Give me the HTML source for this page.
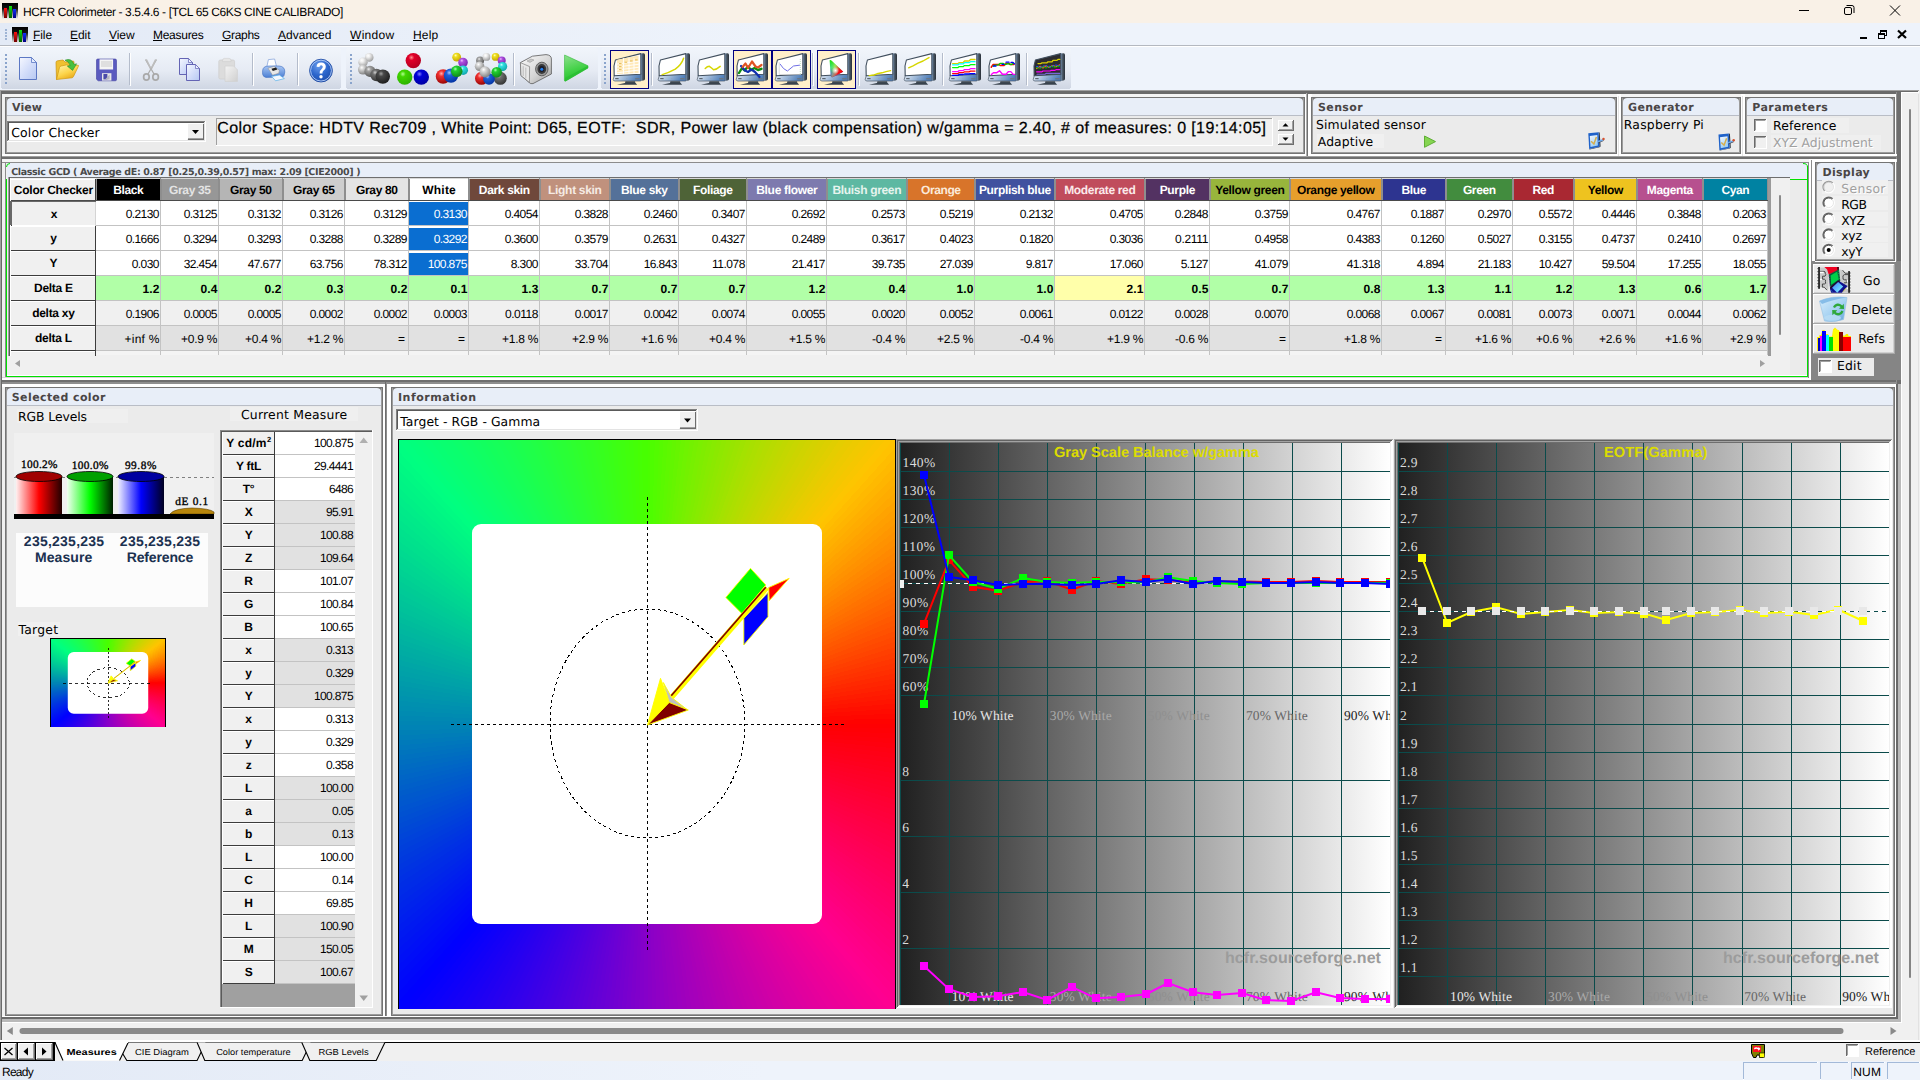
<!DOCTYPE html>
<html lang="en"><head><meta charset="utf-8"><title>HCFR Colorimeter - 3.5.4.6 - [TCL 65 C6KS CINE CALIBRADO]</title>
<style>
html,body{margin:0;padding:0;background:#f0f0f0;overflow:hidden;}
svg{display:block;}
text{white-space:pre;}
</style></head><body>
<svg width="1920" height="1080" viewBox="0 0 1920 1080" shape-rendering="crispEdges" text-rendering="geometricPrecision">
<defs>
<linearGradient id="icobg" x1="0" y1="0" x2="0" y2="1"><stop offset="0" stop-color="#000"/><stop offset="0.35" stop-color="#111"/><stop offset="1" stop-color="#f4f4f4"/></linearGradient>
<linearGradient id="icor" x1="0" y1="0" x2="0" y2="1"><stop offset="0" stop-color="#ff1010"/><stop offset="1" stop-color="#700000"/></linearGradient>
<linearGradient id="icog" x1="0" y1="0" x2="0" y2="1"><stop offset="0" stop-color="#10e010"/><stop offset="1" stop-color="#006000"/></linearGradient>
<linearGradient id="icob" x1="0" y1="0" x2="0" y2="1"><stop offset="0" stop-color="#1030ff"/><stop offset="1" stop-color="#000080"/></linearGradient>
<linearGradient id="tbgrad" x1="0" y1="0" x2="0" y2="1"><stop offset="0" stop-color="#f1f5fb"/><stop offset="0.55" stop-color="#e6ebf4"/><stop offset="1" stop-color="#cfd6e3"/></linearGradient>
<linearGradient id="menugrad" gradientUnits="userSpaceOnUse" x1="0" y1="0" x2="1920" y2="0"><stop offset="0" stop-color="#e3eaf6"/><stop offset="0.4" stop-color="#eef3fb"/><stop offset="1" stop-color="#eef3fb"/></linearGradient>
</defs>
<rect x="0" y="0" width="1920" height="1080" fill="#f0f0f0" />
<rect x="0" y="0" width="1920" height="23" fill="#f9f1e7" />
<g transform="translate(2,3) scale(1.0)">
<rect x="0" y="0" width="16" height="16" fill="url(#icobg)"/>
<rect x="2" y="5" width="3" height="10" fill="url(#icor)"/>
<rect x="6.5" y="3" width="3" height="12" fill="url(#icog)"/>
<rect x="11" y="6" width="3" height="9" fill="url(#icob)"/>
</g>
<text x="23.00" y="16.00" font-family="'Liberation Sans', sans-serif" font-size="12" fill="#000" letter-spacing="-0.380" >HCFR Colorimeter - 3.5.4.6 - [TCL 65 C6KS CINE CALIBRADO]</text>
<g stroke="#000" stroke-width="1" fill="none" shape-rendering="geometricPrecision">
<path d="M1799 10.5H1809"/>
<rect x="1844.5" y="7.5" width="7" height="7" rx="1.5"/>
<path d="M1846.5 5.5H1852 a2 2 0 0 1 2 2 V13"/>
<path d="M1890 5.5L1900 15.5M1900 5.5L1890 15.5"/>
</g>
<rect x="0" y="23" width="1920" height="22" fill="url(#menugrad)" />
<rect x="0" y="45" width="1920" height="1" fill="#b4b8c0" />
<rect x="0" y="46" width="1920" height="1" fill="#ffffff" />
<rect x="5" y="29" width="2" height="2" fill="#9fb4d4" />
<rect x="5" y="32" width="2" height="2" fill="#9fb4d4" />
<rect x="5" y="35" width="2" height="2" fill="#9fb4d4" />
<rect x="5" y="38" width="2" height="2" fill="#9fb4d4" />
<g transform="translate(12,27) scale(1.0)">
<rect x="0" y="0" width="16" height="16" fill="url(#icobg)"/>
<rect x="2" y="5" width="3" height="10" fill="url(#icor)"/>
<rect x="6.5" y="3" width="3" height="12" fill="url(#icog)"/>
<rect x="11" y="6" width="3" height="9" fill="url(#icob)"/>
</g>
<text x="33.00" y="39.00" font-family="'Liberation Sans', sans-serif" font-size="12" fill="#000" letter-spacing="-0.084" >File</text>
<rect x="33" y="40" width="7" height="1" fill="#000" />
<text x="70.00" y="39.00" font-family="'Liberation Sans', sans-serif" font-size="12" fill="#000" letter-spacing="-0.045" >Edit</text>
<rect x="70" y="40" width="8" height="1" fill="#000" />
<text x="109.00" y="39.00" font-family="'Liberation Sans', sans-serif" font-size="12" fill="#000" letter-spacing="-0.074" >View</text>
<rect x="109" y="40" width="8" height="1" fill="#000" />
<text x="153.00" y="39.00" font-family="'Liberation Sans', sans-serif" font-size="12" fill="#000" letter-spacing="-0.274" >Measures</text>
<rect x="153" y="40" width="9" height="1" fill="#000" />
<text x="222.00" y="39.00" font-family="'Liberation Sans', sans-serif" font-size="12" fill="#000" letter-spacing="-0.309" >Graphs</text>
<rect x="222" y="40" width="9" height="1" fill="#000" />
<text x="278.00" y="39.00" font-family="'Liberation Sans', sans-serif" font-size="12" fill="#000" letter-spacing="0.016" >Advanced</text>
<rect x="278" y="40" width="8" height="1" fill="#000" />
<text x="350.00" y="39.00" font-family="'Liberation Sans', sans-serif" font-size="12" fill="#000" letter-spacing="0.303" >Window</text>
<rect x="350" y="40" width="12" height="1" fill="#000" />
<text x="413.00" y="39.00" font-family="'Liberation Sans', sans-serif" font-size="12" fill="#000" letter-spacing="0.205" >Help</text>
<rect x="413" y="40" width="9" height="1" fill="#000" />
<rect x="1860" y="37" width="7" height="2" fill="#000" />
<g fill="none" stroke="#000" stroke-width="1">
<rect x="1880.5" y="30.5" width="6" height="5"/><rect x="1878.5" y="33.5" width="6" height="5" fill="#eef3fb"/>
</g>
<rect x="1880" y="31" width="7" height="1" fill="#000" />
<rect x="1878" y="34" width="7" height="1" fill="#000" />
<path d="M1898 30.5L1906 38M1906 30.5L1898 38" stroke="#000" stroke-width="2.2" fill="none" shape-rendering="geometricPrecision"/>
<rect x="0" y="47" width="1920" height="43" fill="#eef3fb" />
<rect x="1" y="48" width="340" height="41" rx="3" fill="url(#tbgrad)"/>
<rect x="346" y="48" width="252" height="41" rx="3" fill="url(#tbgrad)"/>
<rect x="601" y="48" width="470" height="41" rx="3" fill="url(#tbgrad)"/>
<rect x="5" y="54" width="2" height="2" fill="#8aa4cc" />
<rect x="5" y="58" width="2" height="2" fill="#8aa4cc" />
<rect x="5" y="62" width="2" height="2" fill="#8aa4cc" />
<rect x="5" y="66" width="2" height="2" fill="#8aa4cc" />
<rect x="5" y="70" width="2" height="2" fill="#8aa4cc" />
<rect x="5" y="74" width="2" height="2" fill="#8aa4cc" />
<rect x="5" y="78" width="2" height="2" fill="#8aa4cc" />
<rect x="5" y="82" width="2" height="2" fill="#8aa4cc" />
<rect x="350" y="54" width="2" height="2" fill="#8aa4cc" />
<rect x="350" y="58" width="2" height="2" fill="#8aa4cc" />
<rect x="350" y="62" width="2" height="2" fill="#8aa4cc" />
<rect x="350" y="66" width="2" height="2" fill="#8aa4cc" />
<rect x="350" y="70" width="2" height="2" fill="#8aa4cc" />
<rect x="350" y="74" width="2" height="2" fill="#8aa4cc" />
<rect x="350" y="78" width="2" height="2" fill="#8aa4cc" />
<rect x="350" y="82" width="2" height="2" fill="#8aa4cc" />
<rect x="604" y="54" width="2" height="2" fill="#8aa4cc" />
<rect x="604" y="58" width="2" height="2" fill="#8aa4cc" />
<rect x="604" y="62" width="2" height="2" fill="#8aa4cc" />
<rect x="604" y="66" width="2" height="2" fill="#8aa4cc" />
<rect x="604" y="70" width="2" height="2" fill="#8aa4cc" />
<rect x="604" y="74" width="2" height="2" fill="#8aa4cc" />
<rect x="604" y="78" width="2" height="2" fill="#8aa4cc" />
<rect x="604" y="82" width="2" height="2" fill="#8aa4cc" />
<rect x="0" y="90" width="1919" height="1" fill="#a0a0a0" />
<rect x="0" y="91" width="1918" height="1" fill="#6a6a6a" />
<rect x="1" y="92" width="1900" height="2" fill="#6a6a6a" />
<rect x="0" y="90" width="1" height="950" fill="#a0a0a0" />
<rect x="1" y="92" width="1" height="948" fill="#6a6a6a" />
<rect x="0" y="1042" width="1920" height="1" fill="#000" />
<rect x="0" y="1043" width="1920" height="18" fill="#f0f0f0" />
<rect x="0" y="1061" width="1920" height="19" fill="url(#menugrad)" />
<text x="2.00" y="1076.00" font-family="'Liberation Sans', sans-serif" font-size="12" fill="#000" letter-spacing="-0.738" >Ready</text>
<rect x="1743" y="1062" width="75" height="18" fill="#ffffff" />
<rect x="1743" y="1062" width="74" height="17" fill="#a3b9d8" />
<rect x="1744" y="1063" width="74" height="17" fill="#eef3fb" />
<rect x="1820" y="1062" width="29" height="18" fill="#ffffff" />
<rect x="1820" y="1062" width="28" height="17" fill="#a3b9d8" />
<rect x="1821" y="1063" width="28" height="17" fill="#eef3fb" />
<rect x="1851" y="1062" width="34" height="18" fill="#ffffff" />
<rect x="1851" y="1062" width="33" height="17" fill="#a3b9d8" />
<rect x="1852" y="1063" width="33" height="17" fill="#eef3fb" />
<rect x="1887" y="1062" width="33" height="18" fill="#ffffff" />
<rect x="1887" y="1062" width="32" height="17" fill="#a3b9d8" />
<rect x="1888" y="1063" width="32" height="17" fill="#eef3fb" />
<text x="1853.30" y="1075.50" font-family="'Liberation Sans', sans-serif" font-size="12" fill="#000" letter-spacing="0.157" >NUM</text>
<defs><linearGradient id="edg" x1="0" y1="0" x2="0.4" y2="1"><stop offset="0" stop-color="#f6f9fe"/><stop offset="1" stop-color="#9ccff6"/></linearGradient></defs>
<rect x="2" y="94" width="1896" height="3" fill="#f4f4f4" />
<rect x="1895" y="94" width="1" height="928" fill="#ffffff" />
<rect x="1896" y="92" width="1" height="292" fill="#909090" />
<rect x="1897" y="92" width="4" height="292" fill="#6e6e6e" />
<rect x="1896" y="384" width="2" height="635" fill="#6a6a6a" />
<rect x="1898" y="384" width="3" height="638" fill="#b9b9b9" />
<rect x="1901" y="92" width="1" height="931" fill="#ffffff" />
<rect x="1902" y="92" width="18" height="948" fill="#f0f0f0" />
<rect x="1901" y="92" width="18" height="1" fill="#ffffff" />
<rect x="1918" y="94" width="1" height="946" fill="#e2e2e2" />
<rect x="2" y="154" width="1895" height="2" fill="#ffffff" />
<rect x="2" y="156" width="1894" height="1" fill="#a0a0a0" />
<rect x="2" y="157" width="1894" height="2" fill="#6e6e6e" />
<rect x="2" y="159" width="1895" height="3" fill="#f4f4f4" />
<rect x="1304" y="94" width="8" height="62" fill="#ffffff" />
<rect x="1306" y="93" width="1" height="63" fill="#b0b0b0" />
<rect x="1307" y="93" width="1" height="63" fill="#707070" />
<rect x="1617" y="94" width="4" height="62" fill="#ffffff" />
<rect x="1618" y="96" width="1" height="60" fill="#e4e4e4" />
<rect x="1741" y="94" width="4" height="62" fill="#ffffff" />
<rect x="1742" y="96" width="1" height="60" fill="#e4e4e4" />
<rect x="5" y="97" width="1301" height="58" fill="#ffffff" />
<rect x="5" y="97" width="1300" height="57" fill="#747474" />
<rect x="6" y="98" width="1298" height="55" fill="#9c9c9c" />
<rect x="7" y="99" width="1296" height="53" fill="#ebebeb" />
<path d="M7 115 V102 Q7 98 11 98 H1299 Q1303 98 1303 102 V115 Z" fill="#e8eef8" shape-rendering="geometricPrecision"/>
<path d="M7 102 Q7 98 11 98 H7 Z" fill="#7c7c7c" shape-rendering="geometricPrecision"/>
<path d="M1303 102 Q1303 98 1299 98 H1303 Z" fill="#7c7c7c" shape-rendering="geometricPrecision"/>
<rect x="7" y="115" width="1296" height="1" fill="#b9bdc6" />
<text x="12.00" y="110.60" font-family="'DejaVu Sans', sans-serif" font-size="11" font-weight="bold" fill="#4a4646" letter-spacing="0.072" >View</text>
<rect x="7" y="121" width="199" height="21" fill="#ffffff" />
<rect x="7" y="121" width="198" height="20" fill="#808080" />
<rect x="8" y="122" width="197" height="19" fill="#e3e3e3" />
<rect x="8" y="122" width="196" height="18" fill="#5a5a5a" />
<rect x="9" y="123" width="195" height="17" fill="#ffffff" />
<rect x="187" y="123" width="17" height="17" fill="#f0f0f0" />
<rect x="187" y="123" width="16" height="16" fill="#ffffff" />
<rect x="188" y="124" width="16" height="16" fill="#6d6d6d" />
<rect x="188" y="124" width="15" height="15" fill="#f0f0f0" />
<rect x="188" y="124" width="15" height="14" fill="#f0f0f0" />
<rect x="188" y="138" width="15" height="1" fill="#a0a0a0" />
<path d="M192.0 130.0 H199.0 L195.5 134.0 Z" fill="#000" shape-rendering="geometricPrecision"/>
<text x="11.30" y="137.00" font-family="'DejaVu Sans', sans-serif" font-size="12.4" fill="#000" letter-spacing="0.135" >Color Checker</text>
<rect x="216" y="118" width="1057" height="28" fill="#ffffff" />
<rect x="216" y="118" width="1056" height="27" fill="#a0a0a0" />
<rect x="217" y="119" width="1055" height="26" fill="#f0f0f0" />
<text x="217.30" y="133.20" font-family="'Liberation Sans', sans-serif" font-size="16" fill="#000" letter-spacing="0.388" stroke="#000" stroke-width="0.25">Color Space: HDTV Rec709 , White Point: D65, EOTF:  SDR, Power law (black compensation) w/gamma = 2.40, # of measures: 0 [19:14:05]</text>
<rect x="1278" y="120" width="16" height="11" fill="#6d6d6d" />
<rect x="1278" y="120" width="15" height="10" fill="#ffffff" />
<rect x="1279" y="121" width="14" height="9" fill="#a0a0a0" />
<rect x="1279" y="121" width="13" height="8" fill="#f0f0f0" />
<path d="M1282.5 126.5 H1288.5 L1285.5 123.2 Z" fill="#000" shape-rendering="geometricPrecision"/>
<rect x="1278" y="134" width="16" height="11" fill="#6d6d6d" />
<rect x="1278" y="134" width="15" height="10" fill="#ffffff" />
<rect x="1279" y="135" width="14" height="9" fill="#a0a0a0" />
<rect x="1279" y="135" width="13" height="8" fill="#f0f0f0" />
<path d="M1282.5 137.5 H1288.5 L1285.5 140.8 Z" fill="#000" shape-rendering="geometricPrecision"/>
<rect x="1311" y="97" width="307" height="58" fill="#ffffff" />
<rect x="1311" y="97" width="306" height="57" fill="#747474" />
<rect x="1312" y="98" width="304" height="55" fill="#9c9c9c" />
<rect x="1313" y="99" width="302" height="53" fill="#ebebeb" />
<path d="M1313 115 V102 Q1313 98 1317 98 H1611 Q1615 98 1615 102 V115 Z" fill="#e8eef8" shape-rendering="geometricPrecision"/>
<path d="M1313 102 Q1313 98 1317 98 H1313 Z" fill="#7c7c7c" shape-rendering="geometricPrecision"/>
<path d="M1615 102 Q1615 98 1611 98 H1615 Z" fill="#7c7c7c" shape-rendering="geometricPrecision"/>
<rect x="1313" y="115" width="302" height="1" fill="#b9bdc6" />
<text x="1318.00" y="110.60" font-family="'DejaVu Sans', sans-serif" font-size="11" font-weight="bold" fill="#4a4646" letter-spacing="0.376" >Sensor</text>
<text x="1316.00" y="128.80" font-family="'DejaVu Sans', sans-serif" font-size="12.4" fill="#000" letter-spacing="0.144" >Simulated sensor</text>
<rect x="1317" y="134" width="67" height="14" fill="#f0f0f0" />
<text x="1317.80" y="145.70" font-family="'DejaVu Sans', sans-serif" font-size="12.4" fill="#000" letter-spacing="0.078" >Adaptive</text>
<path d="M1424.5 136 L1435.5 141.6 L1424.5 147.3 Z" fill="#86d552" stroke="#5fae35" stroke-width="1" shape-rendering="geometricPrecision"/>
<g transform="translate(1588,133)" shape-rendering="geometricPrecision">
<path d="M1.6 16.4 L11.6 14.2 L12.6 13.6 L11.7 -0.4 L10.6 -0.7 L11.4 13.8 L1.2 16 Z" fill="#2c3642"/>
<path d="M0.3 0.3 L10.6 -0.7 L11.4 13.8 L1.2 16 Z" fill="#1f62c9"/>
<path d="M1.8 3 L9.3 2 L9.9 12.6 L2.5 14 Z" fill="url(#edg)"/>
<path d="M3.1 8.3 L5.9 11 L8.4 4.1" stroke="#d6ae4c" stroke-width="1.5" fill="none"/>
<path d="M10.2 9.6 L15.6 7.5" stroke="#3a4048" stroke-width="0.9"/>
<path d="M9.8 8.7 L15 6.7" stroke="#6aa8ec" stroke-width="1.5"/>
<circle cx="15.5" cy="6.1" r="1.25" fill="#d4512f"/>
</g>
<rect x="1621" y="97" width="121" height="58" fill="#ffffff" />
<rect x="1621" y="97" width="120" height="57" fill="#747474" />
<rect x="1622" y="98" width="118" height="55" fill="#9c9c9c" />
<rect x="1623" y="99" width="116" height="53" fill="#ebebeb" />
<path d="M1623 115 V102 Q1623 98 1627 98 H1735 Q1739 98 1739 102 V115 Z" fill="#e8eef8" shape-rendering="geometricPrecision"/>
<path d="M1623 102 Q1623 98 1627 98 H1623 Z" fill="#7c7c7c" shape-rendering="geometricPrecision"/>
<path d="M1739 102 Q1739 98 1735 98 H1739 Z" fill="#7c7c7c" shape-rendering="geometricPrecision"/>
<rect x="1623" y="115" width="116" height="1" fill="#b9bdc6" />
<text x="1628.00" y="110.60" font-family="'DejaVu Sans', sans-serif" font-size="11" font-weight="bold" fill="#4a4646" letter-spacing="0.348" >Generator</text>
<text x="1623.80" y="128.80" font-family="'DejaVu Sans', sans-serif" font-size="12.4" fill="#000" letter-spacing="0.218" >Raspberry Pi</text>
<g transform="translate(1718.2,134.2)" shape-rendering="geometricPrecision">
<path d="M1.6 16.4 L11.6 14.2 L12.6 13.6 L11.7 -0.4 L10.6 -0.7 L11.4 13.8 L1.2 16 Z" fill="#2c3642"/>
<path d="M0.3 0.3 L10.6 -0.7 L11.4 13.8 L1.2 16 Z" fill="#1f62c9"/>
<path d="M1.8 3 L9.3 2 L9.9 12.6 L2.5 14 Z" fill="url(#edg)"/>
<path d="M3.1 8.3 L5.9 11 L8.4 4.1" stroke="#d6ae4c" stroke-width="1.5" fill="none"/>
<path d="M10.2 9.6 L15.6 7.5" stroke="#3a4048" stroke-width="0.9"/>
<path d="M9.8 8.7 L15 6.7" stroke="#6aa8ec" stroke-width="1.5"/>
<circle cx="15.5" cy="6.1" r="1.25" fill="#d4512f"/>
</g>
<rect x="1745" y="97" width="151" height="58" fill="#ffffff" />
<rect x="1745" y="97" width="150" height="57" fill="#747474" />
<rect x="1746" y="98" width="148" height="55" fill="#9c9c9c" />
<rect x="1747" y="99" width="146" height="53" fill="#ebebeb" />
<path d="M1747 115 V102 Q1747 98 1751 98 H1889 Q1893 98 1893 102 V115 Z" fill="#e8eef8" shape-rendering="geometricPrecision"/>
<path d="M1747 102 Q1747 98 1751 98 H1747 Z" fill="#7c7c7c" shape-rendering="geometricPrecision"/>
<path d="M1893 102 Q1893 98 1889 98 H1893 Z" fill="#7c7c7c" shape-rendering="geometricPrecision"/>
<rect x="1747" y="115" width="146" height="1" fill="#b9bdc6" />
<text x="1752.30" y="110.60" font-family="'DejaVu Sans', sans-serif" font-size="11" font-weight="bold" fill="#4a4646" letter-spacing="0.435" >Parameters</text>
<rect x="1771" y="118" width="78" height="15" fill="#efefef" />
<rect x="1754" y="119" width="13" height="13" fill="#ffffff" />
<rect x="1754" y="119" width="12" height="12" fill="#6a6a6a" />
<rect x="1755" y="120" width="11" height="11" fill="#e3e3e3" />
<rect x="1755" y="120" width="10" height="10" fill="#a0a0a0" />
<rect x="1756" y="121" width="10" height="10" fill="#fff" />
<text x="1773.00" y="129.90" font-family="'DejaVu Sans', sans-serif" font-size="12.4" fill="#000" letter-spacing="0.117" >Reference</text>
<rect x="1771" y="135" width="110" height="15" fill="#efefef" />
<rect x="1754" y="136" width="13" height="13" fill="#ffffff" />
<rect x="1754" y="136" width="12" height="12" fill="#6a6a6a" />
<rect x="1755" y="137" width="11" height="11" fill="#e3e3e3" />
<rect x="1755" y="137" width="10" height="10" fill="#a0a0a0" />
<rect x="1756" y="138" width="10" height="10" fill="#f0f0f0" />
<text x="1774.00" y="148.00" font-family="'DejaVu Sans', sans-serif" font-size="12.4" fill="#ffffff" letter-spacing="0.007" >XYZ Adjustment</text>
<text x="1773.00" y="147.00" font-family="'DejaVu Sans', sans-serif" font-size="12.4" fill="#a0a0a0" letter-spacing="0.007" >XYZ Adjustment</text>
<rect x="2" y="162" width="1808" height="1" fill="#8c8c8c" />
<rect x="5" y="163" width="1804" height="214" fill="#f0f0f0" />
<rect x="7" y="163" width="1800" height="15" fill="#e8eef8" />
<text x="11.20" y="175.00" font-family="'DejaVu Sans', sans-serif" font-size="9.5" font-weight="bold" fill="#4a4a4a" letter-spacing="-0.359" >Classic GCD ( Average dE: 0.87 [0.25,0.39,0.57] max: 2.09 [CIE2000] )</text>
<rect x="5" y="162" width="1" height="216" fill="#8c8c8c" />
<rect x="6" y="179" width="1" height="198" fill="#00e000" />
<rect x="1807" y="166" width="1" height="211" fill="#00e000" />
<rect x="6" y="376" width="1802" height="1" fill="#00e000" />
<rect x="1790" y="179" width="18" height="1" fill="#00e000" />
<path d="M6.5 167 Q6.5 163.5 10 163.5" stroke="#00e000" fill="none" stroke-width="1" shape-rendering="geometricPrecision"/>
<path d="M1807.5 167 Q1807.5 163.5 1803 163.5" stroke="#00e000" fill="none" stroke-width="1" shape-rendering="geometricPrecision"/>
<rect x="7" y="375" width="1800" height="1" fill="#ffffff" />
<rect x="1790" y="180" width="17" height="195" fill="#ebebeb" />
<rect x="8" y="177" width="1782" height="198" fill="#f0f0f0" />
<rect x="8" y="177" width="1782" height="1" fill="#6e6e6e" />
<rect x="8" y="177" width="1" height="179" fill="#a0a0a0" />
<rect x="9" y="177" width="1" height="179" fill="#5a5a5a" />
<rect x="10" y="178" width="1" height="178" fill="#ffffff" />
<rect x="11" y="179" width="84" height="176" fill="#f0f0f0" />
<rect x="11" y="179" width="84" height="1" fill="#ffffff" />
<rect x="95" y="179" width="1" height="177" fill="#3c3c3c" />
<text x="53.39" y="193.70" font-family="'Liberation Sans', sans-serif" font-size="12" font-weight="bold" fill="#000" text-anchor="middle" letter-spacing="-0.217" >Color Checker</text>
<rect x="96" y="201" width="1672" height="25" fill="#ffffff" />
<rect x="96" y="226" width="1672" height="25" fill="#ffffff" />
<rect x="96" y="251" width="1672" height="25" fill="#ffffff" />
<rect x="96" y="276" width="1672" height="25" fill="#b1ffa7" />
<rect x="96" y="301" width="1672" height="25" fill="#f0f0f0" />
<rect x="96" y="326" width="1672" height="25" fill="#e1e1e1" />
<rect x="96" y="351" width="1672" height="4" fill="#f4f4f4" />
<rect x="1055" y="276" width="89" height="24" fill="#ffffaa" />
<rect x="409" y="202" width="59" height="23" fill="#0a6ed1" />
<rect x="409" y="228" width="59" height="22" fill="#0a6ed1" />
<rect x="409" y="253" width="59" height="22" fill="#0a6ed1" />
<rect x="96" y="225" width="1672" height="1" fill="#c3c3c3" />
<rect x="11" y="225" width="84" height="1" fill="#3c3c3c" />
<rect x="11" y="226" width="84" height="1" fill="#ffffff" />
<rect x="96" y="250" width="1672" height="1" fill="#c3c3c3" />
<rect x="11" y="250" width="84" height="1" fill="#3c3c3c" />
<rect x="11" y="251" width="84" height="1" fill="#ffffff" />
<rect x="96" y="275" width="1672" height="1" fill="#c3c3c3" />
<rect x="11" y="275" width="84" height="1" fill="#3c3c3c" />
<rect x="11" y="276" width="84" height="1" fill="#ffffff" />
<rect x="96" y="300" width="1672" height="1" fill="#c3c3c3" />
<rect x="11" y="300" width="84" height="1" fill="#3c3c3c" />
<rect x="11" y="301" width="84" height="1" fill="#ffffff" />
<rect x="96" y="325" width="1672" height="1" fill="#c3c3c3" />
<rect x="11" y="325" width="84" height="1" fill="#3c3c3c" />
<rect x="11" y="326" width="84" height="1" fill="#ffffff" />
<rect x="96" y="350" width="1672" height="1" fill="#c3c3c3" />
<rect x="11" y="350" width="84" height="1" fill="#3c3c3c" />
<rect x="11" y="351" width="84" height="1" fill="#ffffff" />
<rect x="160" y="201" width="1" height="154" fill="#c3c3c3" />
<rect x="218" y="201" width="1" height="154" fill="#c3c3c3" />
<rect x="282" y="201" width="1" height="154" fill="#c3c3c3" />
<rect x="344" y="201" width="1" height="154" fill="#c3c3c3" />
<rect x="408" y="201" width="1" height="154" fill="#c3c3c3" />
<rect x="468" y="201" width="1" height="154" fill="#c3c3c3" />
<rect x="539" y="201" width="1" height="154" fill="#c3c3c3" />
<rect x="609" y="201" width="1" height="154" fill="#c3c3c3" />
<rect x="678" y="201" width="1" height="154" fill="#c3c3c3" />
<rect x="746" y="201" width="1" height="154" fill="#c3c3c3" />
<rect x="826" y="201" width="1" height="154" fill="#c3c3c3" />
<rect x="906" y="201" width="1" height="154" fill="#c3c3c3" />
<rect x="974" y="201" width="1" height="154" fill="#c3c3c3" />
<rect x="1054" y="201" width="1" height="154" fill="#c3c3c3" />
<rect x="1144" y="201" width="1" height="154" fill="#c3c3c3" />
<rect x="1209" y="201" width="1" height="154" fill="#c3c3c3" />
<rect x="1289" y="201" width="1" height="154" fill="#c3c3c3" />
<rect x="1381" y="201" width="1" height="154" fill="#c3c3c3" />
<rect x="1445" y="201" width="1" height="154" fill="#c3c3c3" />
<rect x="1512" y="201" width="1" height="154" fill="#c3c3c3" />
<rect x="1573" y="201" width="1" height="154" fill="#c3c3c3" />
<rect x="1636" y="201" width="1" height="154" fill="#c3c3c3" />
<rect x="1702" y="201" width="1" height="154" fill="#c3c3c3" />
<rect x="1767" y="201" width="1" height="154" fill="#c3c3c3" />
<rect x="11" y="200" width="1757" height="1" fill="#4a4a4a" />
<rect x="96" y="178" width="65" height="22" fill="#8e8e8e" />
<rect x="96" y="178" width="64" height="1" fill="#d8d8d8" />
<rect x="97" y="179" width="63" height="21" fill="#000000" />
<text x="128.32" y="193.70" font-family="'Liberation Sans', sans-serif" font-size="12" font-weight="bold" fill="#ffffff" text-anchor="middle" letter-spacing="-0.352" >Black</text>
<rect x="161" y="178" width="58" height="22" fill="#8e8e8e" />
<rect x="161" y="178" width="57" height="1" fill="#d8d8d8" />
<rect x="162" y="179" width="56" height="21" fill="#979797" />
<text x="189.83" y="193.70" font-family="'Liberation Sans', sans-serif" font-size="12" font-weight="bold" fill="#e4e4e4" text-anchor="middle" letter-spacing="-0.346" >Gray 35</text>
<rect x="219" y="178" width="64" height="22" fill="#8e8e8e" />
<rect x="219" y="178" width="63" height="1" fill="#d8d8d8" />
<rect x="220" y="179" width="62" height="21" fill="#b5b5b5" />
<text x="250.83" y="193.70" font-family="'Liberation Sans', sans-serif" font-size="12" font-weight="bold" fill="#000000" text-anchor="middle" letter-spacing="-0.346" >Gray 50</text>
<rect x="283" y="178" width="62" height="22" fill="#8e8e8e" />
<rect x="283" y="178" width="61" height="1" fill="#d8d8d8" />
<rect x="284" y="179" width="60" height="21" fill="#cecece" />
<text x="313.83" y="193.70" font-family="'Liberation Sans', sans-serif" font-size="12" font-weight="bold" fill="#000000" text-anchor="middle" letter-spacing="-0.346" >Gray 65</text>
<rect x="345" y="178" width="64" height="22" fill="#8e8e8e" />
<rect x="345" y="178" width="63" height="1" fill="#d8d8d8" />
<rect x="346" y="179" width="62" height="21" fill="#e4e4e4" />
<text x="376.83" y="193.70" font-family="'Liberation Sans', sans-serif" font-size="12" font-weight="bold" fill="#000000" text-anchor="middle" letter-spacing="-0.346" >Gray 80</text>
<rect x="409" y="178" width="60" height="22" fill="#8e8e8e" />
<rect x="409" y="178" width="59" height="1" fill="#d8d8d8" />
<rect x="410" y="179" width="58" height="21" fill="#ffffff" />
<text x="439.11" y="193.70" font-family="'Liberation Sans', sans-serif" font-size="12" font-weight="bold" fill="#000000" text-anchor="middle" letter-spacing="0.229" >White</text>
<rect x="469" y="178" width="71" height="22" fill="#8e8e8e" />
<rect x="469" y="178" width="70" height="1" fill="#d8d8d8" />
<rect x="470" y="179" width="69" height="21" fill="#6f483b" />
<text x="504.33" y="193.70" font-family="'Liberation Sans', sans-serif" font-size="12" font-weight="bold" fill="#ffffff" text-anchor="middle" letter-spacing="-0.330" >Dark skin</text>
<rect x="540" y="178" width="70" height="22" fill="#8e8e8e" />
<rect x="540" y="178" width="69" height="1" fill="#d8d8d8" />
<rect x="541" y="179" width="68" height="21" fill="#c0917d" />
<text x="574.84" y="193.70" font-family="'Liberation Sans', sans-serif" font-size="12" font-weight="bold" fill="#f6ebe4" text-anchor="middle" letter-spacing="-0.312" >Light skin</text>
<rect x="610" y="178" width="69" height="22" fill="#8e8e8e" />
<rect x="610" y="178" width="68" height="1" fill="#d8d8d8" />
<rect x="611" y="179" width="67" height="21" fill="#547199" />
<text x="644.33" y="193.70" font-family="'Liberation Sans', sans-serif" font-size="12" font-weight="bold" fill="#ffffff" text-anchor="middle" letter-spacing="-0.339" >Blue sky</text>
<rect x="679" y="178" width="68" height="22" fill="#8e8e8e" />
<rect x="679" y="178" width="67" height="1" fill="#d8d8d8" />
<rect x="680" y="179" width="66" height="21" fill="#4e6337" />
<text x="712.83" y="193.70" font-family="'Liberation Sans', sans-serif" font-size="12" font-weight="bold" fill="#ffffff" text-anchor="middle" letter-spacing="-0.330" >Foliage</text>
<rect x="747" y="178" width="80" height="22" fill="#8e8e8e" />
<rect x="747" y="178" width="79" height="1" fill="#d8d8d8" />
<rect x="748" y="179" width="78" height="21" fill="#7d7aae" />
<text x="786.84" y="193.70" font-family="'Liberation Sans', sans-serif" font-size="12" font-weight="bold" fill="#ffffff" text-anchor="middle" letter-spacing="-0.323" >Blue flower</text>
<rect x="827" y="178" width="80" height="22" fill="#8e8e8e" />
<rect x="827" y="178" width="79" height="1" fill="#d8d8d8" />
<rect x="828" y="179" width="78" height="21" fill="#5db8a2" />
<text x="866.83" y="193.70" font-family="'Liberation Sans', sans-serif" font-size="12" font-weight="bold" fill="#e6f4ee" text-anchor="middle" letter-spacing="-0.333" >Bluish green</text>
<rect x="907" y="178" width="68" height="22" fill="#8e8e8e" />
<rect x="907" y="178" width="67" height="1" fill="#d8d8d8" />
<rect x="908" y="179" width="66" height="21" fill="#d8742a" />
<text x="940.81" y="193.70" font-family="'Liberation Sans', sans-serif" font-size="12" font-weight="bold" fill="#fbeadb" text-anchor="middle" letter-spacing="-0.385" >Orange</text>
<rect x="975" y="178" width="80" height="22" fill="#8e8e8e" />
<rect x="975" y="178" width="79" height="1" fill="#d8d8d8" />
<rect x="976" y="179" width="78" height="21" fill="#40529f" />
<text x="1014.84" y="193.70" font-family="'Liberation Sans', sans-serif" font-size="12" font-weight="bold" fill="#ffffff" text-anchor="middle" letter-spacing="-0.322" >Purplish blue</text>
<rect x="1055" y="178" width="90" height="22" fill="#8e8e8e" />
<rect x="1055" y="178" width="89" height="1" fill="#d8d8d8" />
<rect x="1056" y="179" width="88" height="21" fill="#c04c5c" />
<text x="1099.83" y="193.70" font-family="'Liberation Sans', sans-serif" font-size="12" font-weight="bold" fill="#fbe9ea" text-anchor="middle" letter-spacing="-0.345" >Moderate red</text>
<rect x="1145" y="178" width="65" height="22" fill="#8e8e8e" />
<rect x="1145" y="178" width="64" height="1" fill="#d8d8d8" />
<rect x="1146" y="179" width="63" height="21" fill="#533262" />
<text x="1177.33" y="193.70" font-family="'Liberation Sans', sans-serif" font-size="12" font-weight="bold" fill="#ffffff" text-anchor="middle" letter-spacing="-0.342" >Purple</text>
<rect x="1210" y="178" width="80" height="22" fill="#8e8e8e" />
<rect x="1210" y="178" width="79" height="1" fill="#d8d8d8" />
<rect x="1211" y="179" width="78" height="21" fill="#98b53c" />
<text x="1249.83" y="193.70" font-family="'Liberation Sans', sans-serif" font-size="12" font-weight="bold" fill="#000000" text-anchor="middle" letter-spacing="-0.336" >Yellow green</text>
<rect x="1290" y="178" width="92" height="22" fill="#8e8e8e" />
<rect x="1290" y="178" width="91" height="1" fill="#d8d8d8" />
<rect x="1291" y="179" width="90" height="21" fill="#e69f2c" />
<text x="1335.83" y="193.70" font-family="'Liberation Sans', sans-serif" font-size="12" font-weight="bold" fill="#000000" text-anchor="middle" letter-spacing="-0.347" >Orange yellow</text>
<rect x="1382" y="178" width="64" height="22" fill="#8e8e8e" />
<rect x="1382" y="178" width="63" height="1" fill="#d8d8d8" />
<rect x="1383" y="179" width="62" height="21" fill="#2d3490" />
<text x="1413.82" y="193.70" font-family="'Liberation Sans', sans-serif" font-size="12" font-weight="bold" fill="#ffffff" text-anchor="middle" letter-spacing="-0.358" >Blue</text>
<rect x="1446" y="178" width="67" height="22" fill="#8e8e8e" />
<rect x="1446" y="178" width="66" height="1" fill="#d8d8d8" />
<rect x="1447" y="179" width="65" height="21" fill="#428c3e" />
<text x="1479.31" y="193.70" font-family="'Liberation Sans', sans-serif" font-size="12" font-weight="bold" fill="#ffffff" text-anchor="middle" letter-spacing="-0.382" >Green</text>
<rect x="1513" y="178" width="61" height="22" fill="#8e8e8e" />
<rect x="1513" y="178" width="60" height="1" fill="#d8d8d8" />
<rect x="1514" y="179" width="59" height="21" fill="#a92832" />
<text x="1543.29" y="193.70" font-family="'Liberation Sans', sans-serif" font-size="12" font-weight="bold" fill="#ffffff" text-anchor="middle" letter-spacing="-0.416" >Red</text>
<rect x="1574" y="178" width="63" height="22" fill="#8e8e8e" />
<rect x="1574" y="178" width="62" height="1" fill="#d8d8d8" />
<rect x="1575" y="179" width="61" height="21" fill="#eec31f" />
<text x="1605.33" y="193.70" font-family="'Liberation Sans', sans-serif" font-size="12" font-weight="bold" fill="#000000" text-anchor="middle" letter-spacing="-0.342" >Yellow</text>
<rect x="1637" y="178" width="66" height="22" fill="#8e8e8e" />
<rect x="1637" y="178" width="65" height="1" fill="#d8d8d8" />
<rect x="1638" y="179" width="64" height="21" fill="#b7508f" />
<text x="1669.81" y="193.70" font-family="'Liberation Sans', sans-serif" font-size="12" font-weight="bold" fill="#ffffff" text-anchor="middle" letter-spacing="-0.382" >Magenta</text>
<rect x="1703" y="178" width="65" height="22" fill="#8e8e8e" />
<rect x="1703" y="178" width="64" height="1" fill="#d8d8d8" />
<rect x="1704" y="179" width="63" height="21" fill="#0082a2" />
<text x="1735.30" y="193.70" font-family="'Liberation Sans', sans-serif" font-size="12" font-weight="bold" fill="#ffffff" text-anchor="middle" letter-spacing="-0.403" >Cyan</text>
<text x="53.33" y="217.20" font-family="'Liberation Sans', sans-serif" font-size="12" font-weight="bold" fill="#000" text-anchor="middle" letter-spacing="-0.334" >x</text>
<text x="158.78" y="217.60" font-family="'Liberation Sans', sans-serif" font-size="12" fill="#000" text-anchor="end" letter-spacing="-0.617" >0.2130</text>
<text x="216.78" y="217.60" font-family="'Liberation Sans', sans-serif" font-size="12" fill="#000" text-anchor="end" letter-spacing="-0.617" >0.3125</text>
<text x="280.78" y="217.60" font-family="'Liberation Sans', sans-serif" font-size="12" fill="#000" text-anchor="end" letter-spacing="-0.617" >0.3132</text>
<text x="342.78" y="217.60" font-family="'Liberation Sans', sans-serif" font-size="12" fill="#000" text-anchor="end" letter-spacing="-0.617" >0.3126</text>
<text x="406.78" y="217.60" font-family="'Liberation Sans', sans-serif" font-size="12" fill="#000" text-anchor="end" letter-spacing="-0.617" >0.3129</text>
<text x="466.78" y="217.60" font-family="'Liberation Sans', sans-serif" font-size="12" fill="#ffffff" text-anchor="end" letter-spacing="-0.617" >0.3130</text>
<text x="537.78" y="217.60" font-family="'Liberation Sans', sans-serif" font-size="12" fill="#000" text-anchor="end" letter-spacing="-0.617" >0.4054</text>
<text x="607.78" y="217.60" font-family="'Liberation Sans', sans-serif" font-size="12" fill="#000" text-anchor="end" letter-spacing="-0.617" >0.3828</text>
<text x="676.78" y="217.60" font-family="'Liberation Sans', sans-serif" font-size="12" fill="#000" text-anchor="end" letter-spacing="-0.617" >0.2460</text>
<text x="744.78" y="217.60" font-family="'Liberation Sans', sans-serif" font-size="12" fill="#000" text-anchor="end" letter-spacing="-0.617" >0.3407</text>
<text x="824.78" y="217.60" font-family="'Liberation Sans', sans-serif" font-size="12" fill="#000" text-anchor="end" letter-spacing="-0.617" >0.2692</text>
<text x="904.78" y="217.60" font-family="'Liberation Sans', sans-serif" font-size="12" fill="#000" text-anchor="end" letter-spacing="-0.617" >0.2573</text>
<text x="972.78" y="217.60" font-family="'Liberation Sans', sans-serif" font-size="12" fill="#000" text-anchor="end" letter-spacing="-0.617" >0.5219</text>
<text x="1052.78" y="217.60" font-family="'Liberation Sans', sans-serif" font-size="12" fill="#000" text-anchor="end" letter-spacing="-0.617" >0.2132</text>
<text x="1142.78" y="217.60" font-family="'Liberation Sans', sans-serif" font-size="12" fill="#000" text-anchor="end" letter-spacing="-0.617" >0.4705</text>
<text x="1207.78" y="217.60" font-family="'Liberation Sans', sans-serif" font-size="12" fill="#000" text-anchor="end" letter-spacing="-0.617" >0.2848</text>
<text x="1287.78" y="217.60" font-family="'Liberation Sans', sans-serif" font-size="12" fill="#000" text-anchor="end" letter-spacing="-0.617" >0.3759</text>
<text x="1379.78" y="217.60" font-family="'Liberation Sans', sans-serif" font-size="12" fill="#000" text-anchor="end" letter-spacing="-0.617" >0.4767</text>
<text x="1443.78" y="217.60" font-family="'Liberation Sans', sans-serif" font-size="12" fill="#000" text-anchor="end" letter-spacing="-0.617" >0.1887</text>
<text x="1510.78" y="217.60" font-family="'Liberation Sans', sans-serif" font-size="12" fill="#000" text-anchor="end" letter-spacing="-0.617" >0.2970</text>
<text x="1571.78" y="217.60" font-family="'Liberation Sans', sans-serif" font-size="12" fill="#000" text-anchor="end" letter-spacing="-0.617" >0.5572</text>
<text x="1634.78" y="217.60" font-family="'Liberation Sans', sans-serif" font-size="12" fill="#000" text-anchor="end" letter-spacing="-0.617" >0.4446</text>
<text x="1700.78" y="217.60" font-family="'Liberation Sans', sans-serif" font-size="12" fill="#000" text-anchor="end" letter-spacing="-0.617" >0.3848</text>
<text x="1765.78" y="217.60" font-family="'Liberation Sans', sans-serif" font-size="12" fill="#000" text-anchor="end" letter-spacing="-0.617" >0.2063</text>
<text x="53.33" y="242.20" font-family="'Liberation Sans', sans-serif" font-size="12" font-weight="bold" fill="#000" text-anchor="middle" letter-spacing="-0.334" >y</text>
<text x="158.78" y="242.60" font-family="'Liberation Sans', sans-serif" font-size="12" fill="#000" text-anchor="end" letter-spacing="-0.617" >0.1666</text>
<text x="216.78" y="242.60" font-family="'Liberation Sans', sans-serif" font-size="12" fill="#000" text-anchor="end" letter-spacing="-0.617" >0.3294</text>
<text x="280.78" y="242.60" font-family="'Liberation Sans', sans-serif" font-size="12" fill="#000" text-anchor="end" letter-spacing="-0.617" >0.3293</text>
<text x="342.78" y="242.60" font-family="'Liberation Sans', sans-serif" font-size="12" fill="#000" text-anchor="end" letter-spacing="-0.617" >0.3288</text>
<text x="406.78" y="242.60" font-family="'Liberation Sans', sans-serif" font-size="12" fill="#000" text-anchor="end" letter-spacing="-0.617" >0.3289</text>
<text x="466.78" y="242.60" font-family="'Liberation Sans', sans-serif" font-size="12" fill="#ffffff" text-anchor="end" letter-spacing="-0.617" >0.3292</text>
<text x="537.78" y="242.60" font-family="'Liberation Sans', sans-serif" font-size="12" fill="#000" text-anchor="end" letter-spacing="-0.617" >0.3600</text>
<text x="607.78" y="242.60" font-family="'Liberation Sans', sans-serif" font-size="12" fill="#000" text-anchor="end" letter-spacing="-0.617" >0.3579</text>
<text x="676.78" y="242.60" font-family="'Liberation Sans', sans-serif" font-size="12" fill="#000" text-anchor="end" letter-spacing="-0.617" >0.2631</text>
<text x="744.78" y="242.60" font-family="'Liberation Sans', sans-serif" font-size="12" fill="#000" text-anchor="end" letter-spacing="-0.617" >0.4327</text>
<text x="824.78" y="242.60" font-family="'Liberation Sans', sans-serif" font-size="12" fill="#000" text-anchor="end" letter-spacing="-0.617" >0.2489</text>
<text x="904.78" y="242.60" font-family="'Liberation Sans', sans-serif" font-size="12" fill="#000" text-anchor="end" letter-spacing="-0.617" >0.3617</text>
<text x="972.78" y="242.60" font-family="'Liberation Sans', sans-serif" font-size="12" fill="#000" text-anchor="end" letter-spacing="-0.617" >0.4023</text>
<text x="1052.78" y="242.60" font-family="'Liberation Sans', sans-serif" font-size="12" fill="#000" text-anchor="end" letter-spacing="-0.617" >0.1820</text>
<text x="1142.78" y="242.60" font-family="'Liberation Sans', sans-serif" font-size="12" fill="#000" text-anchor="end" letter-spacing="-0.617" >0.3036</text>
<text x="1208.08" y="242.60" font-family="'Liberation Sans', sans-serif" font-size="12" fill="#000" text-anchor="end" letter-spacing="-0.320" >0.2111</text>
<text x="1287.78" y="242.60" font-family="'Liberation Sans', sans-serif" font-size="12" fill="#000" text-anchor="end" letter-spacing="-0.617" >0.4958</text>
<text x="1379.78" y="242.60" font-family="'Liberation Sans', sans-serif" font-size="12" fill="#000" text-anchor="end" letter-spacing="-0.617" >0.4383</text>
<text x="1443.78" y="242.60" font-family="'Liberation Sans', sans-serif" font-size="12" fill="#000" text-anchor="end" letter-spacing="-0.617" >0.1260</text>
<text x="1510.78" y="242.60" font-family="'Liberation Sans', sans-serif" font-size="12" fill="#000" text-anchor="end" letter-spacing="-0.617" >0.5027</text>
<text x="1571.78" y="242.60" font-family="'Liberation Sans', sans-serif" font-size="12" fill="#000" text-anchor="end" letter-spacing="-0.617" >0.3155</text>
<text x="1634.78" y="242.60" font-family="'Liberation Sans', sans-serif" font-size="12" fill="#000" text-anchor="end" letter-spacing="-0.617" >0.4737</text>
<text x="1700.78" y="242.60" font-family="'Liberation Sans', sans-serif" font-size="12" fill="#000" text-anchor="end" letter-spacing="-0.617" >0.2410</text>
<text x="1765.78" y="242.60" font-family="'Liberation Sans', sans-serif" font-size="12" fill="#000" text-anchor="end" letter-spacing="-0.617" >0.2697</text>
<text x="53.30" y="267.20" font-family="'Liberation Sans', sans-serif" font-size="12" font-weight="bold" fill="#000" text-anchor="middle" letter-spacing="-0.400" >Y</text>
<text x="158.79" y="267.60" font-family="'Liberation Sans', sans-serif" font-size="12" fill="#000" text-anchor="end" letter-spacing="-0.606" >0.030</text>
<text x="216.78" y="267.60" font-family="'Liberation Sans', sans-serif" font-size="12" fill="#000" text-anchor="end" letter-spacing="-0.617" >32.454</text>
<text x="280.78" y="267.60" font-family="'Liberation Sans', sans-serif" font-size="12" fill="#000" text-anchor="end" letter-spacing="-0.617" >47.677</text>
<text x="342.78" y="267.60" font-family="'Liberation Sans', sans-serif" font-size="12" fill="#000" text-anchor="end" letter-spacing="-0.617" >63.756</text>
<text x="406.78" y="267.60" font-family="'Liberation Sans', sans-serif" font-size="12" fill="#000" text-anchor="end" letter-spacing="-0.617" >78.312</text>
<text x="466.77" y="267.60" font-family="'Liberation Sans', sans-serif" font-size="12" fill="#ffffff" text-anchor="end" letter-spacing="-0.625" >100.875</text>
<text x="537.79" y="267.60" font-family="'Liberation Sans', sans-serif" font-size="12" fill="#000" text-anchor="end" letter-spacing="-0.606" >8.300</text>
<text x="607.78" y="267.60" font-family="'Liberation Sans', sans-serif" font-size="12" fill="#000" text-anchor="end" letter-spacing="-0.617" >33.704</text>
<text x="676.78" y="267.60" font-family="'Liberation Sans', sans-serif" font-size="12" fill="#000" text-anchor="end" letter-spacing="-0.617" >16.843</text>
<text x="744.93" y="267.60" font-family="'Liberation Sans', sans-serif" font-size="12" fill="#000" text-anchor="end" letter-spacing="-0.469" >11.078</text>
<text x="824.78" y="267.60" font-family="'Liberation Sans', sans-serif" font-size="12" fill="#000" text-anchor="end" letter-spacing="-0.617" >21.417</text>
<text x="904.78" y="267.60" font-family="'Liberation Sans', sans-serif" font-size="12" fill="#000" text-anchor="end" letter-spacing="-0.617" >39.735</text>
<text x="972.78" y="267.60" font-family="'Liberation Sans', sans-serif" font-size="12" fill="#000" text-anchor="end" letter-spacing="-0.617" >27.039</text>
<text x="1052.79" y="267.60" font-family="'Liberation Sans', sans-serif" font-size="12" fill="#000" text-anchor="end" letter-spacing="-0.606" >9.817</text>
<text x="1142.78" y="267.60" font-family="'Liberation Sans', sans-serif" font-size="12" fill="#000" text-anchor="end" letter-spacing="-0.617" >17.060</text>
<text x="1207.79" y="267.60" font-family="'Liberation Sans', sans-serif" font-size="12" fill="#000" text-anchor="end" letter-spacing="-0.606" >5.127</text>
<text x="1287.78" y="267.60" font-family="'Liberation Sans', sans-serif" font-size="12" fill="#000" text-anchor="end" letter-spacing="-0.617" >41.079</text>
<text x="1379.78" y="267.60" font-family="'Liberation Sans', sans-serif" font-size="12" fill="#000" text-anchor="end" letter-spacing="-0.617" >41.318</text>
<text x="1443.79" y="267.60" font-family="'Liberation Sans', sans-serif" font-size="12" fill="#000" text-anchor="end" letter-spacing="-0.606" >4.894</text>
<text x="1510.78" y="267.60" font-family="'Liberation Sans', sans-serif" font-size="12" fill="#000" text-anchor="end" letter-spacing="-0.617" >21.183</text>
<text x="1571.78" y="267.60" font-family="'Liberation Sans', sans-serif" font-size="12" fill="#000" text-anchor="end" letter-spacing="-0.617" >10.427</text>
<text x="1634.78" y="267.60" font-family="'Liberation Sans', sans-serif" font-size="12" fill="#000" text-anchor="end" letter-spacing="-0.617" >59.504</text>
<text x="1700.78" y="267.60" font-family="'Liberation Sans', sans-serif" font-size="12" fill="#000" text-anchor="end" letter-spacing="-0.617" >17.255</text>
<text x="1765.78" y="267.60" font-family="'Liberation Sans', sans-serif" font-size="12" fill="#000" text-anchor="end" letter-spacing="-0.617" >18.055</text>
<text x="53.35" y="292.20" font-family="'Liberation Sans', sans-serif" font-size="12" font-weight="bold" fill="#000" text-anchor="middle" letter-spacing="-0.291" >Delta E</text>
<text x="159.51" y="292.60" font-family="'Liberation Sans', sans-serif" font-size="12" font-weight="bold" fill="#000" text-anchor="end" letter-spacing="0.106" >1.2</text>
<text x="217.51" y="292.60" font-family="'Liberation Sans', sans-serif" font-size="12" font-weight="bold" fill="#000" text-anchor="end" letter-spacing="0.106" >0.4</text>
<text x="281.51" y="292.60" font-family="'Liberation Sans', sans-serif" font-size="12" font-weight="bold" fill="#000" text-anchor="end" letter-spacing="0.106" >0.2</text>
<text x="343.51" y="292.60" font-family="'Liberation Sans', sans-serif" font-size="12" font-weight="bold" fill="#000" text-anchor="end" letter-spacing="0.106" >0.3</text>
<text x="407.51" y="292.60" font-family="'Liberation Sans', sans-serif" font-size="12" font-weight="bold" fill="#000" text-anchor="end" letter-spacing="0.106" >0.2</text>
<text x="467.51" y="292.60" font-family="'Liberation Sans', sans-serif" font-size="12" font-weight="bold" fill="#000" text-anchor="end" letter-spacing="0.106" >0.1</text>
<text x="538.51" y="292.60" font-family="'Liberation Sans', sans-serif" font-size="12" font-weight="bold" fill="#000" text-anchor="end" letter-spacing="0.106" >1.3</text>
<text x="608.51" y="292.60" font-family="'Liberation Sans', sans-serif" font-size="12" font-weight="bold" fill="#000" text-anchor="end" letter-spacing="0.106" >0.7</text>
<text x="677.51" y="292.60" font-family="'Liberation Sans', sans-serif" font-size="12" font-weight="bold" fill="#000" text-anchor="end" letter-spacing="0.106" >0.7</text>
<text x="745.51" y="292.60" font-family="'Liberation Sans', sans-serif" font-size="12" font-weight="bold" fill="#000" text-anchor="end" letter-spacing="0.106" >0.7</text>
<text x="825.51" y="292.60" font-family="'Liberation Sans', sans-serif" font-size="12" font-weight="bold" fill="#000" text-anchor="end" letter-spacing="0.106" >1.2</text>
<text x="905.51" y="292.60" font-family="'Liberation Sans', sans-serif" font-size="12" font-weight="bold" fill="#000" text-anchor="end" letter-spacing="0.106" >0.4</text>
<text x="973.51" y="292.60" font-family="'Liberation Sans', sans-serif" font-size="12" font-weight="bold" fill="#000" text-anchor="end" letter-spacing="0.106" >1.0</text>
<text x="1053.51" y="292.60" font-family="'Liberation Sans', sans-serif" font-size="12" font-weight="bold" fill="#000" text-anchor="end" letter-spacing="0.106" >1.0</text>
<text x="1143.51" y="292.60" font-family="'Liberation Sans', sans-serif" font-size="12" font-weight="bold" fill="#000" text-anchor="end" letter-spacing="0.106" >2.1</text>
<text x="1208.51" y="292.60" font-family="'Liberation Sans', sans-serif" font-size="12" font-weight="bold" fill="#000" text-anchor="end" letter-spacing="0.106" >0.5</text>
<text x="1288.51" y="292.60" font-family="'Liberation Sans', sans-serif" font-size="12" font-weight="bold" fill="#000" text-anchor="end" letter-spacing="0.106" >0.7</text>
<text x="1380.51" y="292.60" font-family="'Liberation Sans', sans-serif" font-size="12" font-weight="bold" fill="#000" text-anchor="end" letter-spacing="0.106" >0.8</text>
<text x="1444.51" y="292.60" font-family="'Liberation Sans', sans-serif" font-size="12" font-weight="bold" fill="#000" text-anchor="end" letter-spacing="0.106" >1.3</text>
<text x="1511.51" y="292.60" font-family="'Liberation Sans', sans-serif" font-size="12" font-weight="bold" fill="#000" text-anchor="end" letter-spacing="0.106" >1.1</text>
<text x="1572.51" y="292.60" font-family="'Liberation Sans', sans-serif" font-size="12" font-weight="bold" fill="#000" text-anchor="end" letter-spacing="0.106" >1.2</text>
<text x="1635.51" y="292.60" font-family="'Liberation Sans', sans-serif" font-size="12" font-weight="bold" fill="#000" text-anchor="end" letter-spacing="0.106" >1.3</text>
<text x="1701.51" y="292.60" font-family="'Liberation Sans', sans-serif" font-size="12" font-weight="bold" fill="#000" text-anchor="end" letter-spacing="0.106" >0.6</text>
<text x="1766.51" y="292.60" font-family="'Liberation Sans', sans-serif" font-size="12" font-weight="bold" fill="#000" text-anchor="end" letter-spacing="0.106" >1.7</text>
<text x="53.36" y="317.20" font-family="'Liberation Sans', sans-serif" font-size="12" font-weight="bold" fill="#000" text-anchor="middle" letter-spacing="-0.279" >delta xy</text>
<text x="158.78" y="317.60" font-family="'Liberation Sans', sans-serif" font-size="12" fill="#000" text-anchor="end" letter-spacing="-0.617" >0.1906</text>
<text x="216.78" y="317.60" font-family="'Liberation Sans', sans-serif" font-size="12" fill="#000" text-anchor="end" letter-spacing="-0.617" >0.0005</text>
<text x="280.78" y="317.60" font-family="'Liberation Sans', sans-serif" font-size="12" fill="#000" text-anchor="end" letter-spacing="-0.617" >0.0005</text>
<text x="342.78" y="317.60" font-family="'Liberation Sans', sans-serif" font-size="12" fill="#000" text-anchor="end" letter-spacing="-0.617" >0.0002</text>
<text x="406.78" y="317.60" font-family="'Liberation Sans', sans-serif" font-size="12" fill="#000" text-anchor="end" letter-spacing="-0.617" >0.0002</text>
<text x="466.78" y="317.60" font-family="'Liberation Sans', sans-serif" font-size="12" fill="#000" text-anchor="end" letter-spacing="-0.617" >0.0003</text>
<text x="537.93" y="317.60" font-family="'Liberation Sans', sans-serif" font-size="12" fill="#000" text-anchor="end" letter-spacing="-0.469" >0.0118</text>
<text x="607.78" y="317.60" font-family="'Liberation Sans', sans-serif" font-size="12" fill="#000" text-anchor="end" letter-spacing="-0.617" >0.0017</text>
<text x="676.78" y="317.60" font-family="'Liberation Sans', sans-serif" font-size="12" fill="#000" text-anchor="end" letter-spacing="-0.617" >0.0042</text>
<text x="744.78" y="317.60" font-family="'Liberation Sans', sans-serif" font-size="12" fill="#000" text-anchor="end" letter-spacing="-0.617" >0.0074</text>
<text x="824.78" y="317.60" font-family="'Liberation Sans', sans-serif" font-size="12" fill="#000" text-anchor="end" letter-spacing="-0.617" >0.0055</text>
<text x="904.78" y="317.60" font-family="'Liberation Sans', sans-serif" font-size="12" fill="#000" text-anchor="end" letter-spacing="-0.617" >0.0020</text>
<text x="972.78" y="317.60" font-family="'Liberation Sans', sans-serif" font-size="12" fill="#000" text-anchor="end" letter-spacing="-0.617" >0.0052</text>
<text x="1052.78" y="317.60" font-family="'Liberation Sans', sans-serif" font-size="12" fill="#000" text-anchor="end" letter-spacing="-0.617" >0.0061</text>
<text x="1142.78" y="317.60" font-family="'Liberation Sans', sans-serif" font-size="12" fill="#000" text-anchor="end" letter-spacing="-0.617" >0.0122</text>
<text x="1207.78" y="317.60" font-family="'Liberation Sans', sans-serif" font-size="12" fill="#000" text-anchor="end" letter-spacing="-0.617" >0.0028</text>
<text x="1287.78" y="317.60" font-family="'Liberation Sans', sans-serif" font-size="12" fill="#000" text-anchor="end" letter-spacing="-0.617" >0.0070</text>
<text x="1379.78" y="317.60" font-family="'Liberation Sans', sans-serif" font-size="12" fill="#000" text-anchor="end" letter-spacing="-0.617" >0.0068</text>
<text x="1443.78" y="317.60" font-family="'Liberation Sans', sans-serif" font-size="12" fill="#000" text-anchor="end" letter-spacing="-0.617" >0.0067</text>
<text x="1510.78" y="317.60" font-family="'Liberation Sans', sans-serif" font-size="12" fill="#000" text-anchor="end" letter-spacing="-0.617" >0.0081</text>
<text x="1571.78" y="317.60" font-family="'Liberation Sans', sans-serif" font-size="12" fill="#000" text-anchor="end" letter-spacing="-0.617" >0.0073</text>
<text x="1634.78" y="317.60" font-family="'Liberation Sans', sans-serif" font-size="12" fill="#000" text-anchor="end" letter-spacing="-0.617" >0.0071</text>
<text x="1700.78" y="317.60" font-family="'Liberation Sans', sans-serif" font-size="12" fill="#000" text-anchor="end" letter-spacing="-0.617" >0.0044</text>
<text x="1765.78" y="317.60" font-family="'Liberation Sans', sans-serif" font-size="12" fill="#000" text-anchor="end" letter-spacing="-0.617" >0.0062</text>
<text x="53.36" y="342.20" font-family="'Liberation Sans', sans-serif" font-size="12" font-weight="bold" fill="#000" text-anchor="middle" letter-spacing="-0.276" >delta L</text>
<text x="159.62" y="342.60" font-family="'Liberation Sans', sans-serif" font-size="12" fill="#000" text-anchor="end" letter-spacing="0.219" >+inf %</text>
<text x="217.12" y="342.60" font-family="'Liberation Sans', sans-serif" font-size="12" fill="#000" text-anchor="end" letter-spacing="-0.282" >+0.9 %</text>
<text x="281.12" y="342.60" font-family="'Liberation Sans', sans-serif" font-size="12" fill="#000" text-anchor="end" letter-spacing="-0.282" >+0.4 %</text>
<text x="343.12" y="342.60" font-family="'Liberation Sans', sans-serif" font-size="12" fill="#000" text-anchor="end" letter-spacing="-0.282" >+1.2 %</text>
<text x="405.00" y="342.60" font-family="'Liberation Sans', sans-serif" font-size="12" fill="#000" text-anchor="end" >=</text>
<text x="465.00" y="342.60" font-family="'Liberation Sans', sans-serif" font-size="12" fill="#000" text-anchor="end" >=</text>
<text x="538.12" y="342.60" font-family="'Liberation Sans', sans-serif" font-size="12" fill="#000" text-anchor="end" letter-spacing="-0.282" >+1.8 %</text>
<text x="608.12" y="342.60" font-family="'Liberation Sans', sans-serif" font-size="12" fill="#000" text-anchor="end" letter-spacing="-0.282" >+2.9 %</text>
<text x="677.12" y="342.60" font-family="'Liberation Sans', sans-serif" font-size="12" fill="#000" text-anchor="end" letter-spacing="-0.282" >+1.6 %</text>
<text x="745.12" y="342.60" font-family="'Liberation Sans', sans-serif" font-size="12" fill="#000" text-anchor="end" letter-spacing="-0.282" >+0.4 %</text>
<text x="825.12" y="342.60" font-family="'Liberation Sans', sans-serif" font-size="12" fill="#000" text-anchor="end" letter-spacing="-0.282" >+1.5 %</text>
<text x="905.12" y="342.60" font-family="'Liberation Sans', sans-serif" font-size="12" fill="#000" text-anchor="end" letter-spacing="-0.280" >-0.4 %</text>
<text x="973.12" y="342.60" font-family="'Liberation Sans', sans-serif" font-size="12" fill="#000" text-anchor="end" letter-spacing="-0.282" >+2.5 %</text>
<text x="1053.12" y="342.60" font-family="'Liberation Sans', sans-serif" font-size="12" fill="#000" text-anchor="end" letter-spacing="-0.280" >-0.4 %</text>
<text x="1143.12" y="342.60" font-family="'Liberation Sans', sans-serif" font-size="12" fill="#000" text-anchor="end" letter-spacing="-0.282" >+1.9 %</text>
<text x="1208.12" y="342.60" font-family="'Liberation Sans', sans-serif" font-size="12" fill="#000" text-anchor="end" letter-spacing="-0.280" >-0.6 %</text>
<text x="1286.00" y="342.60" font-family="'Liberation Sans', sans-serif" font-size="12" fill="#000" text-anchor="end" >=</text>
<text x="1380.12" y="342.60" font-family="'Liberation Sans', sans-serif" font-size="12" fill="#000" text-anchor="end" letter-spacing="-0.282" >+1.8 %</text>
<text x="1442.00" y="342.60" font-family="'Liberation Sans', sans-serif" font-size="12" fill="#000" text-anchor="end" >=</text>
<text x="1511.12" y="342.60" font-family="'Liberation Sans', sans-serif" font-size="12" fill="#000" text-anchor="end" letter-spacing="-0.282" >+1.6 %</text>
<text x="1572.12" y="342.60" font-family="'Liberation Sans', sans-serif" font-size="12" fill="#000" text-anchor="end" letter-spacing="-0.282" >+0.6 %</text>
<text x="1635.12" y="342.60" font-family="'Liberation Sans', sans-serif" font-size="12" fill="#000" text-anchor="end" letter-spacing="-0.282" >+2.6 %</text>
<text x="1701.12" y="342.60" font-family="'Liberation Sans', sans-serif" font-size="12" fill="#000" text-anchor="end" letter-spacing="-0.282" >+1.6 %</text>
<text x="1766.12" y="342.60" font-family="'Liberation Sans', sans-serif" font-size="12" fill="#000" text-anchor="end" letter-spacing="-0.282" >+2.9 %</text>
<rect x="11" y="201" width="84" height="24" fill="#f0f0f0" />
<rect x="10" y="201" width="86" height="1" fill="#686868" />
<rect x="10" y="201" width="2" height="24" fill="#686868" />
<rect x="12" y="225" width="84" height="1" fill="#ffffff" />
<rect x="95" y="202" width="1" height="24" fill="#d4d4d4" />
<text x="54.00" y="217.60" font-family="'Liberation Sans', sans-serif" font-size="12" font-weight="bold" fill="#000" text-anchor="middle" >x</text>
<rect x="1768" y="178" width="3" height="178" fill="#9a9a9a" />
<rect x="1771" y="178" width="19" height="178" fill="#f0f0f0" />
<rect x="1779" y="195" width="2" height="140" rx="1" fill="#8b8b8b" shape-rendering="geometricPrecision"/>
<rect x="9" y="356" width="1781" height="19" fill="#f0f0f0" />
<path d="M15 363.5 L20 360 V367 Z" fill="#a0a0a0" shape-rendering="geometricPrecision"/>
<path d="M1765 363.5 L1760 360 V367 Z" fill="#a0a0a0" shape-rendering="geometricPrecision"/>
<rect x="2" y="377" width="1894" height="1" fill="#d9d3d9" />
<rect x="2" y="378" width="1894" height="2" fill="#ffffff" />
<rect x="2" y="380" width="1894" height="2" fill="#6e6e6e" />
<rect x="2" y="382" width="1894" height="2" fill="#8e8e8e" />
<rect x="2" y="384" width="1894" height="3" fill="#ffffff" />
<defs><linearGradient id="gob" x1="0" y1="0" x2="1" y2="1"><stop offset="0" stop-color="#3a78ff"/><stop offset="1" stop-color="#84ffff"/></linearGradient><linearGradient id="bing" x1="0" y1="0" x2="1" y2="1"><stop offset="0" stop-color="#d8eefc"/><stop offset="0.55" stop-color="#a6d2f2"/><stop offset="1" stop-color="#5f9fd8"/></linearGradient></defs>
<rect x="1808" y="162" width="1" height="216" fill="#8c8c8c" />
<rect x="1809" y="159" width="2" height="219" fill="#ffffff" />
<rect x="1811" y="159" width="85" height="3" fill="#ffffff" />
<rect x="1811" y="160" width="1" height="102" fill="#8c8c8c" />
<rect x="1812" y="162" width="3" height="100" fill="#ffffff" />
<rect x="1811" y="261" width="90" height="119" fill="#858585" />
<rect x="1815" y="162" width="81" height="100" fill="#ffffff" />
<rect x="1815" y="162" width="80" height="99" fill="#747474" />
<rect x="1816" y="163" width="78" height="97" fill="#9c9c9c" />
<rect x="1817" y="164" width="76" height="95" fill="#ebebeb" />
<path d="M1817 180 V167 Q1817 163 1821 163 H1889 Q1893 163 1893 167 V180 Z" fill="#e8eef8" shape-rendering="geometricPrecision"/>
<path d="M1817 167 Q1817 163 1821 163 H1817 Z" fill="#7c7c7c" shape-rendering="geometricPrecision"/>
<path d="M1893 167 Q1893 163 1889 163 H1893 Z" fill="#7c7c7c" shape-rendering="geometricPrecision"/>
<rect x="1817" y="180" width="76" height="1" fill="#b9bdc6" />
<text x="1822.50" y="175.60" font-family="'DejaVu Sans', sans-serif" font-size="11" font-weight="bold" fill="#4a4646" letter-spacing="0.307" >Display</text>
<rect x="1822" y="180" width="66" height="14" fill="#f0f0f0" />
<g shape-rendering="geometricPrecision">
<circle cx="1828.7" cy="187" r="5.6" fill="#f0f0f0"/>
<path d="M1824.6000000000001 191.1 A5.8 5.8 0 0 1 1832.8 182.9" stroke="#9a9a9a" stroke-width="1.3" fill="none"/>
<path d="M1825.3 190.4 A4.8 4.8 0 0 1 1832.1000000000001 183.6" stroke="#c8c8c8" stroke-width="0.9" fill="none"/>
<path d="M1832.8 182.9 A5.8 5.8 0 0 1 1824.6000000000001 191.1" stroke="#ffffff" stroke-width="1.3" fill="none"/>
<path d="M1832.1000000000001 183.6 A4.8 4.8 0 0 1 1825.3 190.4" stroke="#e3e3e3" stroke-width="0.9" fill="none"/>
</g>
<text x="1842.30" y="193.80" font-family="'DejaVu Sans', sans-serif" font-size="12.4" fill="#ffffff" letter-spacing="0.333" >Sensor</text>
<text x="1841.30" y="192.80" font-family="'DejaVu Sans', sans-serif" font-size="12.4" fill="#a0a0a0" letter-spacing="0.333" >Sensor</text>
<rect x="1822" y="196" width="66" height="14" fill="#f0f0f0" />
<g shape-rendering="geometricPrecision">
<circle cx="1828.7" cy="202.8" r="5.6" fill="#ffffff"/>
<path d="M1824.6000000000001 206.9 A5.8 5.8 0 0 1 1832.8 198.70000000000002" stroke="#6a6a6a" stroke-width="1.3" fill="none"/>
<path d="M1825.3 206.20000000000002 A4.8 4.8 0 0 1 1832.1000000000001 199.4" stroke="#404040" stroke-width="0.9" fill="none"/>
<path d="M1832.8 198.70000000000002 A5.8 5.8 0 0 1 1824.6000000000001 206.9" stroke="#ffffff" stroke-width="1.3" fill="none"/>
<path d="M1832.1000000000001 199.4 A4.8 4.8 0 0 1 1825.3 206.20000000000002" stroke="#e3e3e3" stroke-width="0.9" fill="none"/>
</g>
<text x="1841.20" y="208.50" font-family="'DejaVu Sans', sans-serif" font-size="12.4" fill="#000" letter-spacing="-0.511" >RGB</text>
<rect x="1822" y="212" width="66" height="14" fill="#f0f0f0" />
<g shape-rendering="geometricPrecision">
<circle cx="1828.7" cy="218.8" r="5.6" fill="#ffffff"/>
<path d="M1824.6000000000001 222.9 A5.8 5.8 0 0 1 1832.8 214.70000000000002" stroke="#6a6a6a" stroke-width="1.3" fill="none"/>
<path d="M1825.3 222.20000000000002 A4.8 4.8 0 0 1 1832.1000000000001 215.4" stroke="#404040" stroke-width="0.9" fill="none"/>
<path d="M1832.8 214.70000000000002 A5.8 5.8 0 0 1 1824.6000000000001 222.9" stroke="#ffffff" stroke-width="1.3" fill="none"/>
<path d="M1832.1000000000001 215.4 A4.8 4.8 0 0 1 1825.3 222.20000000000002" stroke="#e3e3e3" stroke-width="0.9" fill="none"/>
</g>
<text x="1841.20" y="224.60" font-family="'DejaVu Sans', sans-serif" font-size="12.4" fill="#000" letter-spacing="-0.355" >XYZ</text>
<rect x="1822" y="228" width="66" height="14" fill="#f0f0f0" />
<g shape-rendering="geometricPrecision">
<circle cx="1828.7" cy="234.7" r="5.6" fill="#ffffff"/>
<path d="M1824.6000000000001 238.79999999999998 A5.8 5.8 0 0 1 1832.8 230.6" stroke="#6a6a6a" stroke-width="1.3" fill="none"/>
<path d="M1825.3 238.1 A4.8 4.8 0 0 1 1832.1000000000001 231.29999999999998" stroke="#404040" stroke-width="0.9" fill="none"/>
<path d="M1832.8 230.6 A5.8 5.8 0 0 1 1824.6000000000001 238.79999999999998" stroke="#ffffff" stroke-width="1.3" fill="none"/>
<path d="M1832.1000000000001 231.29999999999998 A4.8 4.8 0 0 1 1825.3 238.1" stroke="#e3e3e3" stroke-width="0.9" fill="none"/>
</g>
<text x="1841.20" y="240.40" font-family="'DejaVu Sans', sans-serif" font-size="12.4" fill="#000" letter-spacing="-0.229" >xyz</text>
<rect x="1822" y="243" width="66" height="14" fill="#f0f0f0" />
<g shape-rendering="geometricPrecision">
<circle cx="1828.7" cy="250" r="5.6" fill="#ffffff"/>
<path d="M1824.6000000000001 254.1 A5.8 5.8 0 0 1 1832.8 245.9" stroke="#6a6a6a" stroke-width="1.3" fill="none"/>
<path d="M1825.3 253.4 A4.8 4.8 0 0 1 1832.1000000000001 246.6" stroke="#404040" stroke-width="0.9" fill="none"/>
<path d="M1832.8 245.9 A5.8 5.8 0 0 1 1824.6000000000001 254.1" stroke="#ffffff" stroke-width="1.3" fill="none"/>
<path d="M1832.1000000000001 246.6 A4.8 4.8 0 0 1 1825.3 253.4" stroke="#e3e3e3" stroke-width="0.9" fill="none"/>
<circle cx="1828.7" cy="250" r="2" fill="#000"/>
</g>
<text x="1841.20" y="255.80" font-family="'DejaVu Sans', sans-serif" font-size="12.4" fill="#000" letter-spacing="-0.250" >xyY</text>
<rect x="1813" y="264" width="82" height="30" fill="#a8a8a8" />
<rect x="1813" y="264" width="81" height="29" fill="#ffffff" />
<rect x="1814" y="265" width="80" height="28" fill="#d0d0d0" />
<rect x="1814" y="265" width="79" height="27" fill="#ebebeb" />
<g transform="translate(1818,266.8)" shape-rendering="geometricPrecision">
<path d="M1.9 0.6 H7.5 L10.4 2.6 V22.2 L9 23.4 L6.2 20.4 H1.9 Z" fill="#c9c9c9"/>
<path d="M1.9 4.6 H6 Q7.6 4.8 7.2 6.4 Q8.6 8 7 9.4 H4.6 V12.4 H6.4 Q8.2 13 7.4 14.8 Q8.4 17 6.4 17.2 H4.4 V20.4 H6.2 L9 23.4" fill="none" stroke="#2a2a2a" stroke-width="0.8"/>
<rect x="2" y="4.9" width="3.6" height="1.5" fill="#ffffff"/><rect x="2" y="12" width="2" height="1.4" fill="#ffffff"/>
<rect x="0.2" y="0.2" width="1.7" height="21.8" fill="#1a1a1a"/>
<path d="M22.2 2.6 L24.6 3.4 L27 6.4 H30.2 V26 H24 L22.2 14 Z" fill="#c9c9c9"/>
<path d="M24.6 3.4 L27 6.4 H30.2 M30.2 7.8 H26.4 Q24.2 8.6 25 10.8 Q24.4 12.8 26.6 13 H28.4 V16 H26" fill="none" stroke="#2a2a2a" stroke-width="0.8"/>
<rect x="28.6" y="13.4" width="1.6" height="1.6" fill="#ffffff"/><rect x="28.6" y="20.6" width="1.6" height="1.6" fill="#ffffff"/>
<rect x="30.2" y="4.3" width="1.7" height="21.7" fill="#1a1a1a"/>
<rect x="-0.4" y="1.2" width="0.8" height="1.2" fill="#1a1a1a"/><rect x="31.6" y="5.6" width="0.8" height="1.2" fill="#1a1a1a"/>
<rect x="-0.4" y="4.2" width="0.8" height="1.2" fill="#1a1a1a"/><rect x="31.6" y="8.6" width="0.8" height="1.2" fill="#1a1a1a"/>
<rect x="-0.4" y="7.2" width="0.8" height="1.2" fill="#1a1a1a"/><rect x="31.6" y="11.6" width="0.8" height="1.2" fill="#1a1a1a"/>
<rect x="-0.4" y="10.2" width="0.8" height="1.2" fill="#1a1a1a"/><rect x="31.6" y="14.6" width="0.8" height="1.2" fill="#1a1a1a"/>
<rect x="-0.4" y="13.2" width="0.8" height="1.2" fill="#1a1a1a"/><rect x="31.6" y="17.6" width="0.8" height="1.2" fill="#1a1a1a"/>
<rect x="-0.4" y="16.2" width="0.8" height="1.2" fill="#1a1a1a"/><rect x="31.6" y="20.6" width="0.8" height="1.2" fill="#1a1a1a"/>
<rect x="-0.4" y="19.2" width="0.8" height="1.2" fill="#1a1a1a"/><rect x="31.6" y="23.6" width="0.8" height="1.2" fill="#1a1a1a"/>
<path d="M6.3 0.2 H20.8 V3.1 L13.5 6.8 L10.7 7.8 L9.1 2.8 Z" fill="#ee0020"/>
<path d="M19 0.2 H20.8 V3.1 L19.6 3.8 Z" fill="#400010"/>
<path d="M10.7 7.8 L21.1 2.4 L22.3 14.1 L11.9 20.1 Z" fill="#0a5a3a"/>
<path d="M12.6 8.7 L19.2 4.6 L20.8 12.8 L13.2 17.9 Z" fill="#00d048"/>
<path d="M10.9 9 L11.8 19" stroke="#d040d0" stroke-width="0.6" stroke-dasharray="1 1.4"/>
<path d="M20.4 4 L21.6 13" stroke="#20e060" stroke-width="0.8" stroke-dasharray="0.8 1.6"/><path d="M11.8 10 L12.6 18.6" stroke="#104828" stroke-width="0.8" stroke-dasharray="0.8 1.6"/>
<path d="M11.9 22 L20.1 13.8 L29.6 19.1 L23.9 26 H13.2 Z" fill="#10108c"/>
<path d="M11.9 20.1 L20.1 13.8 L22.3 14.1 L12.4 22.4 Z" fill="#200830"/>
<path d="M14.1 21 L20.1 15.3 L25.2 19.8 L19.2 26 Z" fill="url(#gob)"/>
<path d="M25 24.8 L28 21.4" stroke="#e8e020" stroke-width="0.7"/><path d="M12.8 23.2 L15 25.6" stroke="#30b0e0" stroke-width="0.7" stroke-dasharray="0.8 1"/>
</g>
<text x="1863.00" y="284.60" font-family="'DejaVu Sans', sans-serif" font-size="12.4" fill="#000" letter-spacing="0.152" >Go</text>
<rect x="1813" y="294" width="82" height="30" fill="#a8a8a8" />
<rect x="1813" y="294" width="81" height="29" fill="#ffffff" />
<rect x="1814" y="295" width="80" height="28" fill="#d0d0d0" />
<rect x="1814" y="295" width="79" height="27" fill="#ebebeb" />
<g transform="translate(1819,296.5)" shape-rendering="geometricPrecision">
<path d="M0.5 4.5 Q13 -1 28 1 L24.5 23 Q14 26.5 5.5 24.5 Z" fill="url(#bing)" stroke="#9cc4e4" stroke-width="0.7"/>
<path d="M0.5 4.5 Q13 -1 28 1 Q15 2.5 3 7.5 Z" fill="#7fb8e6" opacity="0.9"/>
<ellipse cx="13.5" cy="21.3" rx="8.5" ry="3" fill="#b8dcf4" opacity="0.85"/>
<path d="M14 10.5 A5.5 5.5 0 0 1 23.3 9 L24.8 7.3 L25 12.6 L20 12.2 L21.6 10.6 A3.3 3.3 0 0 0 16 11.6 Z" fill="#2fa83a"/>
<path d="M24.5 15 A5.5 5.5 0 0 1 15 17 L13.4 18.8 L13.2 13.4 L18.3 13.8 L16.7 15.4 A3.3 3.3 0 0 0 22.4 14 Z" fill="#2fa83a"/>
</g>
<text x="1851.20" y="313.90" font-family="'DejaVu Sans', sans-serif" font-size="12.4" fill="#000" letter-spacing="0.093" >Delete</text>
<rect x="1813" y="324" width="82" height="30" fill="#a8a8a8" />
<rect x="1813" y="324" width="81" height="29" fill="#ffffff" />
<rect x="1814" y="325" width="80" height="28" fill="#d0d0d0" />
<rect x="1814" y="325" width="79" height="27" fill="#ebebeb" />
<g transform="translate(1817.5,329)">
<path d="M-0.5 22 V8 L1.5 8 L2 6 L3.5 6 L5 1 L7 1 L8.5 5 L10.5 5 L11.5 7.5 L14.5 7.5 L15.5 0.5 L17.5 -1.5 L19.5 0.5 L21.5 1.5 L24.5 6.5 L27.5 6.5 L28.5 5 L30.5 5 L31 7 L33.5 7 V22 Z" fill="#ffee00" shape-rendering="geometricPrecision"/>
<rect x="0" y="9" width="2" height="13" fill="#0000c0"/>
<rect x="2" y="7" width="2" height="15" fill="#ff00ff"/>
<rect x="4" y="2" width="4" height="20" fill="#0000ff"/>
<rect x="8" y="6" width="3" height="16" fill="#00ffff"/>
<rect x="11" y="8" width="4" height="14" fill="#00e000"/>
<rect x="15" y="1" width="6" height="21" fill="#ffff00"/>
<rect x="21" y="3" width="4" height="19" fill="#8a0000"/>
<rect x="25" y="8" width="8" height="14" fill="#ff0000"/>
<path d="M4 4 L6 1.5 L8 4 Z" fill="#0000ff"/><path d="M15 3 L18 -0.5 L21 3 Z" fill="#ffff00"/><path d="M21 4 L21 2 L25 7 V9 Z" fill="#8a0000"/>
</g>
<text x="1858.20" y="343.40" font-family="'DejaVu Sans', sans-serif" font-size="12.4" fill="#000" letter-spacing="0.122" >Refs</text>
<rect x="1818" y="358" width="56" height="18" fill="#ebebeb" />
<rect x="1819" y="360" width="13" height="13" fill="#ffffff" />
<rect x="1819" y="360" width="12" height="12" fill="#6a6a6a" />
<rect x="1820" y="361" width="11" height="11" fill="#e3e3e3" />
<rect x="1820" y="361" width="10" height="10" fill="#a0a0a0" />
<rect x="1821" y="362" width="10" height="10" fill="#fff" />
<text x="1837.00" y="370.40" font-family="'DejaVu Sans', sans-serif" font-size="12.4" fill="#000" letter-spacing="0.197" >Edit</text>
<rect x="1909" y="109" width="2" height="869" rx="1" fill="#848484" shape-rendering="geometricPrecision"/>
<rect x="383" y="384" width="8" height="633" fill="#ffffff" />
<rect x="385" y="382" width="1" height="635" fill="#6e6e6e" />
<rect x="386" y="384" width="1" height="633" fill="#8e8e8e" />
<rect x="5" y="387" width="379" height="630" fill="#ffffff" />
<rect x="5" y="387" width="378" height="629" fill="#747474" />
<rect x="6" y="388" width="376" height="627" fill="#9c9c9c" />
<rect x="7" y="389" width="374" height="625" fill="#ebebeb" />
<path d="M7 405 V392 Q7 388 11 388 H377 Q381 388 381 392 V405 Z" fill="#e8eef8" shape-rendering="geometricPrecision"/>
<path d="M7 392 Q7 388 11 388 H7 Z" fill="#7c7c7c" shape-rendering="geometricPrecision"/>
<path d="M381 392 Q381 388 377 388 H381 Z" fill="#7c7c7c" shape-rendering="geometricPrecision"/>
<rect x="7" y="405" width="374" height="1" fill="#b9bdc6" />
<text x="11.80" y="400.60" font-family="'DejaVu Sans', sans-serif" font-size="11" font-weight="bold" fill="#4a4646" letter-spacing="0.401" >Selected color</text>
<rect x="17" y="409" width="111" height="14" fill="#efefef" />
<text x="18.00" y="421.00" font-family="'DejaVu Sans', sans-serif" font-size="12.4" fill="#000" letter-spacing="-0.087" >RGB Levels</text>
<rect x="14" y="433" width="200" height="86" fill="#f0f0f0" />
<path d="M14 477.5 H214" stroke="#808080" stroke-width="1" stroke-dasharray="3 3" fill="none"/>
<defs><linearGradient id="cyr" x1="0" y1="0" x2="1" y2="0"><stop offset="0" stop-color="#fff0f0"/><stop offset="0.5" stop-color="#ff0000"/><stop offset="1" stop-color="#200000"/></linearGradient></defs>
<rect x="16" y="477" width="46" height="37" fill="url(#cyr)"/>
<ellipse cx="39.0" cy="476.5" rx="23.0" ry="5" fill="#a00000" stroke="#000" stroke-width="0.8" shape-rendering="geometricPrecision"/>
<defs><linearGradient id="cyg" x1="0" y1="0" x2="1" y2="0"><stop offset="0" stop-color="#f0fff0"/><stop offset="0.5" stop-color="#00ff00"/><stop offset="1" stop-color="#002000"/></linearGradient></defs>
<rect x="67" y="477" width="46" height="37" fill="url(#cyg)"/>
<ellipse cx="90.0" cy="476.5" rx="23.0" ry="5" fill="#00a000" stroke="#000" stroke-width="0.8" shape-rendering="geometricPrecision"/>
<defs><linearGradient id="cyb" x1="0" y1="0" x2="1" y2="0"><stop offset="0" stop-color="#f0f0ff"/><stop offset="0.5" stop-color="#0000ff"/><stop offset="1" stop-color="#000020"/></linearGradient></defs>
<rect x="118" y="477" width="46" height="37" fill="url(#cyb)"/>
<ellipse cx="141.0" cy="476.5" rx="23.0" ry="5" fill="#0000a0" stroke="#000" stroke-width="0.8" shape-rendering="geometricPrecision"/>
<path d="M170 514 Q174 508.5 192 508 Q210 508.5 214 512 V514 Z" fill="#b8860b" stroke="#5a4000" stroke-width="0.6" shape-rendering="geometricPrecision"/>
<rect x="14" y="514" width="200" height="5" fill="#000" />
<text x="39.38" y="467.70" font-family="'Liberation Serif', serif" font-size="11.3" fill="#000" text-anchor="middle" letter-spacing="0.360" stroke="#000" stroke-width="0.35">100.2%</text>
<text x="90.18" y="469.00" font-family="'Liberation Serif', serif" font-size="11.3" fill="#000" text-anchor="middle" letter-spacing="0.360" stroke="#000" stroke-width="0.35">100.0%</text>
<text x="140.88" y="469.00" font-family="'Liberation Serif', serif" font-size="11.3" fill="#000" text-anchor="middle" letter-spacing="0.562" stroke="#000" stroke-width="0.35">99.8%</text>
<text x="192.03" y="504.70" font-family="'Liberation Serif', serif" font-size="11.3" fill="#000" text-anchor="middle" letter-spacing="0.666" stroke="#000" stroke-width="0.35">dE 0.1</text>
<rect x="16" y="533" width="192" height="74" fill="#fcfcfc" />
<text x="64.12" y="546.00" font-family="'Liberation Sans', sans-serif" font-size="14" font-weight="bold" fill="#1b3150" text-anchor="middle" letter-spacing="0.240" >235,235,235</text>
<text x="160.12" y="546.00" font-family="'Liberation Sans', sans-serif" font-size="14" font-weight="bold" fill="#1b3150" text-anchor="middle" letter-spacing="0.240" >235,235,235</text>
<text x="63.65" y="561.80" font-family="'Liberation Sans', sans-serif" font-size="14" font-weight="bold" fill="#1b3150" text-anchor="middle" letter-spacing="0.099" >Measure</text>
<text x="159.93" y="561.80" font-family="'Liberation Sans', sans-serif" font-size="14" font-weight="bold" fill="#1b3150" text-anchor="middle" letter-spacing="-0.134" >Reference</text>
<rect x="18" y="622" width="42" height="14" fill="#f0f0f0" />
<text x="18.40" y="633.60" font-family="'DejaVu Sans', sans-serif" font-size="12.4" fill="#000" letter-spacing="0.273" >Target</text>
<rect x="50" y="638" width="116" height="89" fill="#000" />
<defs><clipPath id="cwclip"><rect x="0" y="0" width="400" height="400"/></clipPath><g id="conicw" clip-path="url(#cwclip)" shape-rendering="crispEdges"><path d="M200 200L199.0 -100.0L206.3 -99.9Z" fill="#4afe00"/><path d="M200 200L204.2 -100.0L211.5 -99.8Z" fill="#4efd00"/><path d="M200 200L209.4 -99.9L216.7 -99.5Z" fill="#52fc00"/><path d="M200 200L214.7 -99.6L222.0 -99.2Z" fill="#56fa00"/><path d="M200 200L219.9 -99.3L227.2 -98.8Z" fill="#5af900"/><path d="M200 200L225.1 -98.9L232.4 -98.2Z" fill="#5ef800"/><path d="M200 200L230.3 -98.5L237.6 -97.6Z" fill="#62f600"/><path d="M200 200L235.5 -97.9L242.8 -96.9Z" fill="#66f500"/><path d="M200 200L240.7 -97.2L248.0 -96.1Z" fill="#6bf400"/><path d="M200 200L245.9 -96.5L253.1 -95.3Z" fill="#6ff300"/><path d="M200 200L251.1 -95.6L258.3 -94.3Z" fill="#73f100"/><path d="M200 200L256.2 -94.7L263.4 -93.2Z" fill="#77f000"/><path d="M200 200L261.3 -93.7L268.5 -92.1Z" fill="#7bef00"/><path d="M200 200L266.5 -92.5L273.6 -90.8Z" fill="#7fed00"/><path d="M200 200L271.6 -91.3L278.7 -89.5Z" fill="#83ec00"/><path d="M200 200L276.6 -90.0L283.7 -88.1Z" fill="#87eb00"/><path d="M200 200L281.7 -88.7L288.7 -86.6Z" fill="#8be900"/><path d="M200 200L286.7 -87.2L293.7 -85.0Z" fill="#8fe800"/><path d="M200 200L291.7 -85.6L298.7 -83.3Z" fill="#93e700"/><path d="M200 200L296.7 -84.0L303.6 -81.5Z" fill="#97e500"/><path d="M200 200L301.6 -82.3L308.5 -79.7Z" fill="#9be400"/><path d="M200 200L306.5 -80.4L313.4 -77.8Z" fill="#9fe300"/><path d="M200 200L311.4 -78.5L318.2 -75.7Z" fill="#a4e200"/><path d="M200 200L316.3 -76.6L323.0 -73.6Z" fill="#a8e000"/><path d="M200 200L321.1 -74.5L327.7 -71.4Z" fill="#acdf00"/><path d="M200 200L325.8 -72.3L332.5 -69.2Z" fill="#b0de00"/><path d="M200 200L330.6 -70.1L337.1 -66.8Z" fill="#b4dc00"/><path d="M200 200L335.3 -67.8L341.8 -64.4Z" fill="#b8db00"/><path d="M200 200L339.9 -65.4L346.4 -61.9Z" fill="#bcda00"/><path d="M200 200L344.5 -62.9L350.9 -59.3Z" fill="#c0d800"/><path d="M200 200L349.1 -60.3L355.4 -56.6Z" fill="#c4d700"/><path d="M200 200L353.6 -57.7L359.9 -53.9Z" fill="#c8d600"/><path d="M200 200L358.1 -55.0L364.3 -51.0Z" fill="#ccd400"/><path d="M200 200L362.5 -52.2L368.6 -48.1Z" fill="#d0d300"/><path d="M200 200L366.9 -49.3L372.9 -45.1Z" fill="#d4d200"/><path d="M200 200L371.2 -46.3L377.2 -42.1Z" fill="#d8d000"/><path d="M200 200L375.5 -43.3L381.4 -39.0Z" fill="#dccf00"/><path d="M200 200L379.7 -40.2L385.5 -35.8Z" fill="#e0ce00"/><path d="M200 200L383.9 -37.0L389.6 -32.5Z" fill="#e5cd00"/><path d="M200 200L388.0 -33.8L393.6 -29.1Z" fill="#e9cb00"/><path d="M200 200L392.0 -30.5L397.6 -25.7Z" fill="#edca00"/><path d="M200 200L396.0 -27.1L401.5 -22.2Z" fill="#f1c900"/><path d="M200 200L400.0 -23.6L405.4 -18.7Z" fill="#f5c700"/><path d="M200 200L403.8 -20.1L409.1 -15.1Z" fill="#f9c600"/><path d="M200 200L407.6 -16.5L412.9 -11.4Z" fill="#fdc500"/><path d="M200 200L411.4 -12.9L416.5 -7.6Z" fill="#ffc200"/><path d="M200 200L415.1 -9.1L420.1 -3.8Z" fill="#ffbd00"/><path d="M200 200L418.7 -5.4L423.6 0.0Z" fill="#ffb900"/><path d="M200 200L422.2 -1.5L427.1 4.0Z" fill="#ffb500"/><path d="M200 200L425.7 2.4L430.5 8.0Z" fill="#ffb000"/><path d="M200 200L429.1 6.4L433.8 12.0Z" fill="#ffac00"/><path d="M200 200L432.5 10.4L437.0 16.1Z" fill="#ffa800"/><path d="M200 200L435.8 14.5L440.2 20.3Z" fill="#ffa300"/><path d="M200 200L439.0 18.6L443.3 24.5Z" fill="#ff9f00"/><path d="M200 200L442.1 22.8L446.3 28.8Z" fill="#ff9b00"/><path d="M200 200L445.1 27.1L449.3 33.1Z" fill="#ff9600"/><path d="M200 200L448.1 31.4L452.2 37.5Z" fill="#ff9200"/><path d="M200 200L451.0 35.7L455.0 41.9Z" fill="#ff8e00"/><path d="M200 200L453.9 40.1L457.7 46.4Z" fill="#ff8900"/><path d="M200 200L456.6 44.6L460.3 50.9Z" fill="#ff8500"/><path d="M200 200L459.3 49.1L462.9 55.5Z" fill="#ff8000"/><path d="M200 200L461.9 53.6L465.4 60.1Z" fill="#ff7c00"/><path d="M200 200L464.4 58.2L467.8 64.7Z" fill="#ff7800"/><path d="M200 200L466.8 62.9L470.1 69.4Z" fill="#ff7300"/><path d="M200 200L469.2 67.5L472.3 74.2Z" fill="#ff6f00"/><path d="M200 200L471.4 72.3L474.5 78.9Z" fill="#ff6b00"/><path d="M200 200L473.6 77.0L476.6 83.7Z" fill="#ff6600"/><path d="M200 200L475.7 81.8L478.5 88.6Z" fill="#ff6200"/><path d="M200 200L477.8 86.6L480.4 93.5Z" fill="#ff5e00"/><path d="M200 200L479.7 91.5L482.3 98.4Z" fill="#ff5900"/><path d="M200 200L481.5 96.4L484.0 103.3Z" fill="#ff5500"/><path d="M200 200L483.3 101.3L485.6 108.3Z" fill="#ff5100"/><path d="M200 200L485.0 106.3L487.2 113.3Z" fill="#ff4c00"/><path d="M200 200L486.6 111.3L488.7 118.3Z" fill="#ff4800"/><path d="M200 200L488.1 116.3L490.0 123.4Z" fill="#ff4400"/><path d="M200 200L489.5 121.3L491.3 128.4Z" fill="#ff3f00"/><path d="M200 200L490.8 126.4L492.5 133.5Z" fill="#ff3b00"/><path d="M200 200L492.1 131.5L493.7 138.7Z" fill="#ff3600"/><path d="M200 200L493.2 136.6L494.7 143.8Z" fill="#ff3200"/><path d="M200 200L494.3 141.7L495.6 148.9Z" fill="#ff2e00"/><path d="M200 200L495.3 146.9L496.5 154.1Z" fill="#ff2900"/><path d="M200 200L496.1 152.0L497.2 159.3Z" fill="#ff2500"/><path d="M200 200L496.9 157.2L497.9 164.5Z" fill="#ff2100"/><path d="M200 200L497.6 162.4L498.5 169.7Z" fill="#ff1c00"/><path d="M200 200L498.2 167.6L498.9 174.9Z" fill="#ff1800"/><path d="M200 200L498.8 172.8L499.3 180.1Z" fill="#ff1400"/><path d="M200 200L499.2 178.0L499.6 185.3Z" fill="#ff0f00"/><path d="M200 200L499.5 183.3L499.9 190.6Z" fill="#ff0b00"/><path d="M200 200L499.8 188.5L500.0 195.8Z" fill="#ff0700"/><path d="M200 200L499.9 193.7L500.0 201.0Z" fill="#ff0200"/><path d="M200 200L500.0 199.0L499.9 206.3Z" fill="#ff0002"/><path d="M200 200L500.0 204.2L499.8 211.5Z" fill="#ff0005"/><path d="M200 200L499.9 209.4L499.5 216.7Z" fill="#ff0008"/><path d="M200 200L499.6 214.7L499.2 222.0Z" fill="#ff000b"/><path d="M200 200L499.3 219.9L498.8 227.2Z" fill="#ff000e"/><path d="M200 200L498.9 225.1L498.2 232.4Z" fill="#ff0012"/><path d="M200 200L498.5 230.3L497.6 237.6Z" fill="#ff0015"/><path d="M200 200L497.9 235.5L496.9 242.8Z" fill="#ff0018"/><path d="M200 200L497.2 240.7L496.1 248.0Z" fill="#ff001b"/><path d="M200 200L496.5 245.9L495.3 253.1Z" fill="#ff001e"/><path d="M200 200L495.6 251.1L494.3 258.3Z" fill="#ff0022"/><path d="M200 200L494.7 256.2L493.2 263.4Z" fill="#ff0025"/><path d="M200 200L493.7 261.3L492.1 268.5Z" fill="#ff0028"/><path d="M200 200L492.5 266.5L490.8 273.6Z" fill="#ff002b"/><path d="M200 200L491.3 271.6L489.5 278.7Z" fill="#ff002e"/><path d="M200 200L490.0 276.6L488.1 283.7Z" fill="#ff0032"/><path d="M200 200L488.7 281.7L486.6 288.7Z" fill="#ff0035"/><path d="M200 200L487.2 286.7L485.0 293.7Z" fill="#ff0038"/><path d="M200 200L485.6 291.7L483.3 298.7Z" fill="#ff003b"/><path d="M200 200L484.0 296.7L481.5 303.6Z" fill="#ff003e"/><path d="M200 200L482.3 301.6L479.7 308.5Z" fill="#ff0042"/><path d="M200 200L480.4 306.5L477.8 313.4Z" fill="#ff0045"/><path d="M200 200L478.5 311.4L475.7 318.2Z" fill="#ff0048"/><path d="M200 200L476.6 316.3L473.6 323.0Z" fill="#ff004b"/><path d="M200 200L474.5 321.1L471.4 327.7Z" fill="#ff004e"/><path d="M200 200L472.3 325.8L469.2 332.5Z" fill="#ff0052"/><path d="M200 200L470.1 330.6L466.8 337.1Z" fill="#ff0055"/><path d="M200 200L467.8 335.3L464.4 341.8Z" fill="#ff0058"/><path d="M200 200L465.4 339.9L461.9 346.4Z" fill="#ff005b"/><path d="M200 200L462.9 344.5L459.3 350.9Z" fill="#ff005e"/><path d="M200 200L460.3 349.1L456.6 355.4Z" fill="#ff0062"/><path d="M200 200L457.7 353.6L453.9 359.9Z" fill="#ff0065"/><path d="M200 200L455.0 358.1L451.0 364.3Z" fill="#ff0068"/><path d="M200 200L452.2 362.5L448.1 368.6Z" fill="#ff006b"/><path d="M200 200L449.3 366.9L445.1 372.9Z" fill="#ff006e"/><path d="M200 200L446.3 371.2L442.1 377.2Z" fill="#ff0072"/><path d="M200 200L443.3 375.5L439.0 381.4Z" fill="#ff0075"/><path d="M200 200L440.2 379.7L435.8 385.5Z" fill="#ff0078"/><path d="M200 200L437.0 383.9L432.5 389.6Z" fill="#ff007b"/><path d="M200 200L433.8 388.0L429.1 393.6Z" fill="#ff007e"/><path d="M200 200L430.5 392.0L425.7 397.6Z" fill="#ff0082"/><path d="M200 200L427.1 396.0L422.2 401.5Z" fill="#ff0085"/><path d="M200 200L423.6 400.0L418.7 405.4Z" fill="#ff0088"/><path d="M200 200L420.1 403.8L415.1 409.1Z" fill="#ff008b"/><path d="M200 200L416.5 407.6L411.4 412.9Z" fill="#ff008e"/><path d="M200 200L412.9 411.4L407.6 416.5Z" fill="#fe0091"/><path d="M200 200L409.1 415.1L403.8 420.1Z" fill="#fb0092"/><path d="M200 200L405.4 418.7L400.0 423.6Z" fill="#f80093"/><path d="M200 200L401.5 422.2L396.0 427.1Z" fill="#f60094"/><path d="M200 200L397.6 425.7L392.0 430.5Z" fill="#f30096"/><path d="M200 200L393.6 429.1L388.0 433.8Z" fill="#f00097"/><path d="M200 200L389.6 432.5L383.9 437.0Z" fill="#ee0098"/><path d="M200 200L385.5 435.8L379.7 440.2Z" fill="#eb0099"/><path d="M200 200L381.4 439.0L375.5 443.3Z" fill="#e9009b"/><path d="M200 200L377.2 442.1L371.2 446.3Z" fill="#e6009c"/><path d="M200 200L372.9 445.1L366.9 449.3Z" fill="#e3009d"/><path d="M200 200L368.6 448.1L362.5 452.2Z" fill="#e1009e"/><path d="M200 200L364.3 451.0L358.1 455.0Z" fill="#de00a0"/><path d="M200 200L359.9 453.9L353.6 457.7Z" fill="#db00a1"/><path d="M200 200L355.4 456.6L349.1 460.3Z" fill="#d900a2"/><path d="M200 200L350.9 459.3L344.5 462.9Z" fill="#d600a3"/><path d="M200 200L346.4 461.9L339.9 465.4Z" fill="#d300a5"/><path d="M200 200L341.8 464.4L335.3 467.8Z" fill="#d100a6"/><path d="M200 200L337.1 466.8L330.6 470.1Z" fill="#ce00a7"/><path d="M200 200L332.5 469.2L325.8 472.3Z" fill="#cb00a8"/><path d="M200 200L327.7 471.4L321.1 474.5Z" fill="#c900aa"/><path d="M200 200L323.0 473.6L316.3 476.6Z" fill="#c600ab"/><path d="M200 200L318.2 475.7L311.4 478.5Z" fill="#c400ac"/><path d="M200 200L313.4 477.8L306.5 480.4Z" fill="#c100ad"/><path d="M200 200L308.5 479.7L301.6 482.3Z" fill="#be00ae"/><path d="M200 200L303.6 481.5L296.7 484.0Z" fill="#bc00b0"/><path d="M200 200L298.7 483.3L291.7 485.6Z" fill="#b900b1"/><path d="M200 200L293.7 485.0L286.7 487.2Z" fill="#b600b2"/><path d="M200 200L288.7 486.6L281.7 488.7Z" fill="#b400b3"/><path d="M200 200L283.7 488.1L276.6 490.0Z" fill="#b100b5"/><path d="M200 200L278.7 489.5L271.6 491.3Z" fill="#ae00b6"/><path d="M200 200L273.6 490.8L266.5 492.5Z" fill="#ac00b7"/><path d="M200 200L268.5 492.1L261.3 493.7Z" fill="#a900b8"/><path d="M200 200L263.4 493.2L256.2 494.7Z" fill="#a600ba"/><path d="M200 200L258.3 494.3L251.1 495.6Z" fill="#a400bb"/><path d="M200 200L253.1 495.3L245.9 496.5Z" fill="#a100bc"/><path d="M200 200L248.0 496.1L240.7 497.2Z" fill="#9e00bd"/><path d="M200 200L242.8 496.9L235.5 497.9Z" fill="#9c00bf"/><path d="M200 200L237.6 497.6L230.3 498.5Z" fill="#9900c0"/><path d="M200 200L232.4 498.2L225.1 498.9Z" fill="#9700c1"/><path d="M200 200L227.2 498.8L219.9 499.3Z" fill="#9400c2"/><path d="M200 200L222.0 499.2L214.7 499.6Z" fill="#9100c4"/><path d="M200 200L216.7 499.5L209.4 499.9Z" fill="#8f00c5"/><path d="M200 200L211.5 499.8L204.2 500.0Z" fill="#8c00c6"/><path d="M200 200L206.3 499.9L199.0 500.0Z" fill="#8900c7"/><path d="M200 200L201.0 500.0L193.7 499.9Z" fill="#8600c9"/><path d="M200 200L195.8 500.0L188.5 499.8Z" fill="#8300ca"/><path d="M200 200L190.6 499.9L183.3 499.5Z" fill="#8000cb"/><path d="M200 200L185.3 499.6L178.0 499.2Z" fill="#7d00cc"/><path d="M200 200L180.1 499.3L172.8 498.8Z" fill="#7a00ce"/><path d="M200 200L174.9 498.9L167.6 498.2Z" fill="#7700cf"/><path d="M200 200L169.7 498.5L162.4 497.6Z" fill="#7400d0"/><path d="M200 200L164.5 497.9L157.2 496.9Z" fill="#7100d1"/><path d="M200 200L159.3 497.2L152.0 496.1Z" fill="#6e00d2"/><path d="M200 200L154.1 496.5L146.9 495.3Z" fill="#6b00d4"/><path d="M200 200L148.9 495.6L141.7 494.3Z" fill="#6800d5"/><path d="M200 200L143.8 494.7L136.6 493.2Z" fill="#6500d6"/><path d="M200 200L138.7 493.7L131.5 492.1Z" fill="#6200d7"/><path d="M200 200L133.5 492.5L126.4 490.8Z" fill="#5f00d8"/><path d="M200 200L128.4 491.3L121.3 489.5Z" fill="#5c00da"/><path d="M200 200L123.4 490.0L116.3 488.1Z" fill="#5900db"/><path d="M200 200L118.3 488.7L111.3 486.6Z" fill="#5600dc"/><path d="M200 200L113.3 487.2L106.3 485.0Z" fill="#5300dd"/><path d="M200 200L108.3 485.6L101.3 483.3Z" fill="#5000df"/><path d="M200 200L103.3 484.0L96.4 481.5Z" fill="#4d00e0"/><path d="M200 200L98.4 482.3L91.5 479.7Z" fill="#4a00e1"/><path d="M200 200L93.5 480.4L86.6 477.8Z" fill="#4700e2"/><path d="M200 200L88.6 478.5L81.8 475.7Z" fill="#4400e4"/><path d="M200 200L83.7 476.6L77.0 473.6Z" fill="#4100e5"/><path d="M200 200L78.9 474.5L72.3 471.4Z" fill="#3e00e6"/><path d="M200 200L74.2 472.3L67.5 469.2Z" fill="#3b00e7"/><path d="M200 200L69.4 470.1L62.9 466.8Z" fill="#3800e8"/><path d="M200 200L64.7 467.8L58.2 464.4Z" fill="#3500ea"/><path d="M200 200L60.1 465.4L53.6 461.9Z" fill="#3200eb"/><path d="M200 200L55.5 462.9L49.1 459.3Z" fill="#2f00ec"/><path d="M200 200L50.9 460.3L44.6 456.6Z" fill="#2c00ed"/><path d="M200 200L46.4 457.7L40.1 453.9Z" fill="#2900ee"/><path d="M200 200L41.9 455.0L35.7 451.0Z" fill="#2600f0"/><path d="M200 200L37.5 452.2L31.4 448.1Z" fill="#2300f1"/><path d="M200 200L33.1 449.3L27.1 445.1Z" fill="#2000f2"/><path d="M200 200L28.8 446.3L22.8 442.1Z" fill="#1d00f3"/><path d="M200 200L24.5 443.3L18.6 439.0Z" fill="#1a00f5"/><path d="M200 200L20.3 440.2L14.5 435.8Z" fill="#1700f6"/><path d="M200 200L16.1 437.0L10.4 432.5Z" fill="#1400f7"/><path d="M200 200L12.0 433.8L6.4 429.1Z" fill="#1100f8"/><path d="M200 200L8.0 430.5L2.4 425.7Z" fill="#0e00fa"/><path d="M200 200L4.0 427.1L-1.5 422.2Z" fill="#0b00fb"/><path d="M200 200L0.0 423.6L-5.4 418.7Z" fill="#0800fc"/><path d="M200 200L-3.8 420.1L-9.1 415.1Z" fill="#0500fd"/><path d="M200 200L-7.6 416.5L-12.9 411.4Z" fill="#0200fe"/><path d="M200 200L-11.4 412.9L-16.5 407.6Z" fill="#0001fe"/><path d="M200 200L-15.1 409.1L-20.1 403.8Z" fill="#0004fc"/><path d="M200 200L-18.7 405.4L-23.6 400.0Z" fill="#0007fb"/><path d="M200 200L-22.2 401.5L-27.1 396.0Z" fill="#000af9"/><path d="M200 200L-25.7 397.6L-30.5 392.0Z" fill="#000df8"/><path d="M200 200L-29.1 393.6L-33.8 388.0Z" fill="#0010f6"/><path d="M200 200L-32.5 389.6L-37.0 383.9Z" fill="#0013f4"/><path d="M200 200L-35.8 385.5L-40.2 379.7Z" fill="#0016f2"/><path d="M200 200L-39.0 381.4L-43.3 375.5Z" fill="#0019f1"/><path d="M200 200L-42.1 377.2L-46.3 371.2Z" fill="#001cef"/><path d="M200 200L-45.1 372.9L-49.3 366.9Z" fill="#001fee"/><path d="M200 200L-48.1 368.6L-52.2 362.5Z" fill="#0022ec"/><path d="M200 200L-51.0 364.3L-55.0 358.1Z" fill="#0025ea"/><path d="M200 200L-53.9 359.9L-57.7 353.6Z" fill="#0028e8"/><path d="M200 200L-56.6 355.4L-60.3 349.1Z" fill="#002be7"/><path d="M200 200L-59.3 350.9L-62.9 344.5Z" fill="#002de5"/><path d="M200 200L-61.9 346.4L-65.4 339.9Z" fill="#0030e4"/><path d="M200 200L-64.4 341.8L-67.8 335.3Z" fill="#0033e2"/><path d="M200 200L-66.8 337.1L-70.1 330.6Z" fill="#0036e0"/><path d="M200 200L-69.2 332.5L-72.3 325.8Z" fill="#0039de"/><path d="M200 200L-71.4 327.7L-74.5 321.1Z" fill="#003cdd"/><path d="M200 200L-73.6 323.0L-76.6 316.3Z" fill="#003fdb"/><path d="M200 200L-75.7 318.2L-78.5 311.4Z" fill="#0042da"/><path d="M200 200L-77.8 313.4L-80.4 306.5Z" fill="#0045d8"/><path d="M200 200L-79.7 308.5L-82.3 301.6Z" fill="#0048d6"/><path d="M200 200L-81.5 303.6L-84.0 296.7Z" fill="#004bd4"/><path d="M200 200L-83.3 298.7L-85.6 291.7Z" fill="#004ed3"/><path d="M200 200L-85.0 293.7L-87.2 286.7Z" fill="#0051d1"/><path d="M200 200L-86.6 288.7L-88.7 281.7Z" fill="#0054d0"/><path d="M200 200L-88.1 283.7L-90.0 276.6Z" fill="#0057ce"/><path d="M200 200L-89.5 278.7L-91.3 271.6Z" fill="#0059cc"/><path d="M200 200L-90.8 273.6L-92.5 266.5Z" fill="#005cca"/><path d="M200 200L-92.1 268.5L-93.7 261.3Z" fill="#005fc9"/><path d="M200 200L-93.2 263.4L-94.7 256.2Z" fill="#0062c7"/><path d="M200 200L-94.3 258.3L-95.6 251.1Z" fill="#0065c6"/><path d="M200 200L-95.3 253.1L-96.5 245.9Z" fill="#0068c4"/><path d="M200 200L-96.1 248.0L-97.2 240.7Z" fill="#006bc2"/><path d="M200 200L-96.9 242.8L-97.9 235.5Z" fill="#006ec0"/><path d="M200 200L-97.6 237.6L-98.5 230.3Z" fill="#0071bf"/><path d="M200 200L-98.2 232.4L-98.9 225.1Z" fill="#0074bd"/><path d="M200 200L-98.8 227.2L-99.3 219.9Z" fill="#0077bc"/><path d="M200 200L-99.2 222.0L-99.6 214.7Z" fill="#007aba"/><path d="M200 200L-99.5 216.7L-99.9 209.4Z" fill="#007db8"/><path d="M200 200L-99.8 211.5L-100.0 204.2Z" fill="#0080b6"/><path d="M200 200L-99.9 206.3L-100.0 199.0Z" fill="#0083b5"/><path d="M200 200L-100.0 201.0L-99.9 193.7Z" fill="#0085b3"/><path d="M200 200L-100.0 195.8L-99.8 188.5Z" fill="#0088b2"/><path d="M200 200L-99.9 190.6L-99.5 183.3Z" fill="#008bb1"/><path d="M200 200L-99.6 185.3L-99.2 178.0Z" fill="#008eb0"/><path d="M200 200L-99.3 180.1L-98.8 172.8Z" fill="#0090af"/><path d="M200 200L-98.9 174.9L-98.2 167.6Z" fill="#0093ae"/><path d="M200 200L-98.5 169.7L-97.6 162.4Z" fill="#0096ac"/><path d="M200 200L-97.9 164.5L-96.9 157.2Z" fill="#0098ab"/><path d="M200 200L-97.2 159.3L-96.1 152.0Z" fill="#009baa"/><path d="M200 200L-96.5 154.1L-95.3 146.9Z" fill="#009ea9"/><path d="M200 200L-95.6 148.9L-94.3 141.7Z" fill="#00a1a8"/><path d="M200 200L-94.7 143.8L-93.2 136.6Z" fill="#00a3a7"/><path d="M200 200L-93.7 138.7L-92.1 131.5Z" fill="#00a6a6"/><path d="M200 200L-92.5 133.5L-90.8 126.4Z" fill="#00a9a4"/><path d="M200 200L-91.3 128.4L-89.5 121.3Z" fill="#00aca3"/><path d="M200 200L-90.0 123.4L-88.1 116.3Z" fill="#00aea2"/><path d="M200 200L-88.7 118.3L-86.6 111.3Z" fill="#00b1a1"/><path d="M200 200L-87.2 113.3L-85.0 106.3Z" fill="#00b4a0"/><path d="M200 200L-85.6 108.3L-83.3 101.3Z" fill="#00b79f"/><path d="M200 200L-84.0 103.3L-81.5 96.4Z" fill="#00b99d"/><path d="M200 200L-82.3 98.4L-79.7 91.5Z" fill="#00bc9c"/><path d="M200 200L-80.4 93.5L-77.8 86.6Z" fill="#00bf9b"/><path d="M200 200L-78.5 88.6L-75.7 81.8Z" fill="#00c29a"/><path d="M200 200L-76.6 83.7L-73.6 77.0Z" fill="#00c499"/><path d="M200 200L-74.5 78.9L-71.4 72.3Z" fill="#00c798"/><path d="M200 200L-72.3 74.2L-69.2 67.5Z" fill="#00ca97"/><path d="M200 200L-70.1 69.4L-66.8 62.9Z" fill="#00cc95"/><path d="M200 200L-67.8 64.7L-64.4 58.2Z" fill="#00cf94"/><path d="M200 200L-65.4 60.1L-61.9 53.6Z" fill="#00d293"/><path d="M200 200L-62.9 55.5L-59.3 49.1Z" fill="#00d592"/><path d="M200 200L-60.3 50.9L-56.6 44.6Z" fill="#00d791"/><path d="M200 200L-57.7 46.4L-53.9 40.1Z" fill="#00da90"/><path d="M200 200L-55.0 41.9L-51.0 35.7Z" fill="#00dd8e"/><path d="M200 200L-52.2 37.5L-48.1 31.4Z" fill="#00e08d"/><path d="M200 200L-49.3 33.1L-45.1 27.1Z" fill="#00e28c"/><path d="M200 200L-46.3 28.8L-42.1 22.8Z" fill="#00e58b"/><path d="M200 200L-43.3 24.5L-39.0 18.6Z" fill="#00e88a"/><path d="M200 200L-40.2 20.3L-35.8 14.5Z" fill="#00ea89"/><path d="M200 200L-37.0 16.1L-32.5 10.4Z" fill="#00ed88"/><path d="M200 200L-33.8 12.0L-29.1 6.4Z" fill="#00f086"/><path d="M200 200L-30.5 8.0L-25.7 2.4Z" fill="#00f385"/><path d="M200 200L-27.1 4.0L-22.2 -1.5Z" fill="#00f584"/><path d="M200 200L-23.6 0.0L-18.7 -5.4Z" fill="#00f883"/><path d="M200 200L-20.1 -3.8L-15.1 -9.1Z" fill="#00fb82"/><path d="M200 200L-16.5 -7.6L-11.4 -12.9Z" fill="#00fe81"/><path d="M200 200L-12.9 -11.4L-7.6 -16.5Z" fill="#01ff7f"/><path d="M200 200L-9.1 -15.1L-3.8 -20.1Z" fill="#02ff7c"/><path d="M200 200L-5.4 -18.7L0.0 -23.6Z" fill="#04ff79"/><path d="M200 200L-1.5 -22.2L4.0 -27.1Z" fill="#06ff76"/><path d="M200 200L2.4 -25.7L8.0 -30.5Z" fill="#07ff73"/><path d="M200 200L6.4 -29.1L12.0 -33.8Z" fill="#09ff70"/><path d="M200 200L10.4 -32.5L16.1 -37.0Z" fill="#0aff6e"/><path d="M200 200L14.5 -35.8L20.3 -40.2Z" fill="#0cff6b"/><path d="M200 200L18.6 -39.0L24.5 -43.3Z" fill="#0eff68"/><path d="M200 200L22.8 -42.1L28.8 -46.3Z" fill="#0fff65"/><path d="M200 200L27.1 -45.1L33.1 -49.3Z" fill="#11ff62"/><path d="M200 200L31.4 -48.1L37.5 -52.2Z" fill="#12ff5f"/><path d="M200 200L35.7 -51.0L41.9 -55.0Z" fill="#14ff5c"/><path d="M200 200L40.1 -53.9L46.4 -57.7Z" fill="#16ff5a"/><path d="M200 200L44.6 -56.6L50.9 -60.3Z" fill="#17ff57"/><path d="M200 200L49.1 -59.3L55.5 -62.9Z" fill="#19ff54"/><path d="M200 200L53.6 -61.9L60.1 -65.4Z" fill="#1aff51"/><path d="M200 200L58.2 -64.4L64.7 -67.8Z" fill="#1cff4e"/><path d="M200 200L62.9 -66.8L69.4 -70.1Z" fill="#1eff4b"/><path d="M200 200L67.5 -69.2L74.2 -72.3Z" fill="#1fff49"/><path d="M200 200L72.3 -71.4L78.9 -74.5Z" fill="#21ff46"/><path d="M200 200L77.0 -73.6L83.7 -76.6Z" fill="#22ff43"/><path d="M200 200L81.8 -75.7L88.6 -78.5Z" fill="#24ff40"/><path d="M200 200L86.6 -77.8L93.5 -80.4Z" fill="#26ff3d"/><path d="M200 200L91.5 -79.7L98.4 -82.3Z" fill="#27ff3a"/><path d="M200 200L96.4 -81.5L103.3 -84.0Z" fill="#29ff37"/><path d="M200 200L101.3 -83.3L108.3 -85.6Z" fill="#2aff35"/><path d="M200 200L106.3 -85.0L113.3 -87.2Z" fill="#2cff32"/><path d="M200 200L111.3 -86.6L118.3 -88.7Z" fill="#2eff2f"/><path d="M200 200L116.3 -88.1L123.4 -90.0Z" fill="#2fff2c"/><path d="M200 200L121.3 -89.5L128.4 -91.3Z" fill="#31ff29"/><path d="M200 200L126.4 -90.8L133.5 -92.5Z" fill="#32ff26"/><path d="M200 200L131.5 -92.1L138.7 -93.7Z" fill="#34ff24"/><path d="M200 200L136.6 -93.2L143.8 -94.7Z" fill="#36ff21"/><path d="M200 200L141.7 -94.3L148.9 -95.6Z" fill="#37ff1e"/><path d="M200 200L146.9 -95.3L154.1 -96.5Z" fill="#39ff1b"/><path d="M200 200L152.0 -96.1L159.3 -97.2Z" fill="#3aff18"/><path d="M200 200L157.2 -96.9L164.5 -97.9Z" fill="#3cff15"/><path d="M200 200L162.4 -97.6L169.7 -98.5Z" fill="#3eff12"/><path d="M200 200L167.6 -98.2L174.9 -98.9Z" fill="#3fff10"/><path d="M200 200L172.8 -98.8L180.1 -99.3Z" fill="#41ff0d"/><path d="M200 200L178.0 -99.2L185.3 -99.6Z" fill="#42ff0a"/><path d="M200 200L183.3 -99.5L190.6 -99.9Z" fill="#44ff07"/><path d="M200 200L188.5 -99.8L195.8 -100.0Z" fill="#46ff04"/><path d="M200 200L193.7 -99.9L201.0 -100.0Z" fill="#47ff01"/></g></defs>
<use href="#conicw" transform="translate(51,639) scale(0.28500,0.22000)"/>
<g transform="translate(51,639) scale(0.22984,0.15466)" shape-rendering="geometricPrecision">
<rect x="73" y="84" width="350" height="400" rx="26.1" ry="38.8" fill="#fff"/>
<path d="M248.5 57 V513 M52 284.5 H445" stroke="#000" stroke-width="4.35" stroke-dasharray="13.05 13.05" fill="none" shape-rendering="crispEdges"/>
<ellipse cx="248.5" cy="283.5" rx="91.5" ry="97.5" stroke="#000" stroke-width="4.35" stroke-dasharray="13.05 13.05" fill="none" shape-rendering="crispEdges"/>
<polygon points="326.8,157.5 351.5,128.3 366.8,145.0 343.0,173.7" fill="#00ff00" stroke="#ffff00" stroke-width="3.92" stroke-linejoin="miter"/>
<polygon points="344.8,178.3 369.0,152.5 369.0,176.7 344.8,205.0" fill="#0000ff" stroke="#ffff00" stroke-width="3.92" stroke-linejoin="miter"/>
<polygon points="369.7,147.5 390.2,138.3 370.2,160.8" fill="#ff0000" stroke="#ffff00" stroke-width="3.92" stroke-linejoin="miter"/>
<path d="M272.7,257.2 L368.0,147.8" stroke="#ffff00" stroke-width="5.20" fill="none"/>
<path d="M272.2,255.8 L366.8,147.2" stroke="#800000" stroke-width="1.7" fill="none"/>
<polygon points="248.5,285.0 261.5,238.3 270.2,262.5" fill="#ffff00" stroke="#ffff00" stroke-width="3.92" stroke-linejoin="miter"/>
<polygon points="264.3,242.5 272.7,257.5 288.0,269.5 270.2,262.5" fill="#c0c0c0" stroke="#ffff00" stroke-width="3.92" stroke-linejoin="miter"/>
<polygon points="248.5,285.0 270.2,262.5 289.3,270.0" fill="#800000" stroke="#ffff00" stroke-width="3.92" stroke-linejoin="miter"/>
</g>
<rect x="230" y="407" width="128" height="14" fill="#efefef" />
<text x="241.00" y="418.80" font-family="'DejaVu Sans', sans-serif" font-size="12.4" fill="#000" letter-spacing="0.219" >Current Measure</text>
<rect x="220" y="430" width="153" height="578" fill="#ffffff" />
<rect x="220" y="430" width="152" height="577" fill="#8a8a8a" />
<rect x="221" y="431" width="151" height="576" fill="#5a5a5a" />
<rect x="222" y="432" width="150" height="575" fill="#f0f0f0" />
<rect x="223" y="432" width="51" height="552" fill="#f0f0f0" />
<rect x="222" y="432" width="1" height="552" fill="#ffffff" />
<rect x="274" y="432" width="1" height="552" fill="#3c3c3c" />
<rect x="275" y="432" width="80" height="22" fill="#ffffff" />
<rect x="275" y="454" width="80" height="1" fill="#c3c3c3" />
<rect x="223" y="454" width="51" height="1" fill="#3c3c3c" />
<rect x="223" y="455" width="51" height="1" fill="#ffffff" />
<text x="246.51" y="446.60" font-family="'Liberation Sans', sans-serif" font-size="12" font-weight="bold" fill="#000" text-anchor="middle" letter-spacing="0.228" >Y cd/m</text>
<text x="269.20" y="442.40" font-family="'Liberation Sans', sans-serif" font-size="7.5" font-weight="bold" fill="#000" text-anchor="middle" >2</text>
<text x="352.97" y="446.60" font-family="'Liberation Sans', sans-serif" font-size="12" fill="#000" text-anchor="end" letter-spacing="-0.625" >100.875</text>
<rect x="275" y="455" width="80" height="22" fill="#ffffff" />
<rect x="275" y="477" width="80" height="1" fill="#c3c3c3" />
<rect x="223" y="477" width="51" height="1" fill="#3c3c3c" />
<rect x="223" y="478" width="51" height="1" fill="#ffffff" />
<text x="248.57" y="469.60" font-family="'Liberation Sans', sans-serif" font-size="12" font-weight="bold" fill="#000" text-anchor="middle" letter-spacing="-0.264" >Y ftL</text>
<text x="352.97" y="469.60" font-family="'Liberation Sans', sans-serif" font-size="12" fill="#000" text-anchor="end" letter-spacing="-0.625" >29.4441</text>
<rect x="275" y="478" width="80" height="22" fill="#ffffff" />
<rect x="275" y="500" width="80" height="1" fill="#c3c3c3" />
<rect x="223" y="500" width="51" height="1" fill="#3c3c3c" />
<rect x="223" y="501" width="51" height="1" fill="#ffffff" />
<text x="248.55" y="492.60" font-family="'Liberation Sans', sans-serif" font-size="12" font-weight="bold" fill="#000" text-anchor="middle" letter-spacing="-0.303" >T°</text>
<text x="352.93" y="492.60" font-family="'Liberation Sans', sans-serif" font-size="12" fill="#000" text-anchor="end" letter-spacing="-0.674" >6486</text>
<rect x="275" y="501" width="80" height="22" fill="#e1e1e1" />
<rect x="275" y="523" width="80" height="1" fill="#c3c3c3" />
<rect x="223" y="523" width="51" height="1" fill="#3c3c3c" />
<rect x="223" y="524" width="51" height="1" fill="#ffffff" />
<text x="248.50" y="515.60" font-family="'Liberation Sans', sans-serif" font-size="12" font-weight="bold" fill="#000" text-anchor="middle" letter-spacing="-0.400" >X</text>
<text x="352.99" y="515.60" font-family="'Liberation Sans', sans-serif" font-size="12" fill="#000" text-anchor="end" letter-spacing="-0.606" >95.91</text>
<rect x="275" y="524" width="80" height="22" fill="#e1e1e1" />
<rect x="275" y="546" width="80" height="1" fill="#c3c3c3" />
<rect x="223" y="546" width="51" height="1" fill="#3c3c3c" />
<rect x="223" y="547" width="51" height="1" fill="#ffffff" />
<text x="248.50" y="538.60" font-family="'Liberation Sans', sans-serif" font-size="12" font-weight="bold" fill="#000" text-anchor="middle" letter-spacing="-0.400" >Y</text>
<text x="352.98" y="538.60" font-family="'Liberation Sans', sans-serif" font-size="12" fill="#000" text-anchor="end" letter-spacing="-0.617" >100.88</text>
<rect x="275" y="547" width="80" height="22" fill="#e1e1e1" />
<rect x="275" y="569" width="80" height="1" fill="#c3c3c3" />
<rect x="223" y="569" width="51" height="1" fill="#3c3c3c" />
<rect x="223" y="570" width="51" height="1" fill="#ffffff" />
<text x="248.52" y="561.60" font-family="'Liberation Sans', sans-serif" font-size="12" font-weight="bold" fill="#000" text-anchor="middle" letter-spacing="-0.367" >Z</text>
<text x="352.98" y="561.60" font-family="'Liberation Sans', sans-serif" font-size="12" fill="#000" text-anchor="end" letter-spacing="-0.617" >109.64</text>
<rect x="275" y="570" width="80" height="22" fill="#ffffff" />
<rect x="275" y="592" width="80" height="1" fill="#c3c3c3" />
<rect x="223" y="592" width="51" height="1" fill="#3c3c3c" />
<rect x="223" y="593" width="51" height="1" fill="#ffffff" />
<text x="248.48" y="584.60" font-family="'Liberation Sans', sans-serif" font-size="12" font-weight="bold" fill="#000" text-anchor="middle" letter-spacing="-0.433" >R</text>
<text x="352.98" y="584.60" font-family="'Liberation Sans', sans-serif" font-size="12" fill="#000" text-anchor="end" letter-spacing="-0.617" >101.07</text>
<rect x="275" y="593" width="80" height="22" fill="#ffffff" />
<rect x="275" y="615" width="80" height="1" fill="#c3c3c3" />
<rect x="223" y="615" width="51" height="1" fill="#3c3c3c" />
<rect x="223" y="616" width="51" height="1" fill="#ffffff" />
<text x="248.47" y="607.60" font-family="'Liberation Sans', sans-serif" font-size="12" font-weight="bold" fill="#000" text-anchor="middle" letter-spacing="-0.467" >G</text>
<text x="352.98" y="607.60" font-family="'Liberation Sans', sans-serif" font-size="12" fill="#000" text-anchor="end" letter-spacing="-0.617" >100.84</text>
<rect x="275" y="616" width="80" height="22" fill="#ffffff" />
<rect x="275" y="638" width="80" height="1" fill="#c3c3c3" />
<rect x="223" y="638" width="51" height="1" fill="#3c3c3c" />
<rect x="223" y="639" width="51" height="1" fill="#ffffff" />
<text x="248.48" y="630.60" font-family="'Liberation Sans', sans-serif" font-size="12" font-weight="bold" fill="#000" text-anchor="middle" letter-spacing="-0.433" >B</text>
<text x="352.98" y="630.60" font-family="'Liberation Sans', sans-serif" font-size="12" fill="#000" text-anchor="end" letter-spacing="-0.617" >100.65</text>
<rect x="275" y="639" width="80" height="22" fill="#e1e1e1" />
<rect x="275" y="661" width="80" height="1" fill="#c3c3c3" />
<rect x="223" y="661" width="51" height="1" fill="#3c3c3c" />
<rect x="223" y="662" width="51" height="1" fill="#ffffff" />
<text x="248.53" y="653.60" font-family="'Liberation Sans', sans-serif" font-size="12" font-weight="bold" fill="#000" text-anchor="middle" letter-spacing="-0.334" >x</text>
<text x="352.99" y="653.60" font-family="'Liberation Sans', sans-serif" font-size="12" fill="#000" text-anchor="end" letter-spacing="-0.606" >0.313</text>
<rect x="275" y="662" width="80" height="22" fill="#e1e1e1" />
<rect x="275" y="684" width="80" height="1" fill="#c3c3c3" />
<rect x="223" y="684" width="51" height="1" fill="#3c3c3c" />
<rect x="223" y="685" width="51" height="1" fill="#ffffff" />
<text x="248.53" y="676.60" font-family="'Liberation Sans', sans-serif" font-size="12" font-weight="bold" fill="#000" text-anchor="middle" letter-spacing="-0.334" >y</text>
<text x="352.99" y="676.60" font-family="'Liberation Sans', sans-serif" font-size="12" fill="#000" text-anchor="end" letter-spacing="-0.606" >0.329</text>
<rect x="275" y="685" width="80" height="22" fill="#e1e1e1" />
<rect x="275" y="707" width="80" height="1" fill="#c3c3c3" />
<rect x="223" y="707" width="51" height="1" fill="#3c3c3c" />
<rect x="223" y="708" width="51" height="1" fill="#ffffff" />
<text x="248.50" y="699.60" font-family="'Liberation Sans', sans-serif" font-size="12" font-weight="bold" fill="#000" text-anchor="middle" letter-spacing="-0.400" >Y</text>
<text x="352.97" y="699.60" font-family="'Liberation Sans', sans-serif" font-size="12" fill="#000" text-anchor="end" letter-spacing="-0.625" >100.875</text>
<rect x="275" y="708" width="80" height="22" fill="#ffffff" />
<rect x="275" y="730" width="80" height="1" fill="#c3c3c3" />
<rect x="223" y="730" width="51" height="1" fill="#3c3c3c" />
<rect x="223" y="731" width="51" height="1" fill="#ffffff" />
<text x="248.53" y="722.60" font-family="'Liberation Sans', sans-serif" font-size="12" font-weight="bold" fill="#000" text-anchor="middle" letter-spacing="-0.334" >x</text>
<text x="352.99" y="722.60" font-family="'Liberation Sans', sans-serif" font-size="12" fill="#000" text-anchor="end" letter-spacing="-0.606" >0.313</text>
<rect x="275" y="731" width="80" height="22" fill="#ffffff" />
<rect x="275" y="753" width="80" height="1" fill="#c3c3c3" />
<rect x="223" y="753" width="51" height="1" fill="#3c3c3c" />
<rect x="223" y="754" width="51" height="1" fill="#ffffff" />
<text x="248.53" y="745.60" font-family="'Liberation Sans', sans-serif" font-size="12" font-weight="bold" fill="#000" text-anchor="middle" letter-spacing="-0.334" >y</text>
<text x="352.99" y="745.60" font-family="'Liberation Sans', sans-serif" font-size="12" fill="#000" text-anchor="end" letter-spacing="-0.606" >0.329</text>
<rect x="275" y="754" width="80" height="22" fill="#ffffff" />
<rect x="275" y="776" width="80" height="1" fill="#c3c3c3" />
<rect x="223" y="776" width="51" height="1" fill="#3c3c3c" />
<rect x="223" y="777" width="51" height="1" fill="#ffffff" />
<text x="248.55" y="768.60" font-family="'Liberation Sans', sans-serif" font-size="12" font-weight="bold" fill="#000" text-anchor="middle" letter-spacing="-0.300" >z</text>
<text x="352.99" y="768.60" font-family="'Liberation Sans', sans-serif" font-size="12" fill="#000" text-anchor="end" letter-spacing="-0.606" >0.358</text>
<rect x="275" y="777" width="80" height="22" fill="#e1e1e1" />
<rect x="275" y="799" width="80" height="1" fill="#c3c3c3" />
<rect x="223" y="799" width="51" height="1" fill="#3c3c3c" />
<rect x="223" y="800" width="51" height="1" fill="#ffffff" />
<text x="248.52" y="791.60" font-family="'Liberation Sans', sans-serif" font-size="12" font-weight="bold" fill="#000" text-anchor="middle" letter-spacing="-0.367" >L</text>
<text x="352.98" y="791.60" font-family="'Liberation Sans', sans-serif" font-size="12" fill="#000" text-anchor="end" letter-spacing="-0.617" >100.00</text>
<rect x="275" y="800" width="80" height="22" fill="#e1e1e1" />
<rect x="275" y="822" width="80" height="1" fill="#c3c3c3" />
<rect x="223" y="822" width="51" height="1" fill="#3c3c3c" />
<rect x="223" y="823" width="51" height="1" fill="#ffffff" />
<text x="248.53" y="814.60" font-family="'Liberation Sans', sans-serif" font-size="12" font-weight="bold" fill="#000" text-anchor="middle" letter-spacing="-0.334" >a</text>
<text x="353.01" y="814.60" font-family="'Liberation Sans', sans-serif" font-size="12" fill="#000" text-anchor="end" letter-spacing="-0.589" >0.05</text>
<rect x="275" y="823" width="80" height="22" fill="#e1e1e1" />
<rect x="275" y="845" width="80" height="1" fill="#c3c3c3" />
<rect x="223" y="845" width="51" height="1" fill="#3c3c3c" />
<rect x="223" y="846" width="51" height="1" fill="#ffffff" />
<text x="248.52" y="837.60" font-family="'Liberation Sans', sans-serif" font-size="12" font-weight="bold" fill="#000" text-anchor="middle" letter-spacing="-0.367" >b</text>
<text x="353.01" y="837.60" font-family="'Liberation Sans', sans-serif" font-size="12" fill="#000" text-anchor="end" letter-spacing="-0.589" >0.13</text>
<rect x="275" y="846" width="80" height="22" fill="#ffffff" />
<rect x="275" y="868" width="80" height="1" fill="#c3c3c3" />
<rect x="223" y="868" width="51" height="1" fill="#3c3c3c" />
<rect x="223" y="869" width="51" height="1" fill="#ffffff" />
<text x="248.52" y="860.60" font-family="'Liberation Sans', sans-serif" font-size="12" font-weight="bold" fill="#000" text-anchor="middle" letter-spacing="-0.367" >L</text>
<text x="352.98" y="860.60" font-family="'Liberation Sans', sans-serif" font-size="12" fill="#000" text-anchor="end" letter-spacing="-0.617" >100.00</text>
<rect x="275" y="869" width="80" height="22" fill="#ffffff" />
<rect x="275" y="891" width="80" height="1" fill="#c3c3c3" />
<rect x="223" y="891" width="51" height="1" fill="#3c3c3c" />
<rect x="223" y="892" width="51" height="1" fill="#ffffff" />
<text x="248.48" y="883.60" font-family="'Liberation Sans', sans-serif" font-size="12" font-weight="bold" fill="#000" text-anchor="middle" letter-spacing="-0.433" >C</text>
<text x="353.01" y="883.60" font-family="'Liberation Sans', sans-serif" font-size="12" fill="#000" text-anchor="end" letter-spacing="-0.589" >0.14</text>
<rect x="275" y="892" width="80" height="22" fill="#ffffff" />
<rect x="275" y="914" width="80" height="1" fill="#c3c3c3" />
<rect x="223" y="914" width="51" height="1" fill="#3c3c3c" />
<rect x="223" y="915" width="51" height="1" fill="#ffffff" />
<text x="248.48" y="906.60" font-family="'Liberation Sans', sans-serif" font-size="12" font-weight="bold" fill="#000" text-anchor="middle" letter-spacing="-0.433" >H</text>
<text x="352.99" y="906.60" font-family="'Liberation Sans', sans-serif" font-size="12" fill="#000" text-anchor="end" letter-spacing="-0.606" >69.85</text>
<rect x="275" y="915" width="80" height="22" fill="#e1e1e1" />
<rect x="275" y="937" width="80" height="1" fill="#c3c3c3" />
<rect x="223" y="937" width="51" height="1" fill="#3c3c3c" />
<rect x="223" y="938" width="51" height="1" fill="#ffffff" />
<text x="248.52" y="929.60" font-family="'Liberation Sans', sans-serif" font-size="12" font-weight="bold" fill="#000" text-anchor="middle" letter-spacing="-0.367" >L</text>
<text x="352.98" y="929.60" font-family="'Liberation Sans', sans-serif" font-size="12" fill="#000" text-anchor="end" letter-spacing="-0.617" >100.90</text>
<rect x="275" y="938" width="80" height="22" fill="#e1e1e1" />
<rect x="275" y="960" width="80" height="1" fill="#c3c3c3" />
<rect x="223" y="960" width="51" height="1" fill="#3c3c3c" />
<rect x="223" y="961" width="51" height="1" fill="#ffffff" />
<text x="248.45" y="952.60" font-family="'Liberation Sans', sans-serif" font-size="12" font-weight="bold" fill="#000" text-anchor="middle" letter-spacing="-0.500" >M</text>
<text x="352.98" y="952.60" font-family="'Liberation Sans', sans-serif" font-size="12" fill="#000" text-anchor="end" letter-spacing="-0.617" >150.05</text>
<rect x="275" y="961" width="80" height="22" fill="#e1e1e1" />
<rect x="275" y="983" width="80" height="1" fill="#c3c3c3" />
<rect x="223" y="983" width="51" height="1" fill="#3c3c3c" />
<text x="248.50" y="975.60" font-family="'Liberation Sans', sans-serif" font-size="12" font-weight="bold" fill="#000" text-anchor="middle" letter-spacing="-0.400" >S</text>
<text x="352.98" y="975.60" font-family="'Liberation Sans', sans-serif" font-size="12" fill="#000" text-anchor="end" letter-spacing="-0.617" >100.67</text>
<rect x="222" y="984" width="133" height="23" fill="#a0a0a0" />
<rect x="355" y="432" width="17" height="575" fill="#f0f0f0" />
<path d="M359.5 443 L363.7 437.5 L368 443 Z" fill="#b0b0b0" shape-rendering="geometricPrecision"/>
<path d="M359.5 995.5 L363.7 1001 L368 995.5 Z" fill="#a0a0a0" shape-rendering="geometricPrecision"/>
<rect x="391" y="387" width="1505" height="630" fill="#ffffff" />
<rect x="391" y="387" width="1504" height="629" fill="#747474" />
<rect x="392" y="388" width="1502" height="627" fill="#9c9c9c" />
<rect x="393" y="389" width="1500" height="625" fill="#ebebeb" />
<path d="M393 405 V392 Q393 388 397 388 H1889 Q1893 388 1893 392 V405 Z" fill="#e8eef8" shape-rendering="geometricPrecision"/>
<path d="M393 392 Q393 388 397 388 H393 Z" fill="#7c7c7c" shape-rendering="geometricPrecision"/>
<path d="M1893 392 Q1893 388 1889 388 H1893 Z" fill="#7c7c7c" shape-rendering="geometricPrecision"/>
<rect x="393" y="405" width="1500" height="1" fill="#b9bdc6" />
<text x="398.00" y="400.60" font-family="'DejaVu Sans', sans-serif" font-size="11" font-weight="bold" fill="#4a4646" letter-spacing="0.500" >Information</text>
<rect x="396" y="409" width="302" height="22" fill="#ffffff" />
<rect x="396" y="409" width="301" height="21" fill="#808080" />
<rect x="397" y="410" width="300" height="20" fill="#e3e3e3" />
<rect x="397" y="410" width="299" height="19" fill="#5a5a5a" />
<rect x="398" y="411" width="298" height="18" fill="#ffffff" />
<rect x="679" y="411" width="17" height="18" fill="#f0f0f0" />
<rect x="679" y="411" width="16" height="17" fill="#ffffff" />
<rect x="680" y="412" width="16" height="17" fill="#6d6d6d" />
<rect x="680" y="412" width="15" height="16" fill="#f0f0f0" />
<rect x="680" y="412" width="15" height="15" fill="#f0f0f0" />
<rect x="680" y="427" width="15" height="1" fill="#a0a0a0" />
<path d="M684.0 418.5 H691.0 L687.5 422.5 Z" fill="#000" shape-rendering="geometricPrecision"/>
<text x="400.30" y="425.60" font-family="'DejaVu Sans', sans-serif" font-size="12.4" fill="#000" letter-spacing="0.061" >Target - RGB - Gamma</text>
<rect x="398" y="439" width="498" height="570" fill="#000" />
<use href="#conicw" transform="translate(399,440) scale(1.24000,1.42250)"/>
<g transform="translate(399,440) scale(1.00000,1.00000)" shape-rendering="geometricPrecision">
<rect x="73" y="84" width="350" height="400" rx="9.0" ry="9.0" fill="#fff"/>
<path d="M248.5 57 V513 M52 284.5 H445" stroke="#000" stroke-width="1.00" stroke-dasharray="3.00 3.00" fill="none" shape-rendering="crispEdges"/>
<ellipse cx="248.5" cy="283.5" rx="97.5" ry="114.5" stroke="#000" stroke-width="1.00" stroke-dasharray="3.00 3.00" fill="none" shape-rendering="crispEdges"/>
<polygon points="326.8,157.5 351.5,128.3 366.8,145.0 343.0,173.7" fill="#00ff00" stroke="#ffff00" stroke-width="0.90" stroke-linejoin="miter"/>
<polygon points="344.8,178.3 369.0,152.5 369.0,176.7 344.8,205.0" fill="#0000ff" stroke="#ffff00" stroke-width="0.90" stroke-linejoin="miter"/>
<polygon points="369.7,147.5 390.2,138.3 370.2,160.8" fill="#ff0000" stroke="#ffff00" stroke-width="0.90" stroke-linejoin="miter"/>
<path d="M272.7,257.2 L368.0,147.8" stroke="#ffff00" stroke-width="5.20" fill="none"/>
<path d="M272.2,255.8 L366.8,147.2" stroke="#800000" stroke-width="1.7" fill="none"/>
<polygon points="248.5,285.0 261.5,238.3 270.2,262.5" fill="#ffff00" stroke="#ffff00" stroke-width="0.90" stroke-linejoin="miter"/>
<polygon points="264.3,242.5 272.7,257.5 288.0,269.5 270.2,262.5" fill="#c0c0c0" stroke="#ffff00" stroke-width="0.90" stroke-linejoin="miter"/>
<polygon points="248.5,285.0 270.2,262.5 289.3,270.0" fill="#800000" stroke="#ffff00" stroke-width="0.90" stroke-linejoin="miter"/>
</g>
<rect x="896" y="439" width="497" height="1" fill="#a4a4a4" />
<rect x="896" y="439" width="1" height="569" fill="#a4a4a4" />
<rect x="897" y="440" width="495" height="1" fill="#626262" />
<rect x="897" y="440" width="1" height="567" fill="#626262" />
<rect x="898" y="441" width="493" height="1" fill="#a2a2a2" />
<rect x="898" y="441" width="1" height="565" fill="#a2a2a2" />
<rect x="899" y="442" width="491" height="1" fill="#6e6e6e" />
<rect x="899" y="442" width="1" height="563" fill="#6e6e6e" />
<rect x="899" y="1005" width="492" height="1" fill="#f0f0f0" />
<rect x="1390" y="442" width="1" height="564" fill="#f0f0f0" />
<rect x="898" y="1006" width="494" height="1" fill="#ffffff" />
<rect x="1391" y="441" width="1" height="566" fill="#ffffff" />
<rect x="897" y="1007" width="496" height="1" fill="#ffffff" />
<rect x="1392" y="440" width="1" height="568" fill="#ffffff" />
<defs><linearGradient id="g1" gradientUnits="userSpaceOnUse" x1="900" y1="0" x2="1390" y2="0"><stop offset="0" stop-color="#202020"/><stop offset="1" stop-color="#ffffff"/></linearGradient><clipPath id="g1c"><rect x="900" y="443" width="490" height="562"/></clipPath></defs>
<rect x="900" y="443" width="490" height="562" fill="url(#g1)" />
<rect x="900" y="443" width="1" height="562" fill="#0b4b4b" />
<rect x="949" y="443" width="1" height="562" fill="#0b4b4b" />
<rect x="998" y="443" width="1" height="562" fill="#0b4b4b" />
<rect x="1047" y="443" width="1" height="562" fill="#0b4b4b" />
<rect x="1096" y="443" width="1" height="562" fill="#0b4b4b" />
<rect x="1145" y="443" width="1" height="562" fill="#0b4b4b" />
<rect x="1194" y="443" width="1" height="562" fill="#0b4b4b" />
<rect x="1243" y="443" width="1" height="562" fill="#0b4b4b" />
<rect x="1292" y="443" width="1" height="562" fill="#0b4b4b" />
<rect x="1341" y="443" width="1" height="562" fill="#0b4b4b" />
<rect x="900" y="471" width="490" height="1" fill="#0b4b4b" />
<rect x="900" y="499" width="490" height="1" fill="#0b4b4b" />
<rect x="900" y="527" width="490" height="1" fill="#0b4b4b" />
<rect x="900" y="555" width="490" height="1" fill="#0b4b4b" />
<rect x="900" y="583" width="490" height="1" fill="#0b4b4b" />
<rect x="900" y="611" width="490" height="1" fill="#0b4b4b" />
<rect x="900" y="639" width="490" height="1" fill="#0b4b4b" />
<rect x="900" y="667" width="490" height="1" fill="#0b4b4b" />
<rect x="900" y="695" width="490" height="1" fill="#0b4b4b" />
<rect x="900" y="780" width="490" height="1" fill="#0b4b4b" />
<rect x="900" y="836" width="490" height="1" fill="#0b4b4b" />
<rect x="900" y="892" width="490" height="1" fill="#0b4b4b" />
<rect x="900" y="948" width="490" height="1" fill="#0b4b4b" />
<path d="M900 583.5 H1390" stroke="#ffffff" stroke-width="1" stroke-dasharray="4 4" fill="none"/>
<rect x="900" y="580" width="4" height="8" fill="#f0f0f0" />
<text x="1054.00" y="457.30" font-family="'Liberation Sans', sans-serif" font-size="14.6" font-weight="bold" fill="#dcdc00" letter-spacing="-0.044" >Gray Scale Balance w/gamma</text>
<text x="902.50" y="466.80" font-family="'Liberation Serif', serif" font-size="13.5" fill="#dcdcdc" letter-spacing="0.376" >140%</text>
<text x="902.50" y="494.80" font-family="'Liberation Serif', serif" font-size="13.5" fill="#dcdcdc" letter-spacing="0.376" >130%</text>
<text x="902.50" y="522.80" font-family="'Liberation Serif', serif" font-size="13.5" fill="#dcdcdc" letter-spacing="0.376" >120%</text>
<text x="902.50" y="550.80" font-family="'Liberation Serif', serif" font-size="13.5" fill="#dcdcdc" letter-spacing="0.501" >110%</text>
<text x="902.50" y="578.80" font-family="'Liberation Serif', serif" font-size="13.5" fill="#dcdcdc" letter-spacing="0.376" >100%</text>
<text x="902.50" y="606.80" font-family="'Liberation Serif', serif" font-size="13.5" fill="#dcdcdc" letter-spacing="0.518" >90%</text>
<text x="902.50" y="634.80" font-family="'Liberation Serif', serif" font-size="13.5" fill="#dcdcdc" letter-spacing="0.518" >80%</text>
<text x="902.50" y="662.80" font-family="'Liberation Serif', serif" font-size="13.5" fill="#dcdcdc" letter-spacing="0.518" >70%</text>
<text x="902.50" y="690.80" font-family="'Liberation Serif', serif" font-size="13.5" fill="#dcdcdc" letter-spacing="0.518" >60%</text>
<text x="902.30" y="775.60" font-family="'Liberation Serif', serif" font-size="13.5" fill="#dcdcdc" >8</text>
<text x="902.30" y="831.60" font-family="'Liberation Serif', serif" font-size="13.5" fill="#dcdcdc" >6</text>
<text x="902.30" y="887.60" font-family="'Liberation Serif', serif" font-size="13.5" fill="#dcdcdc" >4</text>
<text x="902.30" y="943.60" font-family="'Liberation Serif', serif" font-size="13.5" fill="#dcdcdc" >2</text>
<g clip-path="url(#g1c)">
<text x="951.70" y="719.80" font-family="'Liberation Serif', serif" font-size="13.5" fill="#e6e6e6" letter-spacing="0.126" >10% White</text>
<text x="1049.76" y="719.80" font-family="'Liberation Serif', serif" font-size="13.5" fill="#a9a9a9" letter-spacing="0.126" >30% White</text>
<text x="1147.82" y="719.80" font-family="'Liberation Serif', serif" font-size="13.5" fill="#8f8f8f" letter-spacing="0.126" >50% White</text>
<text x="1245.88" y="719.80" font-family="'Liberation Serif', serif" font-size="13.5" fill="#666666" letter-spacing="0.126" >70% White</text>
<text x="1343.94" y="719.80" font-family="'Liberation Serif', serif" font-size="13.5" fill="#1a1a1a" letter-spacing="0.126" >90% White</text>
</g>
<g clip-path="url(#g1c)">
<text x="951.70" y="1000.50" font-family="'Liberation Serif', serif" font-size="13.5" fill="#e6e6e6" letter-spacing="0.126" >10% White</text>
<text x="1049.76" y="1000.50" font-family="'Liberation Serif', serif" font-size="13.5" fill="#a9a9a9" letter-spacing="0.126" >30% White</text>
<text x="1147.82" y="1000.50" font-family="'Liberation Serif', serif" font-size="13.5" fill="#8f8f8f" letter-spacing="0.126" >50% White</text>
<text x="1245.88" y="1000.50" font-family="'Liberation Serif', serif" font-size="13.5" fill="#666666" letter-spacing="0.126" >70% White</text>
<text x="1343.94" y="1000.50" font-family="'Liberation Serif', serif" font-size="13.5" fill="#1a1a1a" letter-spacing="0.126" >90% White</text>
</g>
<text x="1225.00" y="962.60" font-family="'Liberation Sans', sans-serif" font-size="16" font-weight="bold" fill="#9c9c9c" letter-spacing="0.065" >hcfr.sourceforge.net</text>
<g clip-path="url(#g1c)">
<polyline points="924.0,623.7 949.0,560.2 973.0,586.8 998.0,590.7 1023.0,582.0 1047.0,581.1 1072.0,589.6 1096.0,581.1 1121.0,583.9 1146.0,579.2 1168.0,580.0 1193.0,582.5 1217.0,581.5 1242.0,581.5 1266.0,582.0 1291.0,582.0 1316.0,580.9 1340.0,582.0 1365.0,582.0 1390.0,582.0" fill="none" stroke="#ff0000" stroke-width="2" shape-rendering="geometricPrecision"/>
<rect x="920" y="620" width="8" height="8" fill="#ff0000" />
<rect x="945" y="556" width="8" height="8" fill="#ff0000" />
<rect x="969" y="583" width="8" height="8" fill="#ff0000" />
<rect x="994" y="587" width="8" height="8" fill="#ff0000" />
<rect x="1019" y="578" width="8" height="8" fill="#ff0000" />
<rect x="1043" y="577" width="8" height="8" fill="#ff0000" />
<rect x="1068" y="586" width="8" height="8" fill="#ff0000" />
<rect x="1092" y="577" width="8" height="8" fill="#ff0000" />
<rect x="1117" y="580" width="8" height="8" fill="#ff0000" />
<rect x="1142" y="575" width="8" height="8" fill="#ff0000" />
<rect x="1164" y="576" width="8" height="8" fill="#ff0000" />
<rect x="1189" y="578" width="8" height="8" fill="#ff0000" />
<rect x="1213" y="578" width="8" height="8" fill="#ff0000" />
<rect x="1238" y="578" width="8" height="8" fill="#ff0000" />
<rect x="1262" y="578" width="8" height="8" fill="#ff0000" />
<rect x="1287" y="578" width="8" height="8" fill="#ff0000" />
<rect x="1312" y="577" width="8" height="8" fill="#ff0000" />
<rect x="1336" y="578" width="8" height="8" fill="#ff0000" />
<rect x="1361" y="578" width="8" height="8" fill="#ff0000" />
<rect x="1386" y="578" width="8" height="8" fill="#ff0000" />
</g>
<g clip-path="url(#g1c)">
<polyline points="924.0,704.0 949.0,555.1 973.0,582.0 998.0,588.7 1023.0,578.1 1047.0,582.0 1072.0,583.0 1096.0,582.0 1121.0,582.2 1146.0,582.5 1168.0,577.2 1193.0,581.1 1217.0,582.9 1242.0,583.9 1266.0,583.0 1291.0,583.0 1316.0,582.9 1340.0,583.0 1365.0,583.0 1390.0,582.7" fill="none" stroke="#00ff00" stroke-width="2" shape-rendering="geometricPrecision"/>
<rect x="920" y="700" width="8" height="8" fill="#00ff00" />
<rect x="945" y="551" width="8" height="8" fill="#00ff00" />
<rect x="969" y="578" width="8" height="8" fill="#00ff00" />
<rect x="994" y="585" width="8" height="8" fill="#00ff00" />
<rect x="1019" y="574" width="8" height="8" fill="#00ff00" />
<rect x="1043" y="578" width="8" height="8" fill="#00ff00" />
<rect x="1068" y="579" width="8" height="8" fill="#00ff00" />
<rect x="1092" y="578" width="8" height="8" fill="#00ff00" />
<rect x="1117" y="578" width="8" height="8" fill="#00ff00" />
<rect x="1142" y="578" width="8" height="8" fill="#00ff00" />
<rect x="1164" y="573" width="8" height="8" fill="#00ff00" />
<rect x="1189" y="577" width="8" height="8" fill="#00ff00" />
<rect x="1213" y="579" width="8" height="8" fill="#00ff00" />
<rect x="1238" y="580" width="8" height="8" fill="#00ff00" />
<rect x="1262" y="579" width="8" height="8" fill="#00ff00" />
<rect x="1287" y="579" width="8" height="8" fill="#00ff00" />
<rect x="1312" y="579" width="8" height="8" fill="#00ff00" />
<rect x="1336" y="579" width="8" height="8" fill="#00ff00" />
<rect x="1361" y="579" width="8" height="8" fill="#00ff00" />
<rect x="1386" y="579" width="8" height="8" fill="#00ff00" />
</g>
<g clip-path="url(#g1c)">
<polyline points="924.0,475.0 949.0,576.9 973.0,580.2 998.0,585.0 1023.0,584.1 1047.0,584.1 1072.0,585.0 1096.0,584.1 1121.0,580.2 1146.0,582.0 1168.0,579.2 1193.0,584.1 1217.0,581.1 1242.0,582.0 1266.0,583.1 1291.0,583.1 1316.0,582.0 1340.0,583.1 1365.0,583.1 1390.0,584.1" fill="none" stroke="#0000ff" stroke-width="2" shape-rendering="geometricPrecision"/>
<rect x="920" y="471" width="8" height="8" fill="#0000ff" />
<rect x="945" y="573" width="8" height="8" fill="#0000ff" />
<rect x="969" y="576" width="8" height="8" fill="#0000ff" />
<rect x="994" y="581" width="8" height="8" fill="#0000ff" />
<rect x="1019" y="580" width="8" height="8" fill="#0000ff" />
<rect x="1043" y="580" width="8" height="8" fill="#0000ff" />
<rect x="1068" y="581" width="8" height="8" fill="#0000ff" />
<rect x="1092" y="580" width="8" height="8" fill="#0000ff" />
<rect x="1117" y="576" width="8" height="8" fill="#0000ff" />
<rect x="1142" y="578" width="8" height="8" fill="#0000ff" />
<rect x="1164" y="575" width="8" height="8" fill="#0000ff" />
<rect x="1189" y="580" width="8" height="8" fill="#0000ff" />
<rect x="1213" y="577" width="8" height="8" fill="#0000ff" />
<rect x="1238" y="578" width="8" height="8" fill="#0000ff" />
<rect x="1262" y="579" width="8" height="8" fill="#0000ff" />
<rect x="1287" y="579" width="8" height="8" fill="#0000ff" />
<rect x="1312" y="578" width="8" height="8" fill="#0000ff" />
<rect x="1336" y="579" width="8" height="8" fill="#0000ff" />
<rect x="1361" y="579" width="8" height="8" fill="#0000ff" />
<rect x="1386" y="580" width="8" height="8" fill="#0000ff" />
</g>
<g clip-path="url(#g1c)">
<polyline points="924.0,966.1 949.0,989.2 973.0,997.0 998.0,996.3 1023.0,992.0 1047.0,1000.0 1072.0,987.2 1096.0,998.3 1121.0,997.0 1146.0,994.2 1168.0,983.0 1193.0,992.2 1217.0,995.0 1242.0,993.1 1266.0,1000.2 1291.0,1000.9 1316.0,992.2 1340.0,998.0 1365.0,998.9 1390.0,998.9" fill="none" stroke="#ff00ff" stroke-width="2" shape-rendering="geometricPrecision"/>
<rect x="920" y="962" width="8" height="8" fill="#ff00ff" />
<rect x="945" y="985" width="8" height="8" fill="#ff00ff" />
<rect x="969" y="993" width="8" height="8" fill="#ff00ff" />
<rect x="994" y="992" width="8" height="8" fill="#ff00ff" />
<rect x="1019" y="988" width="8" height="8" fill="#ff00ff" />
<rect x="1043" y="996" width="8" height="8" fill="#ff00ff" />
<rect x="1068" y="983" width="8" height="8" fill="#ff00ff" />
<rect x="1092" y="994" width="8" height="8" fill="#ff00ff" />
<rect x="1117" y="993" width="8" height="8" fill="#ff00ff" />
<rect x="1142" y="990" width="8" height="8" fill="#ff00ff" />
<rect x="1164" y="979" width="8" height="8" fill="#ff00ff" />
<rect x="1189" y="988" width="8" height="8" fill="#ff00ff" />
<rect x="1213" y="991" width="8" height="8" fill="#ff00ff" />
<rect x="1238" y="989" width="8" height="8" fill="#ff00ff" />
<rect x="1262" y="996" width="8" height="8" fill="#ff00ff" />
<rect x="1287" y="997" width="8" height="8" fill="#ff00ff" />
<rect x="1312" y="988" width="8" height="8" fill="#ff00ff" />
<rect x="1336" y="994" width="8" height="8" fill="#ff00ff" />
<rect x="1361" y="995" width="8" height="8" fill="#ff00ff" />
<rect x="1386" y="995" width="8" height="8" fill="#ff00ff" />
</g>
<rect x="1394" y="439" width="498" height="1" fill="#a4a4a4" />
<rect x="1394" y="439" width="1" height="569" fill="#a4a4a4" />
<rect x="1395" y="440" width="496" height="1" fill="#626262" />
<rect x="1395" y="440" width="1" height="567" fill="#626262" />
<rect x="1396" y="441" width="494" height="1" fill="#a2a2a2" />
<rect x="1396" y="441" width="1" height="565" fill="#a2a2a2" />
<rect x="1397" y="442" width="492" height="1" fill="#6e6e6e" />
<rect x="1397" y="442" width="1" height="563" fill="#6e6e6e" />
<rect x="1397" y="1005" width="493" height="1" fill="#f0f0f0" />
<rect x="1889" y="442" width="1" height="564" fill="#f0f0f0" />
<rect x="1396" y="1006" width="495" height="1" fill="#ffffff" />
<rect x="1890" y="441" width="1" height="566" fill="#ffffff" />
<rect x="1395" y="1007" width="497" height="1" fill="#ffffff" />
<rect x="1891" y="440" width="1" height="568" fill="#ffffff" />
<defs><linearGradient id="g2" gradientUnits="userSpaceOnUse" x1="1398" y1="0" x2="1889" y2="0"><stop offset="0" stop-color="#202020"/><stop offset="1" stop-color="#ffffff"/></linearGradient><clipPath id="g2c"><rect x="1398" y="443" width="491" height="562"/></clipPath></defs>
<rect x="1398" y="443" width="491" height="562" fill="url(#g2)" />
<rect x="1398" y="443" width="1" height="562" fill="#0b4b4b" />
<rect x="1447" y="443" width="1" height="562" fill="#0b4b4b" />
<rect x="1496" y="443" width="1" height="562" fill="#0b4b4b" />
<rect x="1545" y="443" width="1" height="562" fill="#0b4b4b" />
<rect x="1594" y="443" width="1" height="562" fill="#0b4b4b" />
<rect x="1643" y="443" width="1" height="562" fill="#0b4b4b" />
<rect x="1692" y="443" width="1" height="562" fill="#0b4b4b" />
<rect x="1742" y="443" width="1" height="562" fill="#0b4b4b" />
<rect x="1791" y="443" width="1" height="562" fill="#0b4b4b" />
<rect x="1840" y="443" width="1" height="562" fill="#0b4b4b" />
<rect x="1398" y="471" width="491" height="1" fill="#0b4b4b" />
<rect x="1398" y="499" width="491" height="1" fill="#0b4b4b" />
<rect x="1398" y="527" width="491" height="1" fill="#0b4b4b" />
<rect x="1398" y="555" width="491" height="1" fill="#0b4b4b" />
<rect x="1398" y="583" width="491" height="1" fill="#0b4b4b" />
<rect x="1398" y="611" width="491" height="1" fill="#0b4b4b" />
<rect x="1398" y="639" width="491" height="1" fill="#0b4b4b" />
<rect x="1398" y="667" width="491" height="1" fill="#0b4b4b" />
<rect x="1398" y="695" width="491" height="1" fill="#0b4b4b" />
<rect x="1398" y="724" width="491" height="1" fill="#0b4b4b" />
<rect x="1398" y="752" width="491" height="1" fill="#0b4b4b" />
<rect x="1398" y="780" width="491" height="1" fill="#0b4b4b" />
<rect x="1398" y="808" width="491" height="1" fill="#0b4b4b" />
<rect x="1398" y="836" width="491" height="1" fill="#0b4b4b" />
<rect x="1398" y="864" width="491" height="1" fill="#0b4b4b" />
<rect x="1398" y="892" width="491" height="1" fill="#0b4b4b" />
<rect x="1398" y="920" width="491" height="1" fill="#0b4b4b" />
<rect x="1398" y="948" width="491" height="1" fill="#0b4b4b" />
<rect x="1398" y="976" width="491" height="1" fill="#0b4b4b" />
<text x="1604.00" y="457.30" font-family="'Liberation Sans', sans-serif" font-size="14.6" font-weight="bold" fill="#dcdc00" letter-spacing="0.117" >EOTF(Gamma)</text>
<text x="1400.00" y="466.80" font-family="'Liberation Serif', serif" font-size="13.5" fill="#dcdcdc" letter-spacing="0.308" >2.9</text>
<text x="1400.00" y="494.80" font-family="'Liberation Serif', serif" font-size="13.5" fill="#dcdcdc" letter-spacing="0.308" >2.8</text>
<text x="1400.00" y="522.80" font-family="'Liberation Serif', serif" font-size="13.5" fill="#dcdcdc" letter-spacing="0.308" >2.7</text>
<text x="1400.00" y="550.80" font-family="'Liberation Serif', serif" font-size="13.5" fill="#dcdcdc" letter-spacing="0.308" >2.6</text>
<text x="1400.00" y="578.80" font-family="'Liberation Serif', serif" font-size="13.5" fill="#dcdcdc" letter-spacing="0.308" >2.5</text>
<text x="1400.00" y="606.80" font-family="'Liberation Serif', serif" font-size="13.5" fill="#dcdcdc" letter-spacing="0.308" >2.4</text>
<text x="1400.00" y="634.80" font-family="'Liberation Serif', serif" font-size="13.5" fill="#dcdcdc" letter-spacing="0.308" >2.3</text>
<text x="1400.00" y="662.80" font-family="'Liberation Serif', serif" font-size="13.5" fill="#dcdcdc" letter-spacing="0.308" >2.2</text>
<text x="1400.00" y="690.80" font-family="'Liberation Serif', serif" font-size="13.5" fill="#dcdcdc" letter-spacing="0.308" >2.1</text>
<text x="1400.00" y="719.80" font-family="'Liberation Serif', serif" font-size="13.5" fill="#dcdcdc" >2</text>
<text x="1400.00" y="747.80" font-family="'Liberation Serif', serif" font-size="13.5" fill="#dcdcdc" letter-spacing="0.308" >1.9</text>
<text x="1400.00" y="775.80" font-family="'Liberation Serif', serif" font-size="13.5" fill="#dcdcdc" letter-spacing="0.308" >1.8</text>
<text x="1400.00" y="803.80" font-family="'Liberation Serif', serif" font-size="13.5" fill="#dcdcdc" letter-spacing="0.308" >1.7</text>
<text x="1400.00" y="831.80" font-family="'Liberation Serif', serif" font-size="13.5" fill="#dcdcdc" letter-spacing="0.308" >1.6</text>
<text x="1400.00" y="859.80" font-family="'Liberation Serif', serif" font-size="13.5" fill="#dcdcdc" letter-spacing="0.308" >1.5</text>
<text x="1400.00" y="887.80" font-family="'Liberation Serif', serif" font-size="13.5" fill="#dcdcdc" letter-spacing="0.308" >1.4</text>
<text x="1400.00" y="915.80" font-family="'Liberation Serif', serif" font-size="13.5" fill="#dcdcdc" letter-spacing="0.308" >1.3</text>
<text x="1400.00" y="943.80" font-family="'Liberation Serif', serif" font-size="13.5" fill="#dcdcdc" letter-spacing="0.308" >1.2</text>
<text x="1400.00" y="971.80" font-family="'Liberation Serif', serif" font-size="13.5" fill="#dcdcdc" letter-spacing="0.308" >1.1</text>
<g clip-path="url(#g2c)">
<text x="1450.00" y="1000.50" font-family="'Liberation Serif', serif" font-size="13.5" fill="#e6e6e6" letter-spacing="0.126" >10% White</text>
<text x="1548.06" y="1000.50" font-family="'Liberation Serif', serif" font-size="13.5" fill="#a9a9a9" letter-spacing="0.126" >30% White</text>
<text x="1646.12" y="1000.50" font-family="'Liberation Serif', serif" font-size="13.5" fill="#8f8f8f" letter-spacing="0.126" >50% White</text>
<text x="1744.18" y="1000.50" font-family="'Liberation Serif', serif" font-size="13.5" fill="#666666" letter-spacing="0.126" >70% White</text>
<text x="1842.24" y="1000.50" font-family="'Liberation Serif', serif" font-size="13.5" fill="#1a1a1a" letter-spacing="0.126" >90% White</text>
</g>
<text x="1723.00" y="962.60" font-family="'Liberation Sans', sans-serif" font-size="16" font-weight="bold" fill="#9c9c9c" letter-spacing="0.065" >hcfr.sourceforge.net</text>
<g clip-path="url(#g2c)">
<polyline points="1422.2,557.9 1447.2,623.0 1471.2,612.0 1496.2,607.2 1521.2,613.9 1545.2,612.0 1570.2,609.9 1594.2,613.0 1619.2,612.0 1644.2,613.6 1666.2,620.0 1691.2,613.0 1715.2,612.0 1740.2,609.9 1764.2,613.0 1789.2,611.8 1814.2,615.0 1838.2,609.5 1863.2,621.0" fill="none" stroke="#ffff00" stroke-width="2" shape-rendering="geometricPrecision"/>
<rect x="1418" y="554" width="8" height="8" fill="#ffff00" />
<rect x="1443" y="619" width="8" height="8" fill="#ffff00" />
<rect x="1467" y="608" width="8" height="8" fill="#ffff00" />
<rect x="1492" y="603" width="8" height="8" fill="#ffff00" />
<rect x="1517" y="610" width="8" height="8" fill="#ffff00" />
<rect x="1541" y="608" width="8" height="8" fill="#ffff00" />
<rect x="1566" y="606" width="8" height="8" fill="#ffff00" />
<rect x="1590" y="609" width="8" height="8" fill="#ffff00" />
<rect x="1615" y="608" width="8" height="8" fill="#ffff00" />
<rect x="1640" y="610" width="8" height="8" fill="#ffff00" />
<rect x="1662" y="616" width="8" height="8" fill="#ffff00" />
<rect x="1687" y="609" width="8" height="8" fill="#ffff00" />
<rect x="1711" y="608" width="8" height="8" fill="#ffff00" />
<rect x="1736" y="606" width="8" height="8" fill="#ffff00" />
<rect x="1760" y="609" width="8" height="8" fill="#ffff00" />
<rect x="1785" y="608" width="8" height="8" fill="#ffff00" />
<rect x="1810" y="611" width="8" height="8" fill="#ffff00" />
<rect x="1834" y="606" width="8" height="8" fill="#ffff00" />
<rect x="1859" y="617" width="8" height="8" fill="#ffff00" />
</g>
<path d="M1422.2 611.5 H1889" stroke="#ffffff" stroke-width="1" stroke-dasharray="4 4" fill="none"/>
<rect x="1418" y="607" width="8" height="8" fill="#e8e8e8" />
<rect x="1443" y="607" width="8" height="8" fill="#e8e8e8" />
<rect x="1467" y="607" width="8" height="8" fill="#e8e8e8" />
<rect x="1492" y="607" width="8" height="8" fill="#e8e8e8" />
<rect x="1517" y="607" width="8" height="8" fill="#e8e8e8" />
<rect x="1541" y="607" width="8" height="8" fill="#e8e8e8" />
<rect x="1566" y="607" width="8" height="8" fill="#e8e8e8" />
<rect x="1590" y="607" width="8" height="8" fill="#e8e8e8" />
<rect x="1615" y="607" width="8" height="8" fill="#e8e8e8" />
<rect x="1640" y="607" width="8" height="8" fill="#e8e8e8" />
<rect x="1662" y="607" width="8" height="8" fill="#e8e8e8" />
<rect x="1687" y="607" width="8" height="8" fill="#e8e8e8" />
<rect x="1711" y="607" width="8" height="8" fill="#e8e8e8" />
<rect x="1736" y="607" width="8" height="8" fill="#e8e8e8" />
<rect x="1760" y="607" width="8" height="8" fill="#e8e8e8" />
<rect x="1785" y="607" width="8" height="8" fill="#e8e8e8" />
<rect x="1810" y="607" width="8" height="8" fill="#e8e8e8" />
<rect x="1834" y="607" width="8" height="8" fill="#e8e8e8" />
<rect x="1859" y="607" width="8" height="8" fill="#e8e8e8" />
<rect x="2" y="1016" width="1894" height="1" fill="#ffffff" />
<rect x="2" y="1017" width="1896" height="2" fill="#6a6a6a" />
<rect x="2" y="1019" width="1899" height="3" fill="#b9b9b9" />
<rect x="2" y="1022" width="1900" height="1" fill="#ffffff" />
<rect x="2" y="1023" width="1916" height="17" fill="#f0f0f0" />
<rect x="0" y="1040" width="1920" height="2" fill="#ffffff" />
<rect x="0" y="1019" width="1" height="21" fill="#a0a0a0" />
<rect x="1" y="1019" width="1" height="21" fill="#6a6a6a" />
<rect x="19.5" y="1028" width="1824" height="6" rx="3" fill="#8a8a8a" shape-rendering="geometricPrecision"/>
<path d="M6.8 1031 L12.8 1027 V1035 Z" fill="#8a8a8a" shape-rendering="geometricPrecision"/>
<path d="M1896.5 1031 L1890.5 1027 V1035 Z" fill="#8a8a8a" shape-rendering="geometricPrecision"/>
<rect x="0" y="1042" width="1920" height="1" fill="#000" />
<rect x="0" y="1043" width="1920" height="18" fill="#f0f0f0" />
<rect x="0" y="1042" width="55" height="19" fill="#000" />
<rect x="1" y="1043" width="16" height="17" fill="#6d6d6d" />
<rect x="1" y="1043" width="15" height="16" fill="#ffffff" />
<rect x="2" y="1044" width="14" height="15" fill="#a0a0a0" />
<rect x="2" y="1044" width="13" height="14" fill="#f0f0f0" />
<path d="M4.5 1048.0 L12.5 1055.0 M12.5 1048.0 L4.5 1055.0" stroke="#000" stroke-width="1.3" fill="none" shape-rendering="geometricPrecision"/>
<rect x="18" y="1043" width="17" height="17" fill="#6d6d6d" />
<rect x="18" y="1043" width="16" height="16" fill="#ffffff" />
<rect x="19" y="1044" width="15" height="15" fill="#a0a0a0" />
<rect x="19" y="1044" width="14" height="14" fill="#f0f0f0" />
<path d="M28.0 1047.5 L23.5 1051.5 L28.0 1055.5 Z" fill="#000" shape-rendering="geometricPrecision"/>
<rect x="36" y="1043" width="17" height="17" fill="#6d6d6d" />
<rect x="36" y="1043" width="16" height="16" fill="#ffffff" />
<rect x="37" y="1044" width="15" height="15" fill="#a0a0a0" />
<rect x="37" y="1044" width="14" height="14" fill="#f0f0f0" />
<path d="M42.0 1047.5 L46.5 1051.5 L42.0 1055.5 Z" fill="#000" shape-rendering="geometricPrecision"/>
<polygon points="116,1042.5 205.8,1042.5 197.1,1060.5 126.8,1060.5" fill="#f0f0f0" shape-rendering="geometricPrecision"/>
<path d="M116 1042.5 L126.8 1060.5 H197.1 L205.8 1042.5" fill="none" stroke="#000" stroke-width="1.1" shape-rendering="geometricPrecision"/>
<text x="0.00" y="0.00" font-family="'Liberation Sans', sans-serif" font-size="8.7" fill="#000"  transform="translate(135.00,1055.00) scale(1.0844,1)">CIE Diagram</text>
<polygon points="197.1,1042.5 310.9,1042.5 302.2,1060.5 204.8,1060.5" fill="#f0f0f0" shape-rendering="geometricPrecision"/>
<path d="M197.1 1042.5 L204.8 1060.5 H302.2 L310.9 1042.5" fill="none" stroke="#000" stroke-width="1.1" shape-rendering="geometricPrecision"/>
<text x="0.00" y="0.00" font-family="'Liberation Sans', sans-serif" font-size="8.7" fill="#000"  transform="translate(216.20,1055.00) scale(1.0625,1)">Color temperature</text>
<polygon points="301.8,1042.5 384.9,1042.5 376.2,1060.5 309.8,1060.5" fill="#f0f0f0" shape-rendering="geometricPrecision"/>
<path d="M301.8 1042.5 L309.8 1060.5 H376.2 L384.9 1042.5" fill="none" stroke="#000" stroke-width="1.1" shape-rendering="geometricPrecision"/>
<text x="0.00" y="0.00" font-family="'Liberation Sans', sans-serif" font-size="8.7" fill="#000"  transform="translate(318.40,1055.00) scale(1.0836,1)">RGB Levels</text>
<polygon points="55,1042.5 128.2,1042.5 119.5,1060.5 63,1060.5" fill="#ffffff" shape-rendering="geometricPrecision"/>
<path d="M55 1042.5 L63 1060.5 M119.5 1060.5 L128.2 1042.5" fill="none" stroke="#000" stroke-width="1.1" shape-rendering="geometricPrecision"/>
<text x="0.00" y="0.00" font-family="'Liberation Sans', sans-serif" font-size="8.7" font-weight="bold" fill="#000"  transform="translate(66.50,1055.00) scale(1.2531,1)">Measures</text>
<rect x="56" y="1042" width="72" height="1" fill="#ffffff" />
<g transform="translate(1751,1044)" shape-rendering="geometricPrecision">
<path d="M0.5 0.5 H13.5 V9 L12 13.5 H9 L8 11 H6 L5 13.5 H2.5 L0.5 9 Z" fill="#808000" stroke="#000" stroke-width="1"/>
<rect x="2" y="2" width="8" height="6" fill="#ff1020"/>
<path d="M3 4 Q5 2.5 7.5 4 L7.5 2.8 L9.5 5 L7 6.8 L7.2 5.4 Q5 4.3 3.5 5.5 Z" fill="#fff"/>
<rect x="8.5" y="9" width="5" height="4.5" fill="#ffff00" stroke="#000" stroke-width="0.6"/>
</g>
<rect x="1846" y="1044" width="13" height="13" fill="#ffffff" />
<rect x="1846" y="1044" width="12" height="12" fill="#6a6a6a" />
<rect x="1847" y="1045" width="11" height="11" fill="#e3e3e3" />
<rect x="1847" y="1045" width="10" height="10" fill="#a0a0a0" />
<rect x="1848" y="1046" width="10" height="10" fill="#fff" />
<text x="1865.00" y="1054.70" font-family="'Liberation Sans', sans-serif" font-size="11" fill="#000" letter-spacing="-0.050" >Reference</text>
<g shape-rendering="geometricPrecision">
<defs>
<linearGradient id="docg" x1="0" y1="0" x2="1" y2="1"><stop offset="0" stop-color="#f6f8ff"/><stop offset="0.5" stop-color="#d4defa"/><stop offset="1" stop-color="#b6c8f2"/></linearGradient>
<linearGradient id="foldg" x1="0" y1="0" x2="0.6" y2="1"><stop offset="0" stop-color="#fff6b0"/><stop offset="0.6" stop-color="#fcd44a"/><stop offset="1" stop-color="#e8a818"/></linearGradient>
<linearGradient id="greyg" x1="0" y1="0" x2="1" y2="1"><stop offset="0" stop-color="#f4f4f4"/><stop offset="1" stop-color="#d0d0d0"/></linearGradient>
<linearGradient id="monside" x1="0" y1="0" x2="1" y2="0"><stop offset="0" stop-color="#8fb2dc"/><stop offset="0.45" stop-color="#4a5866"/><stop offset="1" stop-color="#2a3038"/></linearGradient>
<linearGradient id="monbez" x1="0" y1="0" x2="1" y2="0.2"><stop offset="0" stop-color="#e8eef6"/><stop offset="0.5" stop-color="#9db8d8"/><stop offset="1" stop-color="#4f7eb8"/></linearGradient>
<linearGradient id="cieg" x1="0" y1="0" x2="0" y2="1"><stop offset="0" stop-color="#20e000"/><stop offset="0.45" stop-color="#30d8a0"/><stop offset="0.8" stop-color="#1030ff"/><stop offset="1" stop-color="#2000c0"/></linearGradient>
<linearGradient id="cieg2" x1="0" y1="0" x2="1" y2="0.35"><stop offset="0" stop-color="#00ff00" stop-opacity="0"/><stop offset="0.45" stop-color="#f0f040" stop-opacity="0.55"/><stop offset="0.8" stop-color="#ff1010" stop-opacity="0.95"/><stop offset="1" stop-color="#ff0000"/></linearGradient>
<radialGradient id="ciew"><stop offset="0" stop-color="#fff"/><stop offset="1" stop-color="#fff" stop-opacity="0"/></radialGradient>
<linearGradient id="playg" x1="0" y1="0" x2="0.3" y2="1"><stop offset="0" stop-color="#8ee08e"/><stop offset="0.6" stop-color="#46d24a"/><stop offset="1" stop-color="#20c028"/></linearGradient>
<radialGradient id="helpg" cx="0.4" cy="0.3" r="0.8"><stop offset="0" stop-color="#6a9cec"/><stop offset="0.5" stop-color="#2c66cc"/><stop offset="1" stop-color="#1a48a4"/></radialGradient>
<linearGradient id="camg" x1="0" y1="0" x2="1" y2="1"><stop offset="0" stop-color="#fdfdfd"/><stop offset="0.6" stop-color="#d4d4d4"/><stop offset="1" stop-color="#9a9a9a"/></linearGradient>
<linearGradient id="printg" x1="0" y1="0" x2="0" y2="1"><stop offset="0" stop-color="#a8c6f4"/><stop offset="1" stop-color="#4c80d4"/></linearGradient>
<radialGradient id="bw" cx="0.38" cy="0.3" r="0.75"><stop offset="0" stop-color="#ffffff"/><stop offset="0.25" stop-color="#f0f0f0"/><stop offset="1" stop-color="#9a9a9a"/></radialGradient>
<radialGradient id="blg" cx="0.38" cy="0.3" r="0.75"><stop offset="0" stop-color="#ffffff"/><stop offset="0.25" stop-color="#d8d8d8"/><stop offset="1" stop-color="#7a7a7a"/></radialGradient>
<radialGradient id="bg" cx="0.38" cy="0.3" r="0.75"><stop offset="0" stop-color="#f0f0f0"/><stop offset="0.25" stop-color="#a0a0a0"/><stop offset="1" stop-color="#505050"/></radialGradient>
<radialGradient id="bdg" cx="0.38" cy="0.3" r="0.75"><stop offset="0" stop-color="#d0d0d0"/><stop offset="0.25" stop-color="#707070"/><stop offset="1" stop-color="#303030"/></radialGradient>
<radialGradient id="bk" cx="0.38" cy="0.3" r="0.75"><stop offset="0" stop-color="#a0a0a0"/><stop offset="0.25" stop-color="#484848"/><stop offset="1" stop-color="#1a1a1a"/></radialGradient>
<radialGradient id="br" cx="0.38" cy="0.3" r="0.75"><stop offset="0" stop-color="#ff9090"/><stop offset="0.25" stop-color="#e00028"/><stop offset="1" stop-color="#b00020"/></radialGradient>
<radialGradient id="bgr" cx="0.38" cy="0.3" r="0.75"><stop offset="0" stop-color="#b0ff90"/><stop offset="0.25" stop-color="#40d400"/><stop offset="1" stop-color="#2cb000"/></radialGradient>
<radialGradient id="bb" cx="0.38" cy="0.3" r="0.75"><stop offset="0" stop-color="#8080ff"/><stop offset="0.25" stop-color="#0000d8"/><stop offset="1" stop-color="#0000a0"/></radialGradient>
<radialGradient id="br2" cx="0.38" cy="0.3" r="0.75"><stop offset="0" stop-color="#ffb0b0"/><stop offset="0.25" stop-color="#f03030"/><stop offset="1" stop-color="#900000"/></radialGradient>
<radialGradient id="bb2" cx="0.38" cy="0.3" r="0.75"><stop offset="0" stop-color="#a0c8ff"/><stop offset="0.25" stop-color="#2060d8"/><stop offset="1" stop-color="#0030a0"/></radialGradient>
<radialGradient id="bg2" cx="0.38" cy="0.3" r="0.75"><stop offset="0" stop-color="#b0ffb0"/><stop offset="0.25" stop-color="#20d030"/><stop offset="1" stop-color="#108018"/></radialGradient>
<radialGradient id="bc" cx="0.38" cy="0.3" r="0.75"><stop offset="0" stop-color="#d0ffff"/><stop offset="0.25" stop-color="#30e0e0"/><stop offset="1" stop-color="#10a0a8"/></radialGradient>
<radialGradient id="bp" cx="0.38" cy="0.3" r="0.75"><stop offset="0" stop-color="#f0c0ff"/><stop offset="0.25" stop-color="#b050e0"/><stop offset="1" stop-color="#7020a8"/></radialGradient>
<radialGradient id="by" cx="0.38" cy="0.3" r="0.75"><stop offset="0" stop-color="#ffffc0"/><stop offset="0.25" stop-color="#f0e020"/><stop offset="1" stop-color="#c0a000"/></radialGradient>
</defs>
<path d="M19.5 57.5 H31.5 L36.5 62.5 V79.5 H19.5 Z" fill="url(#docg)" stroke="#5c78c4" stroke-width="1"/>
<path d="M31.5 57.5 V62.5 H36.5 Z" fill="#e4ecff" stroke="#5c78c4" stroke-width="0.8"/>
<path d="M56 62.5 Q56 61 57.5 60.8 L63 60 L65 62 L73 61 Q74 61 74 62.2 V66 L56.5 79.5 Z" fill="#f0c030" stroke="#c89010" stroke-width="0.7"/>
<path d="M56.5 79.5 L59.5 67.5 Q60 66.2 61.2 66 L67 64.8 L69.5 66.6 L78 65.2 Q78.8 65.2 78.4 66.2 L73.5 76.5 Q73 77.6 72 77.8 Z" fill="url(#foldg)" stroke="#d09810" stroke-width="0.7"/>
<path d="M65 60.2 Q71.5 57.6 74 64.4 L76.6 63.8 L72.6 70.4 L67.4 66.2 L70.2 65.4 Q68.8 61.4 65 60.2 Z" fill="#48c040" stroke="#289028" stroke-width="0.6"/>
<path d="M96.5 60.2 Q96.5 59 97.8 59 H115 Q116.5 59 116.5 60.4 V79.6 Q116.5 80.8 115.2 80.8 H98.2 L96.5 79.2 Z" fill="#5a5abf" stroke="#4040a0" stroke-width="0.6"/>
<rect x="99.5" y="59.3" width="13.6" height="10.2" fill="#f4f4f4"/><path d="M101 62 H112 M101 64 H112 M101 66 H112" stroke="#c0c0c0" stroke-width="0.8"/>
<rect x="102" y="73.2" width="9.4" height="7.4" fill="#e8e8e8"/><path d="M103.4 74 H107.4 V79.4 H103.4 Z" fill="#4a4aa8"/><path d="M105 79.4 L109.6 74.4 V79.4 Z" fill="#b4b4c0"/>
<rect x="129" y="53" width="1" height="32" fill="#b4bccb" />
<rect x="130" y="53" width="1" height="33" fill="#ffffff" />
<g stroke="#a9a9a9" fill="none" stroke-width="1.2"><path d="M145.6 59.6 L154.6 75"/><path d="M156.4 59.6 L147.4 75"/><ellipse cx="146.4" cy="77" rx="2.8" ry="3.2" stroke-width="1.7"/><ellipse cx="155.6" cy="77" rx="2.8" ry="3.2" stroke-width="1.7"/></g>
<path d="M145.2 59.2 L147.2 59.4 L151.8 69 L150.6 70.6 Z M156.8 59.2 L154.8 59.4 L150.2 69 L151.4 70.6 Z" fill="#bdbdbd"/>
<path d="M179.5 58.5 H188.5 L192.5 62.5 V74.5 H179.5 Z" fill="url(#docg)" stroke="#6464b4" stroke-width="1"/>
<path d="M188.5 58.5 V62.5 H192.5 Z" fill="#eef2ff" stroke="#6464b4" stroke-width="0.7"/>
<path d="M186.5 64.5 H195.5 L199.5 68.5 V80.5 H186.5 Z" fill="url(#docg)" stroke="#6464b4" stroke-width="1"/>
<path d="M195.5 64.5 V68.5 H199.5 Z" fill="#eef2ff" stroke="#6464b4" stroke-width="0.7"/>
<path d="M218.8 61.5 Q218.8 60 220.4 60 H233 Q234.6 60 234.6 61.5 V77.5 Q234.6 79 233 79 H220.4 Q218.8 79 218.8 77.5 Z" fill="#dcdcdc" stroke="#cfcfcf" stroke-width="0.8"/>
<path d="M222.5 60.5 Q222.5 58.4 224.5 58.4 H229 Q231 58.4 231 60.5 V61.6 H222.5 Z" fill="#e6e6e6" stroke="#cfcfcf" stroke-width="0.6"/>
<path d="M225 66 H233.6 L237.4 69.8 V81.4 H225 Z" fill="url(#greyg)" stroke="#d2d2d2" stroke-width="0.8"/>
<rect x="252" y="53" width="1" height="32" fill="#b4bccb" />
<rect x="253" y="53" width="1" height="33" fill="#ffffff" />
<path d="M266.8 67 L268.4 59.6 L274.6 59 L276.4 66 Z" fill="#ffffff" stroke="#7c9cd8" stroke-width="0.7"/>
<path d="M262.6 71 Q262.6 66 269 66 H279 Q285 66.4 284.8 72 L284 75.6 Q283.4 77.2 281.4 77 L266 77.4 Q263 77 262.6 74 Z" fill="url(#printg)" stroke="#3c6cc0" stroke-width="0.6"/>
<path d="M268 68.2 L274 66.4 L279.4 70.2 L278.8 73.2 L272.6 75.2 Z" fill="#e8e8e8" stroke="#8a8a8a" stroke-width="0.5"/><path d="M271.4 68.8 L276 67.6 L277.4 69.6 L272.8 71 Z" fill="#202020"/>
<path d="M271.6 76.4 L279.4 75 L284.4 78.6 L275.6 80.8 Z" fill="#f4f8ff" stroke="#58b0e8" stroke-width="0.7"/>
<rect x="297" y="53" width="1" height="32" fill="#b4bccb" />
<rect x="298" y="53" width="1" height="33" fill="#ffffff" />
<circle cx="321" cy="70.6" r="11.4" fill="url(#helpg)" stroke="#1c48a0" stroke-width="0.8"/><circle cx="321" cy="70.6" r="10.4" fill="none" stroke="#b8d0f8" stroke-width="0.9"/>
<path d="M316.6 66.8 Q316.8 62.6 321.2 62.6 Q325.8 62.8 325.8 66.8 Q325.8 69.4 323.4 70.8 Q322.4 71.6 322.4 73.4 H319.6 Q319.4 70.6 321.2 69.4 Q322.8 68.2 322.8 66.8 Q322.6 65.2 321.2 65.2 Q319.6 65.2 319.4 67 Z" fill="#fff"/><circle cx="321" cy="76.8" r="1.7" fill="#fff"/>
<circle cx="369.2" cy="57.4" r="4.3" fill="url(#bw)"/>
<circle cx="363" cy="62.2" r="4.7" fill="url(#bw)"/>
<circle cx="363" cy="69.6" r="5" fill="url(#blg)"/>
<circle cx="370" cy="71.4" r="5.6" fill="url(#bg)"/>
<circle cx="376.5" cy="75" r="6.2" fill="url(#bdg)"/>
<circle cx="382.8" cy="76.6" r="7.2" fill="url(#bk)"/>
<circle cx="413.3" cy="60.6" r="7.7" fill="url(#br)"/>
<circle cx="404.7" cy="77.1" r="7.7" fill="url(#bgr)"/>
<circle cx="421.3" cy="77.1" r="7.7" fill="url(#bb)"/>
<circle cx="443.1" cy="76.5" r="7.3" fill="url(#br2)"/>
<circle cx="451" cy="75.6" r="7.2" fill="url(#bb2)"/>
<circle cx="456.7" cy="57.2" r="4.4" fill="url(#by)"/>
<circle cx="463" cy="62.5" r="4.8" fill="url(#bp)"/>
<circle cx="463.2" cy="70.2" r="4.8" fill="url(#bc)"/>
<circle cx="456.7" cy="71.3" r="5.8" fill="url(#bg2)"/>
<circle cx="500.3" cy="78.3" r="6.5" fill="url(#bdg)"/>
<circle cx="481.5" cy="78.3" r="6.5" fill="url(#br2)"/>
<circle cx="489" cy="79" r="5.8" fill="url(#bb2)"/>
<circle cx="480.1" cy="60.6" r="4" fill="url(#bg)"/>
<circle cx="486.4" cy="56.9" r="3.9" fill="url(#bw)"/>
<circle cx="495.6" cy="56.9" r="3.9" fill="url(#by)"/>
<circle cx="501.7" cy="60.6" r="4" fill="url(#bp)"/>
<circle cx="502.6" cy="66.6" r="4.6" fill="url(#bc)"/>
<circle cx="479.6" cy="66.3" r="4.8" fill="url(#blg)"/>
<circle cx="496.7" cy="72.2" r="5.3" fill="url(#bg2)"/>
<circle cx="485" cy="71.9" r="5.6" fill="url(#blg)"/>
<rect x="513" y="53" width="1" height="32" fill="#b4bccb" />
<rect x="514" y="53" width="1" height="33" fill="#ffffff" />
<path d="M520.4 62.6 L532.4 56.2 L546 54.6 Q551.4 55 551.4 59 V74 L533 83.6 Q530.6 84.2 529 82.4 L521 75.6 Z" fill="url(#camg)" stroke="#5a5a5a" stroke-width="0.8"/>
<path d="M520.4 62.6 L529.6 66.6 L529.4 82.4 L521 75.6 Z" fill="#e8e8e8" stroke="#6a6a6a" stroke-width="0.6"/><path d="M523.2 66.2 V76 M525.8 67.6 V78.4" stroke="#b0b0b0" stroke-width="0.8"/>
<path d="M527 61 L531 59 L534 60 L530 62.4 Z" fill="#c8c8c8" stroke="#808080" stroke-width="0.4"/>
<ellipse cx="541.8" cy="69" rx="6.2" ry="6.8" fill="#9a9a9a" stroke="#4a4a4a" stroke-width="0.8"/><ellipse cx="541.8" cy="69" rx="4.4" ry="4.9" fill="#3a3a3a"/><ellipse cx="541.8" cy="69" rx="2.6" ry="2.9" fill="#1a1a28"/><circle cx="541.8" cy="69.2" r="1.5" fill="#2080f0"/>
<path d="M564.6 55 L588 65.8 L588 68 L565.4 81.2 Q564.4 81.4 564.4 80 Z" fill="url(#playg)" stroke="#30b838" stroke-width="0.6"/>
<path d="M565.2 78 L588 65.8 L588 68 L565.4 81.2 Z" fill="#2cc034"/>
<rect x="610.5" y="50.5" width="38" height="38" fill="#ffefc9" stroke="#000080" stroke-width="1" shape-rendering="crispEdges"/>
<g transform="translate(613,53)">
<path d="M27.6 0.6 L30.6 0.2 Q32 0.4 32 2 V25.8 Q32 27.4 30.5 27.6 L27.6 28 Z" fill="url(#monside)"/>
<path d="M1.6 21.6 L27.8 20.2 V28 H2 Q0.2 28 0.2 26.4 Z" fill="url(#monbez)" stroke="#4b5866" stroke-width="0.7"/>
<path d="M2.4 7 L27.8 0.6 V21.2 L1.2 22.8 L1 13 Z" fill="#ffffff" stroke="#414f5e" stroke-width="1.1" stroke-linejoin="round"/>
<rect x="2.2" y="25" width="3.4" height="1.2" fill="#5c6670"/><rect x="22.2" y="25.1" width="4.4" height="1.3" fill="#6c7680"/><rect x="13.2" y="25.2" width="1.3" height="1" fill="#8ea4c0"/>
<path d="M12.4 28.2 H22 L22.4 30 H12 Z" fill="#3e4852"/><path d="M11.8 30 H22.6 L24.2 31.8 H4 Z" fill="#38424c"/>
<path d="M4 6.8 L25.5 2.6 V20 L4 21 Z" fill="#ffe9b8"/>
<path d="M4 11.0 L25.5 8.3" stroke="#fff" stroke-width="0.9" fill="none" stroke-linejoin="round" stroke-linecap="round"/>
<path d="M4 14.0 L25.5 11.3" stroke="#fff" stroke-width="0.9" fill="none" stroke-linejoin="round" stroke-linecap="round"/>
<path d="M4 17.0 L25.5 14.3" stroke="#fff" stroke-width="0.9" fill="none" stroke-linejoin="round" stroke-linecap="round"/>
<path d="M4 19.8 L25.5 17.1" stroke="#fff" stroke-width="0.9" fill="none" stroke-linejoin="round" stroke-linecap="round"/>
<path d="M10.5 5.6 V20.6" stroke="#fff" stroke-width="0.9" fill="none" stroke-linejoin="round" stroke-linecap="round"/>
<path d="M16 5.6 V20.6" stroke="#fff" stroke-width="0.9" fill="none" stroke-linejoin="round" stroke-linecap="round"/>
<path d="M21 5.6 V20.6" stroke="#fff" stroke-width="0.9" fill="none" stroke-linejoin="round" stroke-linecap="round"/>
<rect x="6" y="10" width="2.6" height="1.1" fill="#e8c060"/>
<rect x="11.5" y="8.7" width="2.6" height="1.1" fill="#e8c060"/>
<rect x="17" y="7.4" width="2.6" height="1.1" fill="#e8c060"/>
<rect x="22" y="6.3" width="2.6" height="1.1" fill="#e8c060"/>
<rect x="6" y="13" width="2.6" height="1.1" fill="#e8c060"/>
<rect x="6" y="16" width="2.6" height="1.1" fill="#e8c060"/>
</g>
<g transform="translate(658,53)">
<path d="M27.6 0.6 L30.6 0.2 Q32 0.4 32 2 V25.8 Q32 27.4 30.5 27.6 L27.6 28 Z" fill="url(#monside)"/>
<path d="M1.6 21.6 L27.8 20.2 V28 H2 Q0.2 28 0.2 26.4 Z" fill="url(#monbez)" stroke="#4b5866" stroke-width="0.7"/>
<path d="M2.4 7 L27.8 0.6 V21.2 L1.2 22.8 L1 13 Z" fill="#ffffff" stroke="#414f5e" stroke-width="1.1" stroke-linejoin="round"/>
<rect x="2.2" y="25" width="3.4" height="1.2" fill="#5c6670"/><rect x="22.2" y="25.1" width="4.4" height="1.3" fill="#6c7680"/><rect x="13.2" y="25.2" width="1.3" height="1" fill="#8ea4c0"/>
<path d="M12.4 28.2 H22 L22.4 30 H12 Z" fill="#3e4852"/><path d="M11.8 30 H22.6 L24.2 31.8 H4 Z" fill="#38424c"/>
<path d="M4.2 21.6 Q10.8 19.8 17.3 16.2 Q23.5 11.5 25.6 5.2" stroke="#d6d600" stroke-width="1.5" fill="none" stroke-linejoin="round" stroke-linecap="round"/>
</g>
<g transform="translate(697,53)">
<path d="M27.6 0.6 L30.6 0.2 Q32 0.4 32 2 V25.8 Q32 27.4 30.5 27.6 L27.6 28 Z" fill="url(#monside)"/>
<path d="M1.6 21.6 L27.8 20.2 V28 H2 Q0.2 28 0.2 26.4 Z" fill="url(#monbez)" stroke="#4b5866" stroke-width="0.7"/>
<path d="M2.4 7 L27.8 0.6 V21.2 L1.2 22.8 L1 13 Z" fill="#ffffff" stroke="#414f5e" stroke-width="1.1" stroke-linejoin="round"/>
<rect x="2.2" y="25" width="3.4" height="1.2" fill="#5c6670"/><rect x="22.2" y="25.1" width="4.4" height="1.3" fill="#6c7680"/><rect x="13.2" y="25.2" width="1.3" height="1" fill="#8ea4c0"/>
<path d="M12.4 28.2 H22 L22.4 30 H12 Z" fill="#3e4852"/><path d="M11.8 30 H22.6 L24.2 31.8 H4 Z" fill="#38424c"/>
<path d="M8.2 15.5 Q10.5 13.2 12.4 13.3 Q14.6 14.8 16.6 16.8 Q19.5 16.6 23.2 13.4" stroke="#d6d600" stroke-width="1.5" fill="none" stroke-linejoin="round" stroke-linecap="round"/>
</g>
<rect x="733.5" y="50.5" width="38" height="38" fill="#ffefc9" stroke="#000080" stroke-width="1" shape-rendering="crispEdges"/>
<g transform="translate(736,53)">
<path d="M27.6 0.6 L30.6 0.2 Q32 0.4 32 2 V25.8 Q32 27.4 30.5 27.6 L27.6 28 Z" fill="url(#monside)"/>
<path d="M1.6 21.6 L27.8 20.2 V28 H2 Q0.2 28 0.2 26.4 Z" fill="url(#monbez)" stroke="#4b5866" stroke-width="0.7"/>
<path d="M2.4 7 L27.8 0.6 V21.2 L1.2 22.8 L1 13 Z" fill="#ffffff" stroke="#414f5e" stroke-width="1.1" stroke-linejoin="round"/>
<rect x="2.2" y="25" width="3.4" height="1.2" fill="#5c6670"/><rect x="22.2" y="25.1" width="4.4" height="1.3" fill="#6c7680"/><rect x="13.2" y="25.2" width="1.3" height="1" fill="#8ea4c0"/>
<path d="M12.4 28.2 H22 L22.4 30 H12 Z" fill="#3e4852"/><path d="M11.8 30 H22.6 L24.2 31.8 H4 Z" fill="#38424c"/>
<path d="M3 20 L6 15 L8.5 17.5 L12 13.5 L15 17 L18.5 15 L22 17 L25.5 15.8" stroke="#0e8e10" stroke-width="2.4" fill="none" stroke-linejoin="round" stroke-linecap="round"/>
<path d="M5 13 L9 17.5 L12 19 L15.5 16.5 L19 19 L23.5 24" stroke="#1030b0" stroke-width="2.2" fill="none" stroke-linejoin="round" stroke-linecap="round" clip-path="none"/>
<path d="M6.5 14 L9.5 10.5 L12 15 L16 8.5 L19.5 13.5 L22 14.5 L25.5 12" stroke="#e05424" stroke-width="2.2" fill="none" stroke-linejoin="round" stroke-linecap="round"/>
</g>
<rect x="772.5" y="50.5" width="38" height="38" fill="#ffefc9" stroke="#000080" stroke-width="1" shape-rendering="crispEdges"/>
<g transform="translate(775,53)">
<path d="M27.6 0.6 L30.6 0.2 Q32 0.4 32 2 V25.8 Q32 27.4 30.5 27.6 L27.6 28 Z" fill="url(#monside)"/>
<path d="M1.6 21.6 L27.8 20.2 V28 H2 Q0.2 28 0.2 26.4 Z" fill="url(#monbez)" stroke="#4b5866" stroke-width="0.7"/>
<path d="M2.4 7 L27.8 0.6 V21.2 L1.2 22.8 L1 13 Z" fill="#ffffff" stroke="#414f5e" stroke-width="1.1" stroke-linejoin="round"/>
<rect x="2.2" y="25" width="3.4" height="1.2" fill="#5c6670"/><rect x="22.2" y="25.1" width="4.4" height="1.3" fill="#6c7680"/><rect x="13.2" y="25.2" width="1.3" height="1" fill="#8ea4c0"/>
<path d="M12.4 28.2 H22 L22.4 30 H12 Z" fill="#3e4852"/><path d="M11.8 30 H22.6 L24.2 31.8 H4 Z" fill="#38424c"/>
<path d="M4.2 9 V21.5 H26" stroke="#d0d0d0" stroke-width="0.7" fill="none"/><path d="M25.3 6 V21" stroke="#9fd09f" stroke-width="0.7" stroke-dasharray="1 1" fill="none"/>
<path d="M5.2 11.2 L8.5 15.5 L12.4 18 L18.5 13 L24.5 12.2" stroke="#6f6fe6" stroke-width="1" fill="none" stroke-linejoin="round" stroke-linecap="round"/>
</g>
<rect x="817.5" y="50.5" width="38" height="38" fill="#ffefc9" stroke="#000080" stroke-width="1" shape-rendering="crispEdges"/>
<g transform="translate(820,53)">
<path d="M27.6 0.6 L30.6 0.2 Q32 0.4 32 2 V25.8 Q32 27.4 30.5 27.6 L27.6 28 Z" fill="url(#monside)"/>
<path d="M1.6 21.6 L27.8 20.2 V28 H2 Q0.2 28 0.2 26.4 Z" fill="url(#monbez)" stroke="#4b5866" stroke-width="0.7"/>
<path d="M2.4 7 L27.8 0.6 V21.2 L1.2 22.8 L1 13 Z" fill="#ffffff" stroke="#414f5e" stroke-width="1.1" stroke-linejoin="round"/>
<rect x="2.2" y="25" width="3.4" height="1.2" fill="#5c6670"/><rect x="22.2" y="25.1" width="4.4" height="1.3" fill="#6c7680"/><rect x="13.2" y="25.2" width="1.3" height="1" fill="#8ea4c0"/>
<path d="M12.4 28.2 H22 L22.4 30 H12 Z" fill="#3e4852"/><path d="M11.8 30 H22.6 L24.2 31.8 H4 Z" fill="#38424c"/>
<path d="M9.6 7.2 Q10.4 6.6 11.4 7.4 L23.2 18.8 L12.6 24.2 Q11.2 24.6 10.8 23 Z" fill="url(#cieg)"/>
<path d="M9.6 7.2 Q10.4 6.6 11.4 7.4 L23.2 18.8 L12.6 24.2 Q11.2 24.6 10.8 23 Z" fill="url(#cieg2)"/>
<circle cx="15.5" cy="17.5" r="3.6" fill="url(#ciew)"/>
</g>
<g transform="translate(865,53)">
<path d="M27.6 0.6 L30.6 0.2 Q32 0.4 32 2 V25.8 Q32 27.4 30.5 27.6 L27.6 28 Z" fill="url(#monside)"/>
<path d="M1.6 21.6 L27.8 20.2 V28 H2 Q0.2 28 0.2 26.4 Z" fill="url(#monbez)" stroke="#4b5866" stroke-width="0.7"/>
<path d="M2.4 7 L27.8 0.6 V21.2 L1.2 22.8 L1 13 Z" fill="#ffffff" stroke="#414f5e" stroke-width="1.1" stroke-linejoin="round"/>
<rect x="2.2" y="25" width="3.4" height="1.2" fill="#5c6670"/><rect x="22.2" y="25.1" width="4.4" height="1.3" fill="#6c7680"/><rect x="13.2" y="25.2" width="1.3" height="1" fill="#8ea4c0"/>
<path d="M12.4 28.2 H22 L22.4 30 H12 Z" fill="#3e4852"/><path d="M11.8 30 H22.6 L24.2 31.8 H4 Z" fill="#38424c"/>
<path d="M4.2 22.6 L9 22 L12 20.8 L17 19.8 L21 18.6 L25.6 17.6" stroke="#d6d600" stroke-width="1.4" fill="none" stroke-linejoin="round" stroke-linecap="round"/>
</g>
<g transform="translate(904,53)">
<path d="M27.6 0.6 L30.6 0.2 Q32 0.4 32 2 V25.8 Q32 27.4 30.5 27.6 L27.6 28 Z" fill="url(#monside)"/>
<path d="M1.6 21.6 L27.8 20.2 V28 H2 Q0.2 28 0.2 26.4 Z" fill="url(#monbez)" stroke="#4b5866" stroke-width="0.7"/>
<path d="M2.4 7 L27.8 0.6 V21.2 L1.2 22.8 L1 13 Z" fill="#ffffff" stroke="#414f5e" stroke-width="1.1" stroke-linejoin="round"/>
<rect x="2.2" y="25" width="3.4" height="1.2" fill="#5c6670"/><rect x="22.2" y="25.1" width="4.4" height="1.3" fill="#6c7680"/><rect x="13.2" y="25.2" width="1.3" height="1" fill="#8ea4c0"/>
<path d="M12.4 28.2 H22 L22.4 30 H12 Z" fill="#3e4852"/><path d="M11.8 30 H22.6 L24.2 31.8 H4 Z" fill="#38424c"/>
<path d="M4.6 14.8 L9 12.8 L14 10.2 L19 8 L25 4.6" stroke="#d6d600" stroke-width="1.4" fill="none" stroke-linejoin="round" stroke-linecap="round"/>
</g>
<g transform="translate(949,53)">
<path d="M27.6 0.6 L30.6 0.2 Q32 0.4 32 2 V25.8 Q32 27.4 30.5 27.6 L27.6 28 Z" fill="url(#monside)"/>
<path d="M1.6 21.6 L27.8 20.2 V28 H2 Q0.2 28 0.2 26.4 Z" fill="url(#monbez)" stroke="#4b5866" stroke-width="0.7"/>
<path d="M2.4 7 L27.8 0.6 V21.2 L1.2 22.8 L1 13 Z" fill="#ffffff" stroke="#414f5e" stroke-width="1.1" stroke-linejoin="round"/>
<rect x="2.2" y="25" width="3.4" height="1.2" fill="#5c6670"/><rect x="22.2" y="25.1" width="4.4" height="1.3" fill="#6c7680"/><rect x="13.2" y="25.2" width="1.3" height="1" fill="#8ea4c0"/>
<path d="M12.4 28.2 H22 L22.4 30 H12 Z" fill="#3e4852"/><path d="M11.8 30 H22.6 L24.2 31.8 H4 Z" fill="#38424c"/>
<path d="M3.6 10.6 H9 L10 9.7 H14 L15.5 8.0 H20 L21.5 6.5 H26" stroke="#d8d000" stroke-width="1.3" fill="none" stroke-linejoin="round" stroke-linecap="round"/>
<path d="M3.6 11.8 H9 L10 10.9 H14 L15.5 9.7 H20 L21.5 8.7 H26" stroke="#00ffff" stroke-width="1.3" fill="none" stroke-linejoin="round" stroke-linecap="round"/>
<path d="M3.6 14.6 H9 L10 13.7 H14 L15.5 12.599999999999998 H20 L21.5 11.7 H26" stroke="#00ff00" stroke-width="1.3" fill="none" stroke-linejoin="round" stroke-linecap="round"/>
<path d="M3.6 18.6 H9 L10 17.700000000000003 H14 L15.5 16.599999999999998 H20 L21.5 15.7 H26" stroke="#ff00ff" stroke-width="1.3" fill="none" stroke-linejoin="round" stroke-linecap="round"/>
<path d="M3.6 20.6 H9 L10 19.700000000000003 H14 L15.5 18.8 H20 L21.5 18.1 H26" stroke="#ff0000" stroke-width="1.3" fill="none" stroke-linejoin="round" stroke-linecap="round"/>
<path d="M3.6 22.4 H9 L10 21.5 H14 L15.5 20.999999999999996 H20 L21.5 20.7 H26" stroke="#0000ff" stroke-width="1.3" fill="none" stroke-linejoin="round" stroke-linecap="round"/>
</g>
<g transform="translate(988,53)">
<path d="M27.6 0.6 L30.6 0.2 Q32 0.4 32 2 V25.8 Q32 27.4 30.5 27.6 L27.6 28 Z" fill="url(#monside)"/>
<path d="M1.6 21.6 L27.8 20.2 V28 H2 Q0.2 28 0.2 26.4 Z" fill="url(#monbez)" stroke="#4b5866" stroke-width="0.7"/>
<path d="M2.4 7 L27.8 0.6 V21.2 L1.2 22.8 L1 13 Z" fill="#ffffff" stroke="#414f5e" stroke-width="1.1" stroke-linejoin="round"/>
<rect x="2.2" y="25" width="3.4" height="1.2" fill="#5c6670"/><rect x="22.2" y="25.1" width="4.4" height="1.3" fill="#6c7680"/><rect x="13.2" y="25.2" width="1.3" height="1" fill="#8ea4c0"/>
<path d="M12.4 28.2 H22 L22.4 30 H12 Z" fill="#3e4852"/><path d="M11.8 30 H22.6 L24.2 31.8 H4 Z" fill="#38424c"/>
<path d="M3.2 14.2 L5 11.6 H11 L12.5 12.6 H16 L18 10.4 H21 L22 11.4 H26" stroke="#ff0000" stroke-width="1.5" fill="none" stroke-linejoin="round" stroke-linecap="round"/>
<path d="M5 13.2 L7 12.2 H10 L12 10.4 H15 L17 11.6 L20 10.6 L23 11.6 L25.5 10.4" stroke="#00c800" stroke-width="1.3" fill="none" stroke-linejoin="round" stroke-linecap="round"/>
<path d="M5.5 13 H8 M14 11.3 H16 M18 9.2 H21 M23 9.4 H25 L26.4 10.8" stroke="#0000ff" stroke-width="1.3" fill="none" stroke-linejoin="round" stroke-linecap="round"/>
<path d="M3.4 21.6 L5.4 19.8 H8.4 L11.5 17.8 L14.5 21.2 H18 L20.5 18.6 H22.8 L25.2 21.4 H26.6" stroke="#ff00ff" stroke-width="1.4" fill="none" stroke-linejoin="round" stroke-linecap="round"/>
</g>
<g transform="translate(1033,53)">
<path d="M27.6 0.6 L30.6 0.2 Q32 0.4 32 2 V25.8 Q32 27.4 30.5 27.6 L27.6 28 Z" fill="url(#monside)"/>
<path d="M1.6 21.6 L27.8 20.2 V28 H2 Q0.2 28 0.2 26.4 Z" fill="url(#monbez)" stroke="#4b5866" stroke-width="0.7"/>
<path d="M2.4 7 L27.8 0.6 V21.2 L1.2 22.8 L1 13 Z" fill="#2c2c30" stroke="#414f5e" stroke-width="1.1" stroke-linejoin="round"/>
<rect x="2.2" y="25" width="3.4" height="1.2" fill="#5c6670"/><rect x="22.2" y="25.1" width="4.4" height="1.3" fill="#6c7680"/><rect x="13.2" y="25.2" width="1.3" height="1" fill="#8ea4c0"/>
<path d="M12.4 28.2 H22 L22.4 30 H12 Z" fill="#3e4852"/><path d="M11.8 30 H22.6 L24.2 31.8 H4 Z" fill="#38424c"/>
<path d="M5 10.6 H8 L9 9.8 H14 L15 8.8 H19 L20 7.4 H24 L25 6.4 H26.8" stroke="#d8d000" stroke-width="1.3" fill="none" stroke-linejoin="round" stroke-linecap="round"/>
<path d="M3.6 15.6 L7 13.4 L10 15 L13 12.8 L16 14.4 L20 12.4 L23 13.8 L26.6 11.8" stroke="#ff6820" stroke-width="1.2" stroke-dasharray="2 1.2" fill="none" stroke-linejoin="round" stroke-linecap="round"/>
<path d="M3.6 14.6 L7 15.4 L10 13.6 L13 15 L17 13 L21 14.2 L26.6 13" stroke="#00c000" stroke-width="1.1" stroke-dasharray="1.6 1.6" fill="none" stroke-linejoin="round" stroke-linecap="round"/>
<path d="M3.6 13.4 L8 14.2 L12 12.2 L17 14.2 L22 12 L26.6 12.6" stroke="#2050ff" stroke-width="1" stroke-dasharray="1.4 2" fill="none" stroke-linejoin="round" stroke-linecap="round"/>
<path d="M3.6 18.8 H9 L10 18 H17 L18 17.4 H22 L23 16.6 H26.8" stroke="#ff00ff" stroke-width="1.2" fill="none" stroke-linejoin="round" stroke-linecap="round"/>
<path d="M4 21.2 H12 L13 20.4 H26.8" stroke="#7868d8" stroke-width="1.1" fill="none" stroke-linejoin="round" stroke-linecap="round"/>
</g>
</g>
<rect x="651" y="53" width="1" height="32" fill="#b4bccb" />
<rect x="652" y="53" width="1" height="33" fill="#ffffff" />
<rect x="812" y="53" width="1" height="32" fill="#b4bccb" />
<rect x="813" y="53" width="1" height="33" fill="#ffffff" />
<rect x="858" y="53" width="1" height="32" fill="#b4bccb" />
<rect x="859" y="53" width="1" height="33" fill="#ffffff" />
<rect x="942" y="53" width="1" height="32" fill="#b4bccb" />
<rect x="943" y="53" width="1" height="33" fill="#ffffff" />
<rect x="1026" y="53" width="1" height="32" fill="#b4bccb" />
<rect x="1027" y="53" width="1" height="33" fill="#ffffff" />
</svg>
</body></html>
